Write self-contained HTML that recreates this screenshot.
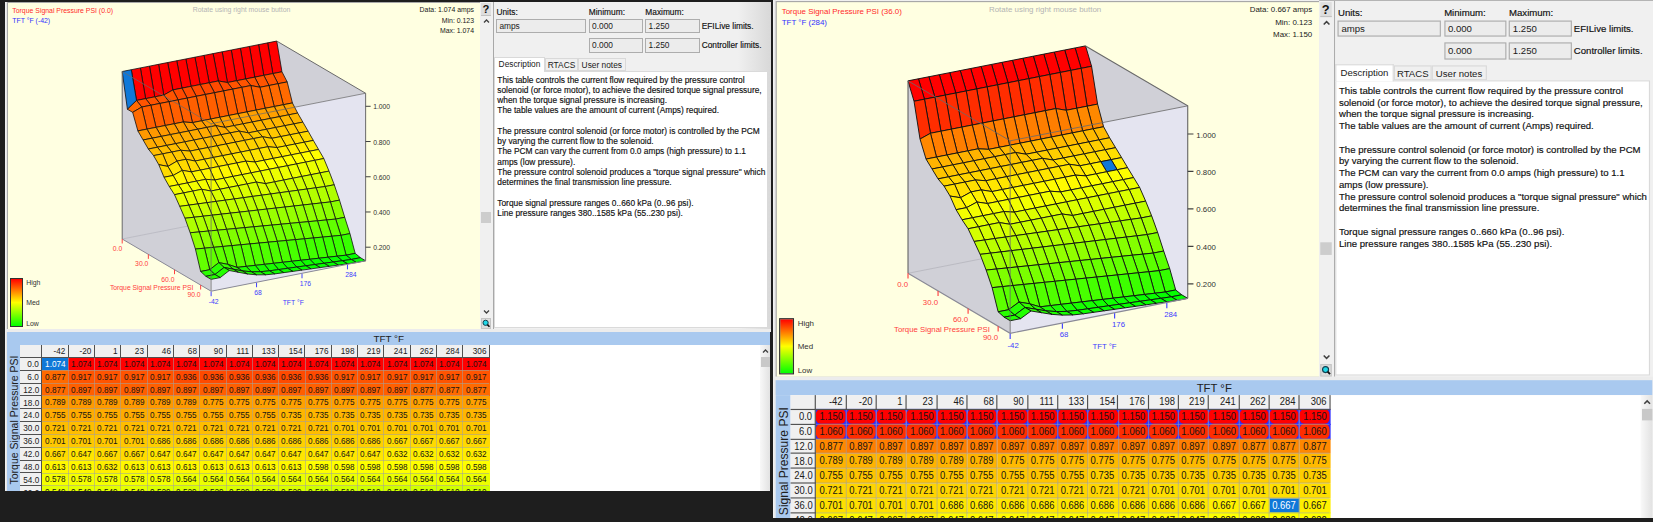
<!DOCTYPE html>
<html><head><meta charset="utf-8"><style>
*{margin:0;padding:0}
html,body{width:1653px;height:522px;overflow:hidden;background:#1e1e1e;position:relative}
.panel{position:absolute;left:0;top:0;width:771px;overflow:hidden;font-family:"Liberation Sans",sans-serif}
.panel div{position:absolute}
.ct{font-size:6.9px;line-height:8px;white-space:nowrap}
.ui{font-size:8.35px;line-height:10px;white-space:nowrap;color:#101010;-webkit-text-stroke:0.15px #101010}
.big{font-size:9.9px;line-height:12px;white-space:nowrap;color:#202020}
.box{background:#ececec;border:1px solid #adadad;box-sizing:border-box;font-size:8.35px;line-height:12.5px;color:#1a1a1a;padding-left:2.3px;white-space:nowrap}
.tab{background:#f0f0f0;border:1px solid #d9d9d9;box-sizing:border-box;font-size:8.35px;line-height:13.6px;text-align:center;color:#1a1a1a;white-space:nowrap}
.tx{height:11px;line-height:11px;white-space:nowrap}
.hd{text-align:right;color:#202020}
.dt{text-align:center}
.num{display:inline-block;font-size:9.9px;transform:scaleX(0.83);transform-origin:50% 50%;white-space:nowrap}
.hd .num{transform-origin:100% 50%}
</style></head>
<body>
<div style="position:absolute;left:773px;top:0;width:880px;height:518px;background:#f0f0f0"></div>
<div class="panel" style="height:491px">
<div style="position:absolute;left:5px;top:0px;width:2.2px;height:491px;background:linear-gradient(90deg,#f4f4f4,#e2e2e2)"></div>
<div style="position:absolute;left:7px;top:2px;width:473px;height:327px;background:#a8a8a8"></div>
<div style="position:absolute;left:7.7px;top:2.7px;width:472.3px;height:326.3px;background:#ffffe1;overflow:hidden">
<div style="position:absolute;left:-7.7px;top:-2.7px;width:771px;height:335px">
<svg width="771" height="335" viewBox="0 0 771 335" style="position:absolute;left:0;top:0" shape-rendering="geometricPrecision">
<polygon points="122.20,71.50 276.73,41.07 276.73,208.57 122.20,239.00" fill="#d0d0d7"/>
<polygon points="276.73,41.07 365.64,93.26 365.64,260.76 276.73,208.57" fill="#d0d0d7"/>
<polygon points="122.20,239.00 276.73,208.57 365.64,260.76 211.11,291.19" fill="#d0d0d7"/>
<polygon points="122.20,71.50 211.11,123.69 211.11,291.19 122.20,239.00" fill="#d0d0d7"/>
<polygon points="211.11,123.69 365.64,93.26 365.64,260.76 211.11,291.19" fill="#e4e4f0"/>
<line x1="122.2" y1="239.0" x2="276.73" y2="208.57" stroke="#b8b8c0" stroke-width="0.8"/>
<polygon points="267.64,42.86 276.73,41.07 281.96,71.79 272.87,73.58" fill="#ff0000" stroke="#101010" stroke-width="0.8" stroke-linejoin="round"/>
<polygon points="258.55,44.65 267.64,42.86 272.87,73.58 263.78,75.37" fill="#ff0000" stroke="#101010" stroke-width="0.8" stroke-linejoin="round"/>
<polygon points="272.87,73.58 281.96,71.79 287.19,81.91 278.10,83.70" fill="#ff5400" stroke="#101010" stroke-width="0.8" stroke-linejoin="round"/>
<polygon points="249.46,46.44 258.55,44.65 263.78,75.37 254.69,77.16" fill="#ff0000" stroke="#101010" stroke-width="0.8" stroke-linejoin="round"/>
<polygon points="263.78,75.37 272.87,73.58 278.10,83.70 269.01,85.49" fill="#ff5400" stroke="#101010" stroke-width="0.8" stroke-linejoin="round"/>
<polygon points="240.37,48.23 249.46,46.44 254.69,77.16 245.60,78.95" fill="#ff0000" stroke="#101010" stroke-width="0.8" stroke-linejoin="round"/>
<polygon points="278.10,83.70 287.19,81.91 292.42,102.94 283.33,104.73" fill="#ff6a00" stroke="#101010" stroke-width="0.8" stroke-linejoin="round"/>
<polygon points="254.69,77.16 263.78,75.37 269.01,85.49 259.92,87.28" fill="#ff5400" stroke="#101010" stroke-width="0.8" stroke-linejoin="round"/>
<polygon points="231.28,50.02 240.37,48.23 245.60,78.95 236.51,80.74" fill="#ff0000" stroke="#101010" stroke-width="0.8" stroke-linejoin="round"/>
<polygon points="269.01,85.49 278.10,83.70 283.33,104.73 274.24,106.52" fill="#ff6a00" stroke="#101010" stroke-width="0.8" stroke-linejoin="round"/>
<polygon points="245.60,78.95 254.69,77.16 259.92,87.28 250.83,85.55" fill="#ff5400" stroke="#101010" stroke-width="0.8" stroke-linejoin="round"/>
<polygon points="222.19,51.81 231.28,50.02 236.51,80.74 227.42,82.53" fill="#ff0000" stroke="#101010" stroke-width="0.8" stroke-linejoin="round"/>
<polygon points="283.33,104.73 292.42,102.94 297.65,113.06 288.56,114.85" fill="#ffa000" stroke="#101010" stroke-width="0.8" stroke-linejoin="round"/>
<polygon points="259.92,87.28 269.01,85.49 274.24,106.52 265.15,108.31" fill="#ff6a00" stroke="#101010" stroke-width="0.8" stroke-linejoin="round"/>
<polygon points="236.51,80.74 245.60,78.95 250.83,85.55 241.74,87.34" fill="#ff5400" stroke="#101010" stroke-width="0.8" stroke-linejoin="round"/>
<polygon points="213.10,53.60 222.19,51.81 227.42,82.53 218.33,80.98" fill="#ff0000" stroke="#101010" stroke-width="0.8" stroke-linejoin="round"/>
<polygon points="274.24,106.52 283.33,104.73 288.56,114.85 279.47,116.64" fill="#ffa000" stroke="#101010" stroke-width="0.8" stroke-linejoin="round"/>
<polygon points="250.83,85.55 259.92,87.28 265.15,108.31 256.06,110.10" fill="#ff5f00" stroke="#101010" stroke-width="0.8" stroke-linejoin="round"/>
<polygon points="227.42,82.53 236.51,80.74 241.74,87.34 232.65,89.13" fill="#ff5400" stroke="#101010" stroke-width="0.8" stroke-linejoin="round"/>
<polygon points="288.56,114.85 297.65,113.06 302.88,122.12 293.79,123.91" fill="#ffb600" stroke="#101010" stroke-width="0.8" stroke-linejoin="round"/>
<polygon points="204.01,55.39 213.10,53.60 218.33,80.98 209.24,82.77" fill="#ff0000" stroke="#101010" stroke-width="0.8" stroke-linejoin="round"/>
<polygon points="265.15,108.31 274.24,106.52 279.47,116.64 270.38,118.43" fill="#ffa000" stroke="#101010" stroke-width="0.8" stroke-linejoin="round"/>
<polygon points="241.74,87.34 250.83,85.55 256.06,110.10 246.97,111.89" fill="#ff5f00" stroke="#101010" stroke-width="0.8" stroke-linejoin="round"/>
<polygon points="218.33,80.98 227.42,82.53 232.65,89.13 223.56,90.92" fill="#ff4a00" stroke="#101010" stroke-width="0.8" stroke-linejoin="round"/>
<polygon points="279.47,116.64 288.56,114.85 293.79,123.91 284.70,125.70" fill="#ffb600" stroke="#101010" stroke-width="0.8" stroke-linejoin="round"/>
<polygon points="194.92,57.18 204.01,55.39 209.24,82.77 200.15,84.56" fill="#ff0000" stroke="#101010" stroke-width="0.8" stroke-linejoin="round"/>
<polygon points="256.06,110.10 265.15,108.31 270.38,118.43 261.29,120.22" fill="#ffa000" stroke="#101010" stroke-width="0.8" stroke-linejoin="round"/>
<polygon points="232.65,89.13 241.74,87.34 246.97,111.89 237.88,113.68" fill="#ff5f00" stroke="#101010" stroke-width="0.8" stroke-linejoin="round"/>
<polygon points="293.79,123.91 302.88,122.12 308.11,131.18 299.02,132.97" fill="#ffc800" stroke="#101010" stroke-width="0.8" stroke-linejoin="round"/>
<polygon points="209.24,82.77 218.33,80.98 223.56,90.92 214.47,92.71" fill="#ff4a00" stroke="#101010" stroke-width="0.8" stroke-linejoin="round"/>
<polygon points="270.38,118.43 279.47,116.64 284.70,125.70 275.61,127.49" fill="#ffb600" stroke="#101010" stroke-width="0.8" stroke-linejoin="round"/>
<polygon points="185.83,58.97 194.92,57.18 200.15,84.56 191.06,86.35" fill="#ff0000" stroke="#101010" stroke-width="0.8" stroke-linejoin="round"/>
<polygon points="246.97,111.89 256.06,110.10 261.29,120.22 252.20,122.01" fill="#ffa000" stroke="#101010" stroke-width="0.8" stroke-linejoin="round"/>
<polygon points="223.56,90.92 232.65,89.13 237.88,113.68 228.79,115.47" fill="#ff5f00" stroke="#101010" stroke-width="0.8" stroke-linejoin="round"/>
<polygon points="284.70,125.70 293.79,123.91 299.02,132.97 289.93,134.76" fill="#ffc800" stroke="#101010" stroke-width="0.8" stroke-linejoin="round"/>
<polygon points="200.15,84.56 209.24,82.77 214.47,92.71 205.38,94.50" fill="#ff4a00" stroke="#101010" stroke-width="0.8" stroke-linejoin="round"/>
<polygon points="261.29,120.22 270.38,118.43 275.61,127.49 266.52,129.28" fill="#ffb600" stroke="#101010" stroke-width="0.8" stroke-linejoin="round"/>
<polygon points="176.74,60.76 185.83,58.97 191.06,86.35 181.97,88.14" fill="#ff0000" stroke="#101010" stroke-width="0.8" stroke-linejoin="round"/>
<polygon points="237.88,113.68 246.97,111.89 252.20,122.01 243.11,123.80" fill="#ffa000" stroke="#101010" stroke-width="0.8" stroke-linejoin="round"/>
<polygon points="299.02,132.97 308.11,131.18 313.34,140.41 304.25,142.20" fill="#ffda00" stroke="#101010" stroke-width="0.8" stroke-linejoin="round"/>
<polygon points="214.47,92.71 223.56,90.92 228.79,115.47 219.70,117.26" fill="#ff5f00" stroke="#101010" stroke-width="0.8" stroke-linejoin="round"/>
<polygon points="275.61,127.49 284.70,125.70 289.93,134.76 280.84,136.55" fill="#ffc800" stroke="#101010" stroke-width="0.8" stroke-linejoin="round"/>
<polygon points="191.06,86.35 200.15,84.56 205.38,94.50 196.29,96.29" fill="#ff4a00" stroke="#101010" stroke-width="0.8" stroke-linejoin="round"/>
<polygon points="252.20,122.01 261.29,120.22 266.52,129.28 257.43,131.07" fill="#ffb600" stroke="#101010" stroke-width="0.8" stroke-linejoin="round"/>
<polygon points="167.65,62.55 176.74,60.76 181.97,88.14 172.88,89.93" fill="#ff0000" stroke="#101010" stroke-width="0.8" stroke-linejoin="round"/>
<polygon points="228.79,115.47 237.88,113.68 243.11,123.80 234.02,125.59" fill="#ffa000" stroke="#101010" stroke-width="0.8" stroke-linejoin="round"/>
<polygon points="289.93,134.76 299.02,132.97 304.25,142.20 295.16,143.99" fill="#ffda00" stroke="#101010" stroke-width="0.8" stroke-linejoin="round"/>
<polygon points="205.38,94.50 214.47,92.71 219.70,117.26 210.61,119.05" fill="#ff5f00" stroke="#101010" stroke-width="0.8" stroke-linejoin="round"/>
<polygon points="266.52,129.28 275.61,127.49 280.84,136.55 271.75,138.34" fill="#ffc800" stroke="#101010" stroke-width="0.8" stroke-linejoin="round"/>
<polygon points="181.97,88.14 191.06,86.35 196.29,96.29 187.20,98.08" fill="#ff4a00" stroke="#101010" stroke-width="0.8" stroke-linejoin="round"/>
<polygon points="243.11,123.80 252.20,122.01 257.43,131.07 248.34,132.86" fill="#ffb600" stroke="#101010" stroke-width="0.8" stroke-linejoin="round"/>
<polygon points="158.56,64.34 167.65,62.55 172.88,89.93 163.79,95.06" fill="#ff0000" stroke="#101010" stroke-width="0.8" stroke-linejoin="round"/>
<polygon points="304.25,142.20 313.34,140.41 318.57,149.47 309.48,151.26" fill="#ffed00" stroke="#101010" stroke-width="0.8" stroke-linejoin="round"/>
<polygon points="219.70,117.26 228.79,115.47 234.02,125.59 224.93,127.38" fill="#ffa000" stroke="#101010" stroke-width="0.8" stroke-linejoin="round"/>
<polygon points="280.84,136.55 289.93,134.76 295.16,143.99 286.07,145.78" fill="#ffda00" stroke="#101010" stroke-width="0.8" stroke-linejoin="round"/>
<polygon points="196.29,96.29 205.38,94.50 210.61,119.05 201.52,120.84" fill="#ff5f00" stroke="#101010" stroke-width="0.8" stroke-linejoin="round"/>
<polygon points="257.43,131.07 266.52,129.28 271.75,138.34 262.66,136.78" fill="#ffc800" stroke="#101010" stroke-width="0.8" stroke-linejoin="round"/>
<polygon points="172.88,89.93 181.97,88.14 187.20,98.08 178.11,99.87" fill="#ff4a00" stroke="#101010" stroke-width="0.8" stroke-linejoin="round"/>
<polygon points="234.02,125.59 243.11,123.80 248.34,132.86 239.25,131.12" fill="#ffb600" stroke="#101010" stroke-width="0.8" stroke-linejoin="round"/>
<polygon points="149.47,66.13 158.56,64.34 163.79,95.06 154.70,96.85" fill="#ff0000" stroke="#101010" stroke-width="0.8" stroke-linejoin="round"/>
<polygon points="295.16,143.99 304.25,142.20 309.48,151.26 300.39,153.05" fill="#ffed00" stroke="#101010" stroke-width="0.8" stroke-linejoin="round"/>
<polygon points="210.61,119.05 219.70,117.26 224.93,127.38 215.84,125.65" fill="#ffa000" stroke="#101010" stroke-width="0.8" stroke-linejoin="round"/>
<polygon points="271.75,138.34 280.84,136.55 286.07,145.78 276.98,147.57" fill="#ffda00" stroke="#101010" stroke-width="0.8" stroke-linejoin="round"/>
<polygon points="187.20,98.08 196.29,96.29 201.52,120.84 192.43,122.63" fill="#ff5f00" stroke="#101010" stroke-width="0.8" stroke-linejoin="round"/>
<polygon points="248.34,132.86 257.43,131.07 262.66,136.78 253.57,138.57" fill="#ffc800" stroke="#101010" stroke-width="0.8" stroke-linejoin="round"/>
<polygon points="163.79,95.06 172.88,89.93 178.11,99.87 169.02,101.66" fill="#ff5400" stroke="#101010" stroke-width="0.8" stroke-linejoin="round"/>
<polygon points="309.48,151.26 318.57,149.47 323.80,158.53 314.71,160.32" fill="#ffff00" stroke="#101010" stroke-width="0.8" stroke-linejoin="round"/>
<polygon points="224.93,127.38 234.02,125.59 239.25,131.12 230.16,132.91" fill="#ffb600" stroke="#101010" stroke-width="0.8" stroke-linejoin="round"/>
<polygon points="140.38,67.92 149.47,66.13 154.70,96.85 145.61,98.64" fill="#ff0000" stroke="#101010" stroke-width="0.8" stroke-linejoin="round"/>
<polygon points="286.07,145.78 295.16,143.99 300.39,153.05 291.30,154.84" fill="#ffed00" stroke="#101010" stroke-width="0.8" stroke-linejoin="round"/>
<polygon points="201.52,120.84 210.61,119.05 215.84,125.65 206.75,127.44" fill="#ffa000" stroke="#101010" stroke-width="0.8" stroke-linejoin="round"/>
<polygon points="262.66,136.78 271.75,138.34 276.98,147.57 267.89,146.72" fill="#ffd000" stroke="#101010" stroke-width="0.8" stroke-linejoin="round"/>
<polygon points="178.11,99.87 187.20,98.08 192.43,122.63 183.34,121.96" fill="#ff5f00" stroke="#101010" stroke-width="0.8" stroke-linejoin="round"/>
<polygon points="239.25,131.12 248.34,132.86 253.57,138.57 244.48,140.36" fill="#ffbd00" stroke="#101010" stroke-width="0.8" stroke-linejoin="round"/>
<polygon points="154.70,96.85 163.79,95.06 169.02,101.66 159.93,103.45" fill="#ff5400" stroke="#101010" stroke-width="0.8" stroke-linejoin="round"/>
<polygon points="300.39,153.05 309.48,151.26 314.71,160.32 305.62,162.11" fill="#ffff00" stroke="#101010" stroke-width="0.8" stroke-linejoin="round"/>
<polygon points="215.84,125.65 224.93,127.38 230.16,132.91 221.07,134.70" fill="#ffab00" stroke="#101010" stroke-width="0.8" stroke-linejoin="round"/>
<polygon points="131.29,69.71 140.38,67.92 145.61,98.64 136.52,100.43" fill="#ff0000" stroke="#101010" stroke-width="0.8" stroke-linejoin="round"/>
<polygon points="276.98,147.57 286.07,145.78 291.30,154.84 282.21,156.63" fill="#ffed00" stroke="#101010" stroke-width="0.8" stroke-linejoin="round"/>
<polygon points="192.43,122.63 201.52,120.84 206.75,127.44 197.66,129.23" fill="#ffa000" stroke="#101010" stroke-width="0.8" stroke-linejoin="round"/>
<polygon points="253.57,138.57 262.66,136.78 267.89,146.72 258.80,148.51" fill="#ffd000" stroke="#101010" stroke-width="0.8" stroke-linejoin="round"/>
<polygon points="169.02,101.66 178.11,99.87 183.34,121.96 174.25,123.75" fill="#ff5f00" stroke="#101010" stroke-width="0.8" stroke-linejoin="round"/>
<polygon points="314.71,160.32 323.80,158.53 329.03,171.11 319.94,172.90" fill="#ecff00" stroke="#101010" stroke-width="0.8" stroke-linejoin="round"/>
<polygon points="230.16,132.91 239.25,131.12 244.48,140.36 235.39,142.15" fill="#ffbd00" stroke="#101010" stroke-width="0.8" stroke-linejoin="round"/>
<polygon points="145.61,98.64 154.70,96.85 159.93,103.45 150.84,105.24" fill="#ff5400" stroke="#101010" stroke-width="0.8" stroke-linejoin="round"/>
<polygon points="291.30,154.84 300.39,153.05 305.62,162.11 296.53,163.90" fill="#ffff00" stroke="#101010" stroke-width="0.8" stroke-linejoin="round"/>
<polygon points="206.75,127.44 215.84,125.65 221.07,134.70 211.98,136.49" fill="#ffab00" stroke="#101010" stroke-width="0.8" stroke-linejoin="round"/>
<polygon points="122.20,71.50 131.29,69.71 136.52,100.43 127.43,109.27" fill="#0f78d8" stroke="#101010" stroke-width="0.8" stroke-linejoin="round"/>
<polygon points="267.89,146.72 276.98,147.57 282.21,156.63 273.12,158.42" fill="#ffe500" stroke="#101010" stroke-width="0.8" stroke-linejoin="round"/>
<polygon points="183.34,121.96 192.43,122.63 197.66,129.23 188.57,131.02" fill="#ff9900" stroke="#101010" stroke-width="0.8" stroke-linejoin="round"/>
<polygon points="244.48,140.36 253.57,138.57 258.80,148.51 249.71,150.30" fill="#ffd000" stroke="#101010" stroke-width="0.8" stroke-linejoin="round"/>
<polygon points="159.93,103.45 169.02,101.66 174.25,123.75 165.16,125.54" fill="#ff5f00" stroke="#101010" stroke-width="0.8" stroke-linejoin="round"/>
<polygon points="305.62,162.11 314.71,160.32 319.94,172.90 310.85,174.69" fill="#ecff00" stroke="#101010" stroke-width="0.8" stroke-linejoin="round"/>
<polygon points="221.07,134.70 230.16,132.91 235.39,142.15 226.30,143.94" fill="#ffbd00" stroke="#101010" stroke-width="0.8" stroke-linejoin="round"/>
<polygon points="136.52,100.43 145.61,98.64 150.84,105.24 141.75,107.03" fill="#ff5400" stroke="#101010" stroke-width="0.8" stroke-linejoin="round"/>
<polygon points="282.21,156.63 291.30,154.84 296.53,163.90 287.44,165.69" fill="#ffff00" stroke="#101010" stroke-width="0.8" stroke-linejoin="round"/>
<polygon points="197.66,129.23 206.75,127.44 211.98,136.49 202.89,138.28" fill="#ffab00" stroke="#101010" stroke-width="0.8" stroke-linejoin="round"/>
<polygon points="258.80,148.51 267.89,146.72 273.12,158.42 264.03,160.21" fill="#ffe500" stroke="#101010" stroke-width="0.8" stroke-linejoin="round"/>
<polygon points="174.25,123.75 183.34,121.96 188.57,131.02 179.48,132.81" fill="#ff9900" stroke="#101010" stroke-width="0.8" stroke-linejoin="round"/>
<polygon points="319.94,172.90 329.03,171.11 334.26,184.75 325.17,186.54" fill="#d0ff00" stroke="#101010" stroke-width="0.8" stroke-linejoin="round"/>
<polygon points="235.39,142.15 244.48,140.36 249.71,150.30 240.62,152.09" fill="#ffd000" stroke="#101010" stroke-width="0.8" stroke-linejoin="round"/>
<polygon points="150.84,105.24 159.93,103.45 165.16,125.54 156.07,127.33" fill="#ff5f00" stroke="#101010" stroke-width="0.8" stroke-linejoin="round"/>
<polygon points="296.53,163.90 305.62,162.11 310.85,174.69 301.76,176.48" fill="#ecff00" stroke="#101010" stroke-width="0.8" stroke-linejoin="round"/>
<polygon points="211.98,136.49 221.07,134.70 226.30,143.94 217.21,145.73" fill="#ffbd00" stroke="#101010" stroke-width="0.8" stroke-linejoin="round"/>
<polygon points="127.43,109.27 136.52,100.43 141.75,107.03 132.66,112.34" fill="#ff6a00" stroke="#101010" stroke-width="0.8" stroke-linejoin="round"/>
<polygon points="273.12,158.42 282.21,156.63 287.44,165.69 278.35,167.48" fill="#ffff00" stroke="#101010" stroke-width="0.8" stroke-linejoin="round"/>
<polygon points="188.57,131.02 197.66,129.23 202.89,138.28 193.80,140.07" fill="#ffab00" stroke="#101010" stroke-width="0.8" stroke-linejoin="round"/>
<polygon points="249.71,150.30 258.80,148.51 264.03,160.21 254.94,162.00" fill="#ffe500" stroke="#101010" stroke-width="0.8" stroke-linejoin="round"/>
<polygon points="165.16,125.54 174.25,123.75 179.48,132.81 170.39,134.60" fill="#ff9900" stroke="#101010" stroke-width="0.8" stroke-linejoin="round"/>
<polygon points="310.85,174.69 319.94,172.90 325.17,186.54 316.08,187.77" fill="#d0ff00" stroke="#101010" stroke-width="0.8" stroke-linejoin="round"/>
<polygon points="226.30,143.94 235.39,142.15 240.62,152.09 231.53,153.88" fill="#ffd000" stroke="#101010" stroke-width="0.8" stroke-linejoin="round"/>
<polygon points="141.75,107.03 150.84,105.24 156.07,127.33 146.98,129.12" fill="#ff5f00" stroke="#101010" stroke-width="0.8" stroke-linejoin="round"/>
<polygon points="287.44,165.69 296.53,163.90 301.76,176.48 292.67,178.27" fill="#ecff00" stroke="#101010" stroke-width="0.8" stroke-linejoin="round"/>
<polygon points="202.89,138.28 211.98,136.49 217.21,145.73 208.12,147.52" fill="#ffbd00" stroke="#101010" stroke-width="0.8" stroke-linejoin="round"/>
<polygon points="264.03,160.21 273.12,158.42 278.35,167.48 269.26,169.27" fill="#ffff00" stroke="#101010" stroke-width="0.8" stroke-linejoin="round"/>
<polygon points="179.48,132.81 188.57,131.02 193.80,140.07 184.71,141.86" fill="#ffab00" stroke="#101010" stroke-width="0.8" stroke-linejoin="round"/>
<polygon points="325.17,186.54 334.26,184.75 339.49,200.14 330.40,201.93" fill="#afff00" stroke="#101010" stroke-width="0.8" stroke-linejoin="round"/>
<polygon points="240.62,152.09 249.71,150.30 254.94,162.00 245.85,161.15" fill="#ffe500" stroke="#101010" stroke-width="0.8" stroke-linejoin="round"/>
<polygon points="156.07,127.33 165.16,125.54 170.39,134.60 161.30,136.39" fill="#ff9900" stroke="#101010" stroke-width="0.8" stroke-linejoin="round"/>
<polygon points="301.76,176.48 310.85,174.69 316.08,187.77 306.99,189.01" fill="#d0ff00" stroke="#101010" stroke-width="0.8" stroke-linejoin="round"/>
<polygon points="217.21,145.73 226.30,143.94 231.53,153.88 222.44,155.67" fill="#ffd000" stroke="#101010" stroke-width="0.8" stroke-linejoin="round"/>
<polygon points="132.66,112.34 141.75,107.03 146.98,129.12 137.89,130.91" fill="#ff6a00" stroke="#101010" stroke-width="0.8" stroke-linejoin="round"/>
<polygon points="278.35,167.48 287.44,165.69 292.67,178.27 283.58,180.06" fill="#ecff00" stroke="#101010" stroke-width="0.8" stroke-linejoin="round"/>
<polygon points="193.80,140.07 202.89,138.28 208.12,147.52 199.03,149.31" fill="#ffbd00" stroke="#101010" stroke-width="0.8" stroke-linejoin="round"/>
<polygon points="254.94,162.00 264.03,160.21 269.26,169.27 260.17,171.06" fill="#ffff00" stroke="#101010" stroke-width="0.8" stroke-linejoin="round"/>
<polygon points="170.39,134.60 179.48,132.81 184.71,141.86 175.62,143.65" fill="#ffab00" stroke="#101010" stroke-width="0.8" stroke-linejoin="round"/>
<polygon points="316.08,187.77 325.17,186.54 330.40,201.93 321.31,202.95" fill="#b1ff00" stroke="#101010" stroke-width="0.8" stroke-linejoin="round"/>
<polygon points="231.53,153.88 240.62,152.09 245.85,161.15 236.76,162.94" fill="#ffe500" stroke="#101010" stroke-width="0.8" stroke-linejoin="round"/>
<polygon points="146.98,129.12 156.07,127.33 161.30,136.39 152.21,138.18" fill="#ff9900" stroke="#101010" stroke-width="0.8" stroke-linejoin="round"/>
<polygon points="292.67,178.27 301.76,176.48 306.99,189.01 297.90,190.25" fill="#d0ff00" stroke="#101010" stroke-width="0.8" stroke-linejoin="round"/>
<polygon points="208.12,147.52 217.21,145.73 222.44,155.67 213.35,157.46" fill="#ffd000" stroke="#101010" stroke-width="0.8" stroke-linejoin="round"/>
<polygon points="269.26,169.27 278.35,167.48 283.58,180.06 274.49,181.85" fill="#ecff00" stroke="#101010" stroke-width="0.8" stroke-linejoin="round"/>
<polygon points="184.71,141.86 193.80,140.07 199.03,149.31 189.94,151.10" fill="#ffbd00" stroke="#101010" stroke-width="0.8" stroke-linejoin="round"/>
<polygon points="330.40,201.93 339.49,200.14 344.72,217.30 335.63,219.09" fill="#8aff00" stroke="#101010" stroke-width="0.8" stroke-linejoin="round"/>
<polygon points="245.85,161.15 254.94,162.00 260.17,171.06 251.08,172.85" fill="#fff700" stroke="#101010" stroke-width="0.8" stroke-linejoin="round"/>
<polygon points="161.30,136.39 170.39,134.60 175.62,143.65 166.53,145.44" fill="#ffab00" stroke="#101010" stroke-width="0.8" stroke-linejoin="round"/>
<polygon points="306.99,189.01 316.08,187.77 321.31,202.95 312.22,203.97" fill="#b3ff00" stroke="#101010" stroke-width="0.8" stroke-linejoin="round"/>
<polygon points="222.44,155.67 231.53,153.88 236.76,162.94 227.67,164.73" fill="#ffe500" stroke="#101010" stroke-width="0.8" stroke-linejoin="round"/>
<polygon points="137.89,130.91 146.98,129.12 152.21,138.18 143.12,139.97" fill="#ff9900" stroke="#101010" stroke-width="0.8" stroke-linejoin="round"/>
<polygon points="283.58,180.06 292.67,178.27 297.90,190.25 288.81,191.49" fill="#d0ff00" stroke="#101010" stroke-width="0.8" stroke-linejoin="round"/>
<polygon points="199.03,149.31 208.12,147.52 213.35,157.46 204.26,159.25" fill="#ffd000" stroke="#101010" stroke-width="0.8" stroke-linejoin="round"/>
<polygon points="260.17,171.06 269.26,169.27 274.49,181.85 265.40,183.64" fill="#ecff00" stroke="#101010" stroke-width="0.8" stroke-linejoin="round"/>
<polygon points="175.62,143.65 184.71,141.86 189.94,151.10 180.85,150.25" fill="#ffbd00" stroke="#101010" stroke-width="0.8" stroke-linejoin="round"/>
<polygon points="321.31,202.95 330.40,201.93 335.63,219.09 326.54,219.95" fill="#8cff00" stroke="#101010" stroke-width="0.8" stroke-linejoin="round"/>
<polygon points="236.76,162.94 245.85,161.15 251.08,172.85 241.99,174.64" fill="#fff700" stroke="#101010" stroke-width="0.8" stroke-linejoin="round"/>
<polygon points="152.21,138.18 161.30,136.39 166.53,145.44 157.44,147.23" fill="#ffab00" stroke="#101010" stroke-width="0.8" stroke-linejoin="round"/>
<polygon points="297.90,190.25 306.99,189.01 312.22,203.97 303.13,204.99" fill="#b4ff00" stroke="#101010" stroke-width="0.8" stroke-linejoin="round"/>
<polygon points="213.35,157.46 222.44,155.67 227.67,164.73 218.58,166.52" fill="#ffe500" stroke="#101010" stroke-width="0.8" stroke-linejoin="round"/>
<polygon points="274.49,181.85 283.58,180.06 288.81,191.49 279.72,192.73" fill="#d0ff00" stroke="#101010" stroke-width="0.8" stroke-linejoin="round"/>
<polygon points="189.94,151.10 199.03,149.31 204.26,159.25 195.17,161.04" fill="#ffd000" stroke="#101010" stroke-width="0.8" stroke-linejoin="round"/>
<polygon points="335.63,219.09 344.72,217.30 349.95,233.58 340.86,235.37" fill="#5fff00" stroke="#101010" stroke-width="0.8" stroke-linejoin="round"/>
<polygon points="251.08,172.85 260.17,171.06 265.40,183.64 256.31,182.08" fill="#ecff00" stroke="#101010" stroke-width="0.8" stroke-linejoin="round"/>
<polygon points="166.53,145.44 175.62,143.65 180.85,150.25 171.76,152.04" fill="#ffbd00" stroke="#101010" stroke-width="0.8" stroke-linejoin="round"/>
<polygon points="312.22,203.97 321.31,202.95 326.54,219.95 317.45,220.80" fill="#8fff00" stroke="#101010" stroke-width="0.8" stroke-linejoin="round"/>
<polygon points="227.67,164.73 236.76,162.94 241.99,174.64 232.90,176.43" fill="#fff700" stroke="#101010" stroke-width="0.8" stroke-linejoin="round"/>
<polygon points="143.12,139.97 152.21,138.18 157.44,147.23 148.35,149.02" fill="#ffab00" stroke="#101010" stroke-width="0.8" stroke-linejoin="round"/>
<polygon points="288.81,191.49 297.90,190.25 303.13,204.99 294.04,206.01" fill="#b6ff00" stroke="#101010" stroke-width="0.8" stroke-linejoin="round"/>
<polygon points="204.26,159.25 213.35,157.46 218.58,166.52 209.49,168.31" fill="#ffe500" stroke="#101010" stroke-width="0.8" stroke-linejoin="round"/>
<polygon points="265.40,183.64 274.49,181.85 279.72,192.73 270.63,193.97" fill="#d0ff00" stroke="#101010" stroke-width="0.8" stroke-linejoin="round"/>
<polygon points="180.85,150.25 189.94,151.10 195.17,161.04 186.08,159.31" fill="#ffc800" stroke="#101010" stroke-width="0.8" stroke-linejoin="round"/>
<polygon points="326.54,219.95 335.63,219.09 340.86,235.37 331.77,236.23" fill="#62ff00" stroke="#101010" stroke-width="0.8" stroke-linejoin="round"/>
<polygon points="241.99,174.64 251.08,172.85 256.31,182.08 247.22,183.87" fill="#ecff00" stroke="#101010" stroke-width="0.8" stroke-linejoin="round"/>
<polygon points="157.44,147.23 166.53,145.44 171.76,152.04 162.67,153.83" fill="#ffbd00" stroke="#101010" stroke-width="0.8" stroke-linejoin="round"/>
<polygon points="303.13,204.99 312.22,203.97 317.45,220.80 308.36,221.66" fill="#91ff00" stroke="#101010" stroke-width="0.8" stroke-linejoin="round"/>
<polygon points="218.58,166.52 227.67,164.73 232.90,176.43 223.81,178.22" fill="#fff700" stroke="#101010" stroke-width="0.8" stroke-linejoin="round"/>
<polygon points="279.72,192.73 288.81,191.49 294.04,206.01 284.95,207.03" fill="#b8ff00" stroke="#101010" stroke-width="0.8" stroke-linejoin="round"/>
<polygon points="195.17,161.04 204.26,159.25 209.49,168.31 200.40,170.10" fill="#ffe500" stroke="#101010" stroke-width="0.8" stroke-linejoin="round"/>
<polygon points="340.86,235.37 349.95,233.58 355.18,253.39 346.09,255.18" fill="#37ff00" stroke="#101010" stroke-width="0.8" stroke-linejoin="round"/>
<polygon points="256.31,182.08 265.40,183.64 270.63,193.97 261.54,195.21" fill="#daff00" stroke="#101010" stroke-width="0.8" stroke-linejoin="round"/>
<polygon points="171.76,152.04 180.85,150.25 186.08,159.31 176.99,161.10" fill="#ffc800" stroke="#101010" stroke-width="0.8" stroke-linejoin="round"/>
<polygon points="317.45,220.80 326.54,219.95 331.77,236.23 322.68,237.08" fill="#65ff00" stroke="#101010" stroke-width="0.8" stroke-linejoin="round"/>
<polygon points="232.90,176.43 241.99,174.64 247.22,183.87 238.13,185.66" fill="#ecff00" stroke="#101010" stroke-width="0.8" stroke-linejoin="round"/>
<polygon points="148.35,149.02 157.44,147.23 162.67,153.83 153.58,155.62" fill="#ffbd00" stroke="#101010" stroke-width="0.8" stroke-linejoin="round"/>
<polygon points="294.04,206.01 303.13,204.99 308.36,221.66 299.27,222.51" fill="#93ff00" stroke="#101010" stroke-width="0.8" stroke-linejoin="round"/>
<polygon points="209.49,168.31 218.58,166.52 223.81,178.22 214.72,180.01" fill="#fff700" stroke="#101010" stroke-width="0.8" stroke-linejoin="round"/>
<polygon points="270.63,193.97 279.72,192.73 284.95,207.03 275.86,208.05" fill="#b9ff00" stroke="#101010" stroke-width="0.8" stroke-linejoin="round"/>
<polygon points="186.08,159.31 195.17,161.04 200.40,170.10 191.31,171.89" fill="#ffda00" stroke="#101010" stroke-width="0.8" stroke-linejoin="round"/>
<polygon points="331.77,236.23 340.86,235.37 346.09,255.18 337.00,256.20" fill="#3aff00" stroke="#101010" stroke-width="0.8" stroke-linejoin="round"/>
<polygon points="247.22,183.87 256.31,182.08 261.54,195.21 252.45,196.45" fill="#daff00" stroke="#101010" stroke-width="0.8" stroke-linejoin="round"/>
<polygon points="162.67,153.83 171.76,152.04 176.99,161.10 167.90,166.41" fill="#ffc800" stroke="#101010" stroke-width="0.8" stroke-linejoin="round"/>
<polygon points="308.36,221.66 317.45,220.80 322.68,237.08 313.59,237.94" fill="#67ff00" stroke="#101010" stroke-width="0.8" stroke-linejoin="round"/>
<polygon points="223.81,178.22 232.90,176.43 238.13,185.66 229.04,187.45" fill="#ecff00" stroke="#101010" stroke-width="0.8" stroke-linejoin="round"/>
<polygon points="284.95,207.03 294.04,206.01 299.27,222.51 290.18,223.37" fill="#96ff00" stroke="#101010" stroke-width="0.8" stroke-linejoin="round"/>
<polygon points="200.40,170.10 209.49,168.31 214.72,180.01 205.63,179.33" fill="#fff700" stroke="#101010" stroke-width="0.8" stroke-linejoin="round"/>
<polygon points="346.09,255.18 355.18,253.39 360.41,257.69 351.32,259.48" fill="#04ff00" stroke="#101010" stroke-width="0.8" stroke-linejoin="round"/>
<polygon points="261.54,195.21 270.63,193.97 275.86,208.05 266.77,209.07" fill="#bbff00" stroke="#101010" stroke-width="0.8" stroke-linejoin="round"/>
<polygon points="176.99,161.10 186.08,159.31 191.31,171.89 182.22,170.33" fill="#ffda00" stroke="#101010" stroke-width="0.8" stroke-linejoin="round"/>
<polygon points="322.68,237.08 331.77,236.23 337.00,256.20 327.91,257.22" fill="#3cff00" stroke="#101010" stroke-width="0.8" stroke-linejoin="round"/>
<polygon points="238.13,185.66 247.22,183.87 252.45,196.45 243.36,197.69" fill="#daff00" stroke="#101010" stroke-width="0.8" stroke-linejoin="round"/>
<polygon points="153.58,155.62 162.67,153.83 167.90,166.41 158.81,164.68" fill="#ffc800" stroke="#101010" stroke-width="0.8" stroke-linejoin="round"/>
<polygon points="299.27,222.51 308.36,221.66 313.59,237.94 304.50,238.79" fill="#6aff00" stroke="#101010" stroke-width="0.8" stroke-linejoin="round"/>
<polygon points="214.72,180.01 223.81,178.22 229.04,187.45 219.95,189.24" fill="#ecff00" stroke="#101010" stroke-width="0.8" stroke-linejoin="round"/>
<polygon points="275.86,208.05 284.95,207.03 290.18,223.37 281.09,224.22" fill="#98ff00" stroke="#101010" stroke-width="0.8" stroke-linejoin="round"/>
<polygon points="191.31,171.89 200.40,170.10 205.63,179.33 196.54,181.12" fill="#fff700" stroke="#101010" stroke-width="0.8" stroke-linejoin="round"/>
<polygon points="337.00,256.20 346.09,255.18 351.32,259.48 342.23,260.74" fill="#06ff00" stroke="#101010" stroke-width="0.8" stroke-linejoin="round"/>
<polygon points="252.45,196.45 261.54,195.21 266.77,209.07 257.68,210.09" fill="#bdff00" stroke="#101010" stroke-width="0.8" stroke-linejoin="round"/>
<polygon points="167.90,166.41 176.99,161.10 182.22,170.33 173.13,175.47" fill="#ffe500" stroke="#101010" stroke-width="0.8" stroke-linejoin="round"/>
<polygon points="313.59,237.94 322.68,237.08 327.91,257.22 318.82,258.24" fill="#3fff00" stroke="#101010" stroke-width="0.8" stroke-linejoin="round"/>
<polygon points="229.04,187.45 238.13,185.66 243.36,197.69 234.27,198.93" fill="#daff00" stroke="#101010" stroke-width="0.8" stroke-linejoin="round"/>
<polygon points="290.18,223.37 299.27,222.51 304.50,238.79 295.41,239.65" fill="#6dff00" stroke="#101010" stroke-width="0.8" stroke-linejoin="round"/>
<polygon points="205.63,179.33 214.72,180.01 219.95,189.24 210.86,191.03" fill="#f4ff00" stroke="#101010" stroke-width="0.8" stroke-linejoin="round"/>
<polygon points="351.32,259.48 360.41,257.69 365.64,260.76 356.55,262.55" fill="#00ff00" stroke="#101010" stroke-width="0.8" stroke-linejoin="round"/>
<polygon points="266.77,209.07 275.86,208.05 281.09,224.22 272.00,225.08" fill="#9aff00" stroke="#101010" stroke-width="0.8" stroke-linejoin="round"/>
<polygon points="182.22,170.33 191.31,171.89 196.54,181.12 187.45,182.91" fill="#ffed00" stroke="#101010" stroke-width="0.8" stroke-linejoin="round"/>
<polygon points="327.91,257.22 337.00,256.20 342.23,260.74 333.14,262.00" fill="#08ff00" stroke="#101010" stroke-width="0.8" stroke-linejoin="round"/>
<polygon points="243.36,197.69 252.45,196.45 257.68,210.09 248.59,211.11" fill="#beff00" stroke="#101010" stroke-width="0.8" stroke-linejoin="round"/>
<polygon points="158.81,164.68 167.90,166.41 173.13,175.47 164.04,177.26" fill="#ffda00" stroke="#101010" stroke-width="0.8" stroke-linejoin="round"/>
<polygon points="304.50,238.79 313.59,237.94 318.82,258.24 309.73,259.25" fill="#42ff00" stroke="#101010" stroke-width="0.8" stroke-linejoin="round"/>
<polygon points="219.95,189.24 229.04,187.45 234.27,198.93 225.18,200.17" fill="#daff00" stroke="#101010" stroke-width="0.8" stroke-linejoin="round"/>
<polygon points="281.09,224.22 290.18,223.37 295.41,239.65 286.32,240.50" fill="#70ff00" stroke="#101010" stroke-width="0.8" stroke-linejoin="round"/>
<polygon points="196.54,181.12 205.63,179.33 210.86,191.03 201.77,189.30" fill="#f4ff00" stroke="#101010" stroke-width="0.8" stroke-linejoin="round"/>
<polygon points="342.23,260.74 351.32,259.48 356.55,262.55 347.46,263.81" fill="#02ff00" stroke="#101010" stroke-width="0.8" stroke-linejoin="round"/>
<polygon points="257.68,210.09 266.77,209.07 272.00,225.08 262.91,225.93" fill="#9dff00" stroke="#101010" stroke-width="0.8" stroke-linejoin="round"/>
<polygon points="173.13,175.47 182.22,170.33 187.45,182.91 178.36,184.70" fill="#fff700" stroke="#101010" stroke-width="0.8" stroke-linejoin="round"/>
<polygon points="318.82,258.24 327.91,257.22 333.14,262.00 324.05,263.26" fill="#0bff00" stroke="#101010" stroke-width="0.8" stroke-linejoin="round"/>
<polygon points="234.27,198.93 243.36,197.69 248.59,211.11 239.50,212.13" fill="#c0ff00" stroke="#101010" stroke-width="0.8" stroke-linejoin="round"/>
<polygon points="295.41,239.65 304.50,238.79 309.73,259.25 300.64,260.27" fill="#45ff00" stroke="#101010" stroke-width="0.8" stroke-linejoin="round"/>
<polygon points="210.86,191.03 219.95,189.24 225.18,200.17 216.09,201.41" fill="#daff00" stroke="#101010" stroke-width="0.8" stroke-linejoin="round"/>
<polygon points="272.00,225.08 281.09,224.22 286.32,240.50 277.23,241.35" fill="#73ff00" stroke="#101010" stroke-width="0.8" stroke-linejoin="round"/>
<polygon points="187.45,182.91 196.54,181.12 201.77,189.30 192.68,191.09" fill="#f4ff00" stroke="#101010" stroke-width="0.8" stroke-linejoin="round"/>
<polygon points="333.14,262.00 342.23,260.74 347.46,263.81 338.37,265.07" fill="#03ff00" stroke="#101010" stroke-width="0.8" stroke-linejoin="round"/>
<polygon points="248.59,211.11 257.68,210.09 262.91,225.93 253.82,226.78" fill="#9fff00" stroke="#101010" stroke-width="0.8" stroke-linejoin="round"/>
<polygon points="164.04,177.26 173.13,175.47 178.36,184.70 169.27,186.49" fill="#fff700" stroke="#101010" stroke-width="0.8" stroke-linejoin="round"/>
<polygon points="309.73,259.25 318.82,258.24 324.05,263.26 314.96,264.53" fill="#0dff00" stroke="#101010" stroke-width="0.8" stroke-linejoin="round"/>
<polygon points="225.18,200.17 234.27,198.93 239.50,212.13 230.41,213.15" fill="#c2ff00" stroke="#101010" stroke-width="0.8" stroke-linejoin="round"/>
<polygon points="286.32,240.50 295.41,239.65 300.64,260.27 291.55,261.29" fill="#48ff00" stroke="#101010" stroke-width="0.8" stroke-linejoin="round"/>
<polygon points="201.77,189.30 210.86,191.03 216.09,201.41 207.00,202.65" fill="#e4ff00" stroke="#101010" stroke-width="0.8" stroke-linejoin="round"/>
<polygon points="262.91,225.93 272.00,225.08 277.23,241.35 268.14,242.21" fill="#76ff00" stroke="#101010" stroke-width="0.8" stroke-linejoin="round"/>
<polygon points="178.36,184.70 187.45,182.91 192.68,191.09 183.59,192.88" fill="#f4ff00" stroke="#101010" stroke-width="0.8" stroke-linejoin="round"/>
<polygon points="324.05,263.26 333.14,262.00 338.37,265.07 329.28,266.33" fill="#05ff00" stroke="#101010" stroke-width="0.8" stroke-linejoin="round"/>
<polygon points="239.50,212.13 248.59,211.11 253.82,226.78 244.73,227.64" fill="#a1ff00" stroke="#101010" stroke-width="0.8" stroke-linejoin="round"/>
<polygon points="300.64,260.27 309.73,259.25 314.96,264.53 305.87,265.79" fill="#0fff00" stroke="#101010" stroke-width="0.8" stroke-linejoin="round"/>
<polygon points="216.09,201.41 225.18,200.17 230.41,213.15 221.32,214.17" fill="#c3ff00" stroke="#101010" stroke-width="0.8" stroke-linejoin="round"/>
<polygon points="277.23,241.35 286.32,240.50 291.55,261.29 282.46,262.31" fill="#4bff00" stroke="#101010" stroke-width="0.8" stroke-linejoin="round"/>
<polygon points="192.68,191.09 201.77,189.30 207.00,202.65 197.91,203.89" fill="#e4ff00" stroke="#101010" stroke-width="0.8" stroke-linejoin="round"/>
<polygon points="253.82,226.78 262.91,225.93 268.14,242.21 259.05,243.06" fill="#79ff00" stroke="#101010" stroke-width="0.8" stroke-linejoin="round"/>
<polygon points="169.27,186.49 178.36,184.70 183.59,192.88 174.50,194.67" fill="#f4ff00" stroke="#101010" stroke-width="0.8" stroke-linejoin="round"/>
<polygon points="314.96,264.53 324.05,263.26 329.28,266.33 320.19,267.60" fill="#06ff00" stroke="#101010" stroke-width="0.8" stroke-linejoin="round"/>
<polygon points="230.41,213.15 239.50,212.13 244.73,227.64 235.64,228.49" fill="#a4ff00" stroke="#101010" stroke-width="0.8" stroke-linejoin="round"/>
<polygon points="291.55,261.29 300.64,260.27 305.87,265.79 296.78,267.05" fill="#12ff00" stroke="#101010" stroke-width="0.8" stroke-linejoin="round"/>
<polygon points="207.00,202.65 216.09,201.41 221.32,214.17 212.23,215.19" fill="#c5ff00" stroke="#101010" stroke-width="0.8" stroke-linejoin="round"/>
<polygon points="268.14,242.21 277.23,241.35 282.46,262.31 273.37,263.33" fill="#4dff00" stroke="#101010" stroke-width="0.8" stroke-linejoin="round"/>
<polygon points="183.59,192.88 192.68,191.09 197.91,203.89 188.82,205.13" fill="#e4ff00" stroke="#101010" stroke-width="0.8" stroke-linejoin="round"/>
<polygon points="244.73,227.64 253.82,226.78 259.05,243.06 249.96,243.92" fill="#7bff00" stroke="#101010" stroke-width="0.8" stroke-linejoin="round"/>
<polygon points="305.87,265.79 314.96,264.53 320.19,267.60 311.10,268.86" fill="#08ff00" stroke="#101010" stroke-width="0.8" stroke-linejoin="round"/>
<polygon points="221.32,214.17 230.41,213.15 235.64,228.49 226.55,229.35" fill="#a6ff00" stroke="#101010" stroke-width="0.8" stroke-linejoin="round"/>
<polygon points="282.46,262.31 291.55,261.29 296.78,267.05 287.69,268.31" fill="#14ff00" stroke="#101010" stroke-width="0.8" stroke-linejoin="round"/>
<polygon points="197.91,203.89 207.00,202.65 212.23,215.19 203.14,216.21" fill="#c7ff00" stroke="#101010" stroke-width="0.8" stroke-linejoin="round"/>
<polygon points="259.05,243.06 268.14,242.21 273.37,263.33 264.28,264.35" fill="#50ff00" stroke="#101010" stroke-width="0.8" stroke-linejoin="round"/>
<polygon points="174.50,194.67 183.59,192.88 188.82,205.13 179.73,206.37" fill="#e4ff00" stroke="#101010" stroke-width="0.8" stroke-linejoin="round"/>
<polygon points="235.64,228.49 244.73,227.64 249.96,243.92 240.87,244.77" fill="#7eff00" stroke="#101010" stroke-width="0.8" stroke-linejoin="round"/>
<polygon points="296.78,267.05 305.87,265.79 311.10,268.86 302.01,270.12" fill="#0aff00" stroke="#101010" stroke-width="0.8" stroke-linejoin="round"/>
<polygon points="212.23,215.19 221.32,214.17 226.55,229.35 217.46,230.20" fill="#a8ff00" stroke="#101010" stroke-width="0.8" stroke-linejoin="round"/>
<polygon points="273.37,263.33 282.46,262.31 287.69,268.31 278.60,269.57" fill="#17ff00" stroke="#101010" stroke-width="0.8" stroke-linejoin="round"/>
<polygon points="188.82,205.13 197.91,203.89 203.14,216.21 194.05,217.23" fill="#c9ff00" stroke="#101010" stroke-width="0.8" stroke-linejoin="round"/>
<polygon points="249.96,243.92 259.05,243.06 264.28,264.35 255.19,265.37" fill="#53ff00" stroke="#101010" stroke-width="0.8" stroke-linejoin="round"/>
<polygon points="226.55,229.35 235.64,228.49 240.87,244.77 231.78,245.63" fill="#81ff00" stroke="#101010" stroke-width="0.8" stroke-linejoin="round"/>
<polygon points="287.69,268.31 296.78,267.05 302.01,270.12 292.92,271.38" fill="#0bff00" stroke="#101010" stroke-width="0.8" stroke-linejoin="round"/>
<polygon points="203.14,216.21 212.23,215.19 217.46,230.20 208.37,231.06" fill="#abff00" stroke="#101010" stroke-width="0.8" stroke-linejoin="round"/>
<polygon points="264.28,264.35 273.37,263.33 278.60,269.57 269.51,270.83" fill="#19ff00" stroke="#101010" stroke-width="0.8" stroke-linejoin="round"/>
<polygon points="179.73,206.37 188.82,205.13 194.05,217.23 184.96,218.25" fill="#caff00" stroke="#101010" stroke-width="0.8" stroke-linejoin="round"/>
<polygon points="240.87,244.77 249.96,243.92 255.19,265.37 246.10,266.39" fill="#56ff00" stroke="#101010" stroke-width="0.8" stroke-linejoin="round"/>
<polygon points="217.46,230.20 226.55,229.35 231.78,245.63 222.69,246.48" fill="#84ff00" stroke="#101010" stroke-width="0.8" stroke-linejoin="round"/>
<polygon points="278.60,269.57 287.69,268.31 292.92,271.38 283.83,272.64" fill="#0dff00" stroke="#101010" stroke-width="0.8" stroke-linejoin="round"/>
<polygon points="194.05,217.23 203.14,216.21 208.37,231.06 199.28,231.91" fill="#adff00" stroke="#101010" stroke-width="0.8" stroke-linejoin="round"/>
<polygon points="255.19,265.37 264.28,264.35 269.51,270.83 260.42,271.74" fill="#1bff00" stroke="#101010" stroke-width="0.8" stroke-linejoin="round"/>
<polygon points="231.78,245.63 240.87,244.77 246.10,266.39 237.01,267.41" fill="#59ff00" stroke="#101010" stroke-width="0.8" stroke-linejoin="round"/>
<polygon points="208.37,231.06 217.46,230.20 222.69,246.48 213.60,247.34" fill="#87ff00" stroke="#101010" stroke-width="0.8" stroke-linejoin="round"/>
<polygon points="269.51,270.83 278.60,269.57 283.83,272.64 274.74,273.90" fill="#0eff00" stroke="#101010" stroke-width="0.8" stroke-linejoin="round"/>
<polygon points="184.96,218.25 194.05,217.23 199.28,231.91 190.19,232.76" fill="#afff00" stroke="#101010" stroke-width="0.8" stroke-linejoin="round"/>
<polygon points="246.10,266.39 255.19,265.37 260.42,271.74 251.33,271.77" fill="#1eff00" stroke="#101010" stroke-width="0.8" stroke-linejoin="round"/>
<polygon points="222.69,246.48 231.78,245.63 237.01,267.41 227.92,264.36" fill="#5cff00" stroke="#101010" stroke-width="0.8" stroke-linejoin="round"/>
<polygon points="199.28,231.91 208.37,231.06 213.60,247.34 204.51,248.19" fill="#8aff00" stroke="#101010" stroke-width="0.8" stroke-linejoin="round"/>
<polygon points="260.42,271.74 269.51,270.83 274.74,273.90 265.65,274.81" fill="#11ff00" stroke="#101010" stroke-width="0.8" stroke-linejoin="round"/>
<polygon points="237.01,267.41 246.10,266.39 251.33,271.77 242.24,270.92" fill="#20ff00" stroke="#101010" stroke-width="0.8" stroke-linejoin="round"/>
<polygon points="213.60,247.34 222.69,246.48 227.92,264.36 218.83,262.62" fill="#5fff00" stroke="#101010" stroke-width="0.8" stroke-linejoin="round"/>
<polygon points="190.19,232.76 199.28,231.91 204.51,248.19 195.42,249.04" fill="#8dff00" stroke="#101010" stroke-width="0.8" stroke-linejoin="round"/>
<polygon points="251.33,271.77 260.42,271.74 265.65,274.81 256.56,274.84" fill="#17ff00" stroke="#101010" stroke-width="0.8" stroke-linejoin="round"/>
<polygon points="227.92,264.36 237.01,267.41 242.24,270.92 233.15,269.19" fill="#2fff00" stroke="#101010" stroke-width="0.8" stroke-linejoin="round"/>
<polygon points="204.51,248.19 213.60,247.34 218.83,262.62 209.74,269.70" fill="#61ff00" stroke="#101010" stroke-width="0.8" stroke-linejoin="round"/>
<polygon points="242.24,270.92 251.33,271.77 256.56,274.84 247.47,273.99" fill="#1fff00" stroke="#101010" stroke-width="0.8" stroke-linejoin="round"/>
<polygon points="218.83,262.62 227.92,264.36 233.15,269.19 224.06,267.46" fill="#39ff00" stroke="#101010" stroke-width="0.8" stroke-linejoin="round"/>
<polygon points="195.42,249.04 204.51,248.19 209.74,269.70 200.65,271.49" fill="#64ff00" stroke="#101010" stroke-width="0.8" stroke-linejoin="round"/>
<polygon points="233.15,269.19 242.24,270.92 247.47,273.99 238.38,272.26" fill="#29ff00" stroke="#101010" stroke-width="0.8" stroke-linejoin="round"/>
<polygon points="209.74,269.70 218.83,262.62 224.06,267.46 214.97,274.53" fill="#29ff00" stroke="#101010" stroke-width="0.8" stroke-linejoin="round"/>
<polygon points="224.06,267.46 233.15,269.19 238.38,272.26 229.29,270.53" fill="#34ff00" stroke="#101010" stroke-width="0.8" stroke-linejoin="round"/>
<polygon points="200.65,271.49 209.74,269.70 214.97,274.53 205.88,276.32" fill="#29ff00" stroke="#101010" stroke-width="0.8" stroke-linejoin="round"/>
<polygon points="214.97,274.53 224.06,267.46 229.29,270.53 220.20,277.60" fill="#24ff00" stroke="#101010" stroke-width="0.8" stroke-linejoin="round"/>
<polygon points="205.88,276.32 214.97,274.53 220.20,277.60 211.11,279.39" fill="#24ff00" stroke="#101010" stroke-width="0.8" stroke-linejoin="round"/>
<polyline points="122.20,239.00 122.20,71.50" stroke="#6a6a6a" stroke-width="1" fill="none"/>
<polyline points="276.73,41.07 365.64,93.26 365.64,260.76" stroke="#6a6a6a" stroke-width="1" fill="none"/>
<polyline points="122.20,71.50 211.11,123.69 365.64,93.26" stroke="#6a6a6a" stroke-width="0.8" fill="none" opacity="0.9"/>
<polyline points="211.11,123.69 211.11,291.19" stroke="#6a6a6a" stroke-width="0.8" fill="none" opacity="0.9"/>
<polyline points="122.20,239.00 211.11,291.19 365.64,260.76" stroke="#8a8a96" stroke-width="1" fill="none"/>
<line x1="365.64" y1="106.29" x2="370.64" y2="106.29" stroke="#404040" stroke-width="1"/>
<text x="373.14" y="109.39" font-family='"Liberation Sans", sans-serif' font-size="6.8" fill="#303030">1.000</text>
<line x1="365.64" y1="141.52" x2="370.64" y2="141.52" stroke="#404040" stroke-width="1"/>
<text x="373.14" y="144.62" font-family='"Liberation Sans", sans-serif' font-size="6.8" fill="#303030">0.800</text>
<line x1="365.64" y1="176.75" x2="370.64" y2="176.75" stroke="#404040" stroke-width="1"/>
<text x="373.14" y="179.85" font-family='"Liberation Sans", sans-serif' font-size="6.8" fill="#303030">0.600</text>
<line x1="365.64" y1="211.97" x2="370.64" y2="211.97" stroke="#404040" stroke-width="1"/>
<text x="373.14" y="215.07" font-family='"Liberation Sans", sans-serif' font-size="6.8" fill="#303030">0.400</text>
<line x1="365.64" y1="247.20" x2="370.64" y2="247.20" stroke="#404040" stroke-width="1"/>
<text x="373.14" y="250.30" font-family='"Liberation Sans", sans-serif' font-size="6.8" fill="#303030">0.200</text>
<line x1="122.20" y1="239.00" x2="122.20" y2="243.50" stroke="#ff4040" stroke-width="1"/>
<text x="122.20" y="251.10" text-anchor="end" font-family='"Liberation Sans", sans-serif' font-size="6.8" fill="#ff3c3c">0.0</text>
<line x1="148.35" y1="254.35" x2="148.35" y2="258.85" stroke="#ff4040" stroke-width="1"/>
<text x="148.35" y="266.45" text-anchor="end" font-family='"Liberation Sans", sans-serif' font-size="6.8" fill="#ff3c3c">30.0</text>
<line x1="174.50" y1="269.70" x2="174.50" y2="274.20" stroke="#ff4040" stroke-width="1"/>
<text x="174.50" y="281.80" text-anchor="end" font-family='"Liberation Sans", sans-serif' font-size="6.8" fill="#ff3c3c">60.0</text>
<line x1="200.65" y1="285.05" x2="200.65" y2="289.55" stroke="#ff4040" stroke-width="1"/>
<text x="200.65" y="297.15" text-anchor="end" font-family='"Liberation Sans", sans-serif' font-size="6.8" fill="#ff3c3c">90.0</text>
<text x="193.4" y="289.8" text-anchor="end" font-family='"Liberation Sans", sans-serif' font-size="6.8" fill="#ff3c3c">Torque Signal Pressure PSI</text>
<line x1="211.11" y1="291.69" x2="211.11" y2="296.19" stroke="#4040ff" stroke-width="1"/>
<text x="208.81" y="303.69" font-family='"Liberation Sans", sans-serif' font-size="6.8" fill="#3c3cff">-42</text>
<line x1="256.56" y1="282.74" x2="256.56" y2="287.24" stroke="#4040ff" stroke-width="1"/>
<text x="254.26" y="294.74" font-family='"Liberation Sans", sans-serif' font-size="6.8" fill="#3c3cff">68</text>
<line x1="302.01" y1="273.79" x2="302.01" y2="278.29" stroke="#4040ff" stroke-width="1"/>
<text x="299.71" y="285.79" font-family='"Liberation Sans", sans-serif' font-size="6.8" fill="#3c3cff">176</text>
<line x1="347.46" y1="264.84" x2="347.46" y2="269.34" stroke="#4040ff" stroke-width="1"/>
<text x="345.16" y="276.84" font-family='"Liberation Sans", sans-serif' font-size="6.8" fill="#3c3cff">284</text>
<text x="282.7" y="304.6" font-family='"Liberation Sans", sans-serif' font-size="6.8" fill="#3c3cff">TFT °F</text>
</svg>
<div class="ct" style="left:12.3px;top:6.5px;color:#ff2a2a">Torque Signal Pressure PSI (0.0)</div>
<div class="ct" style="left:12.3px;top:16.7px;color:#3030ff">TFT °F (-42)</div>
<div class="ct" style="left:192.7px;top:6.3px;color:#b4b4b4">Rotate using right mouse button</div>
<div class="ct" style="right:297px;top:6.3px;color:#202020;text-align:right">Data: 1.074 amps</div>
<div class="ct" style="right:297px;top:16.5px;color:#202020;text-align:right">Min: 0.123</div>
<div class="ct" style="right:297px;top:26.9px;color:#202020;text-align:right">Max: 1.074</div>
<div style="position:absolute;left:10px;top:278.1px;width:11px;height:47px;border:1px solid #303030;background:linear-gradient(#ff0000,#ffff00 50%,#00ff00)"></div>
<div class="ct" style="left:26.2px;top:278.5px;color:#303030">High</div>
<div class="ct" style="left:26.2px;top:299px;color:#303030">Med</div>
<div class="ct" style="left:26.2px;top:319.6px;color:#303030">Low</div>
</div></div>
<div style="position:absolute;left:480px;top:2px;width:13px;height:327px;background:#f0f0f0"></div>
<div style="position:absolute;left:480.8px;top:3.2px;width:10px;height:12.4px;background:#dedede;border-bottom:1px solid #c2c2c2;box-sizing:border-box"></div>
<div style="position:absolute;left:480.8px;top:2.9px;width:10px;height:12px;font-weight:bold;font-size:11.2px;line-height:12px;color:#101010;text-align:center">?</div>
<svg style="position:absolute;left:482px;top:18px" width="9" height="6"><polyline points="2,4.5 4.5,2 7,4.5" stroke="#404040" stroke-width="1.3" fill="none"/></svg>
<div style="position:absolute;left:481.3px;top:212px;width:9.5px;height:10.7px;background:#cdcdcd"></div>
<svg style="position:absolute;left:481.5px;top:309px" width="9" height="6"><polyline points="2,1.5 4.5,4 7,1.5" stroke="#404040" stroke-width="1.3" fill="none"/></svg>
<div style="position:absolute;left:481px;top:318px;width:9.7px;height:11px;background:#dcdcdc;border:1px solid #c4c4c4;box-sizing:border-box"></div>
<svg style="position:absolute;left:481px;top:318px" width="10" height="11"><circle cx="4.6" cy="4.8" r="2.6" fill="#20d8e8" stroke="#104050" stroke-width="1"/><line x1="6.4" y1="6.6" x2="8.5" y2="8.8" stroke="#101010" stroke-width="1.6"/></svg>
<div style="position:absolute;left:493px;top:2px;width:1px;height:327px;background:#a8a8a8"></div>
<div style="position:absolute;left:494px;top:2px;width:277px;height:327px;background:linear-gradient(90deg,#f0f0f0 0%,#f0f0f0 88%,#d8d8d8 100%)"></div>
<div style="position:absolute;left:480px;top:1.2px;width:291px;height:0.9px;background:#b4b4b4"></div>
<div class="ui" style="left:496.4px;top:7.0px">Units:</div>
<div class="ui" style="left:588.8px;top:7.0px">Minimum:</div>
<div class="ui" style="left:645.3px;top:7.0px">Maximum:</div>
<div class="box" style="left:496.1px;top:18.7px;width:90.4px;height:14.7px"><span>amps</span></div>
<div class="box" style="left:588.8px;top:18.7px;width:54.2px;height:14.7px"><span>0.000</span></div>
<div class="box" style="left:645.3px;top:18.7px;width:54.4px;height:14.7px"><span>1.250</span></div>
<div class="box" style="left:588.8px;top:38px;width:54.2px;height:15.3px"><span>0.000</span></div>
<div class="box" style="left:645.3px;top:38px;width:54.4px;height:15.3px"><span>1.250</span></div>
<div class="ui" style="left:701.7px;top:20.8px">EFILive limits.</div>
<div class="ui" style="left:701.7px;top:40.3px">Controller limits.</div>
<div style="position:absolute;left:494px;top:71px;width:274px;height:257px;background:#ffffff;border:1px solid #dadada;box-sizing:border-box"></div>
<div class="tab" style="left:545px;top:58.2px;width:33px;height:12.8px">RTACS</div>
<div class="tab" style="left:578px;top:58.2px;width:47.6px;height:12.8px">User notes</div>
<div class="tab" style="left:493.8px;top:57.2px;width:51.4px;height:14.8px;background:#fff;border-bottom:none;line-height:12.4px">Description</div>
<div class="ui" style="left:497.3px;top:74.50px">This table controls the current flow required by the pressure control</div>
<div class="ui" style="left:497.3px;top:84.76px">solenoid (or force motor), to achieve the desired torque signal pressure,</div>
<div class="ui" style="left:497.3px;top:95.02px">when the torque signal pressure is increasing.</div>
<div class="ui" style="left:497.3px;top:105.28px">The table values are the amount of current (Amps) required.</div>
<div class="ui" style="left:497.3px;top:125.80px">The pressure control solenoid (or force motor) is controlled by the PCM</div>
<div class="ui" style="left:497.3px;top:136.06px">by varying the current flow to the solenoid.</div>
<div class="ui" style="left:497.3px;top:146.32px">The PCM can vary the current from 0.0 amps (high pressure) to 1.1</div>
<div class="ui" style="left:497.3px;top:156.58px">amps (low pressure).</div>
<div class="ui" style="left:497.3px;top:166.84px">The pressure control solenoid produces a &quot;torque signal pressure&quot; which</div>
<div class="ui" style="left:497.3px;top:177.10px">determines the final transmission line pressure.</div>
<div class="ui" style="left:497.3px;top:197.62px">Torque signal pressure ranges 0..660 kPa (0..96 psi).</div>
<div class="ui" style="left:497.3px;top:207.88px">Line pressure ranges 380..1585 kPa (55..230 psi).</div>
<div style="position:absolute;left:5px;top:329px;width:766px;height:3.3px;background:#ececec"></div>
<div style="position:absolute;left:7px;top:332.3px;width:763.4px;height:12.7px;background:#a9c9ef"></div>
<div class="big" style="left:373.4px;top:333.2px">TFT °F</div>
<div style="position:absolute;left:7px;top:345px;width:753px;height:146px;background:#fff"></div>
<div style="position:absolute;left:7px;top:345px;width:13.1px;height:146px;background:#a9c9ef"></div>
<div class="big" style="left:13.6px;top:420px;transform:translate(-50%,-50%) rotate(-90deg);font-size:10.5px">Torque Signal Pressure PSI</div>
<div style="position:absolute;left:760px;top:345px;width:10.4px;height:146px;background:linear-gradient(90deg,#f8f8f8,#e2e2e2)"></div>
<svg style="position:absolute;left:760.5px;top:348px" width="9" height="6"><polyline points="2,4.5 4.5,2 7,4.5" stroke="#404040" stroke-width="1.3" fill="none"/></svg>
<div style="position:absolute;left:760.5px;top:356.6px;width:9px;height:10.1px;background:#c8c8c8"></div>
<div style="left:20.1px;top:345.0px;width:469.00px;height:12.6px;background:#f0f0f0"></div>
<div class="tx hd" style="left:42.00px;top:342.50px;width:23.30px"><span class="num">-42</span></div>
<div class="tx hd" style="left:68.30px;top:342.50px;width:23.30px"><span class="num">-20</span></div>
<div class="tx hd" style="left:94.60px;top:342.50px;width:23.30px"><span class="num">1</span></div>
<div class="tx hd" style="left:120.90px;top:342.50px;width:23.30px"><span class="num">23</span></div>
<div class="tx hd" style="left:147.20px;top:342.50px;width:23.30px"><span class="num">46</span></div>
<div class="tx hd" style="left:173.50px;top:342.50px;width:23.30px"><span class="num">68</span></div>
<div class="tx hd" style="left:199.80px;top:342.50px;width:23.30px"><span class="num">90</span></div>
<div class="tx hd" style="left:226.10px;top:342.50px;width:23.30px"><span class="num">111</span></div>
<div class="tx hd" style="left:252.40px;top:342.50px;width:23.30px"><span class="num">133</span></div>
<div class="tx hd" style="left:278.70px;top:342.50px;width:23.30px"><span class="num">154</span></div>
<div class="tx hd" style="left:305.00px;top:342.50px;width:23.30px"><span class="num">176</span></div>
<div class="tx hd" style="left:331.30px;top:342.50px;width:23.30px"><span class="num">198</span></div>
<div class="tx hd" style="left:357.60px;top:342.50px;width:23.30px"><span class="num">219</span></div>
<div class="tx hd" style="left:383.90px;top:342.50px;width:23.30px"><span class="num">241</span></div>
<div class="tx hd" style="left:410.20px;top:342.50px;width:23.30px"><span class="num">262</span></div>
<div class="tx hd" style="left:436.50px;top:342.50px;width:23.30px"><span class="num">284</span></div>
<div class="tx hd" style="left:462.80px;top:342.50px;width:23.30px"><span class="num">306</span></div>
<div style="left:20.1px;top:357.40px;width:21.9px;height:12.85px;background:#f0f0f0"></div>
<div class="tx hd" style="left:20.1px;top:356.00px;width:19.0px"><span class="num">0.0</span></div>
<div style="left:42.00px;top:357.40px;width:26.80px;height:13.35px;background:#0f78d8"></div>
<div style="left:68.30px;top:357.40px;width:26.80px;height:13.35px;background:#ff0000"></div>
<div style="left:94.60px;top:357.40px;width:26.80px;height:13.35px;background:#ff0000"></div>
<div style="left:120.90px;top:357.40px;width:26.80px;height:13.35px;background:#ff0000"></div>
<div style="left:147.20px;top:357.40px;width:26.80px;height:13.35px;background:#ff0000"></div>
<div style="left:173.50px;top:357.40px;width:26.80px;height:13.35px;background:#ff0000"></div>
<div style="left:199.80px;top:357.40px;width:26.80px;height:13.35px;background:#ff0000"></div>
<div style="left:226.10px;top:357.40px;width:26.80px;height:13.35px;background:#ff0000"></div>
<div style="left:252.40px;top:357.40px;width:26.80px;height:13.35px;background:#ff0000"></div>
<div style="left:278.70px;top:357.40px;width:26.80px;height:13.35px;background:#ff0000"></div>
<div style="left:305.00px;top:357.40px;width:26.80px;height:13.35px;background:#ff0000"></div>
<div style="left:331.30px;top:357.40px;width:26.80px;height:13.35px;background:#ff0000"></div>
<div style="left:357.60px;top:357.40px;width:26.80px;height:13.35px;background:#ff0000"></div>
<div style="left:383.90px;top:357.40px;width:26.80px;height:13.35px;background:#ff0000"></div>
<div style="left:410.20px;top:357.40px;width:26.80px;height:13.35px;background:#ff0000"></div>
<div style="left:436.50px;top:357.40px;width:26.80px;height:13.35px;background:#ff0000"></div>
<div style="left:462.80px;top:357.40px;width:26.80px;height:13.35px;background:#ff0000"></div>
<div style="left:20.1px;top:370.25px;width:21.9px;height:12.85px;background:#f0f0f0"></div>
<div class="tx hd" style="left:20.1px;top:368.85px;width:19.0px"><span class="num">6.0</span></div>
<div style="left:42.00px;top:370.25px;width:26.80px;height:13.35px;background:#ff6a00"></div>
<div style="left:68.30px;top:370.25px;width:26.80px;height:13.35px;background:#ff5400"></div>
<div style="left:94.60px;top:370.25px;width:26.80px;height:13.35px;background:#ff5400"></div>
<div style="left:120.90px;top:370.25px;width:26.80px;height:13.35px;background:#ff5400"></div>
<div style="left:147.20px;top:370.25px;width:26.80px;height:13.35px;background:#ff5400"></div>
<div style="left:173.50px;top:370.25px;width:26.80px;height:13.35px;background:#ff4a00"></div>
<div style="left:199.80px;top:370.25px;width:26.80px;height:13.35px;background:#ff4a00"></div>
<div style="left:226.10px;top:370.25px;width:26.80px;height:13.35px;background:#ff4a00"></div>
<div style="left:252.40px;top:370.25px;width:26.80px;height:13.35px;background:#ff4a00"></div>
<div style="left:278.70px;top:370.25px;width:26.80px;height:13.35px;background:#ff4a00"></div>
<div style="left:305.00px;top:370.25px;width:26.80px;height:13.35px;background:#ff4a00"></div>
<div style="left:331.30px;top:370.25px;width:26.80px;height:13.35px;background:#ff5400"></div>
<div style="left:357.60px;top:370.25px;width:26.80px;height:13.35px;background:#ff5400"></div>
<div style="left:383.90px;top:370.25px;width:26.80px;height:13.35px;background:#ff5400"></div>
<div style="left:410.20px;top:370.25px;width:26.80px;height:13.35px;background:#ff5400"></div>
<div style="left:436.50px;top:370.25px;width:26.80px;height:13.35px;background:#ff5400"></div>
<div style="left:462.80px;top:370.25px;width:26.80px;height:13.35px;background:#ff5400"></div>
<div style="left:20.1px;top:383.10px;width:21.9px;height:12.85px;background:#f0f0f0"></div>
<div class="tx hd" style="left:20.1px;top:381.70px;width:19.0px"><span class="num">12.0</span></div>
<div style="left:42.00px;top:383.10px;width:26.80px;height:13.35px;background:#ff6a00"></div>
<div style="left:68.30px;top:383.10px;width:26.80px;height:13.35px;background:#ff5f00"></div>
<div style="left:94.60px;top:383.10px;width:26.80px;height:13.35px;background:#ff5f00"></div>
<div style="left:120.90px;top:383.10px;width:26.80px;height:13.35px;background:#ff5f00"></div>
<div style="left:147.20px;top:383.10px;width:26.80px;height:13.35px;background:#ff5f00"></div>
<div style="left:173.50px;top:383.10px;width:26.80px;height:13.35px;background:#ff5f00"></div>
<div style="left:199.80px;top:383.10px;width:26.80px;height:13.35px;background:#ff5f00"></div>
<div style="left:226.10px;top:383.10px;width:26.80px;height:13.35px;background:#ff5f00"></div>
<div style="left:252.40px;top:383.10px;width:26.80px;height:13.35px;background:#ff5f00"></div>
<div style="left:278.70px;top:383.10px;width:26.80px;height:13.35px;background:#ff5f00"></div>
<div style="left:305.00px;top:383.10px;width:26.80px;height:13.35px;background:#ff5f00"></div>
<div style="left:331.30px;top:383.10px;width:26.80px;height:13.35px;background:#ff5f00"></div>
<div style="left:357.60px;top:383.10px;width:26.80px;height:13.35px;background:#ff5f00"></div>
<div style="left:383.90px;top:383.10px;width:26.80px;height:13.35px;background:#ff5f00"></div>
<div style="left:410.20px;top:383.10px;width:26.80px;height:13.35px;background:#ff6a00"></div>
<div style="left:436.50px;top:383.10px;width:26.80px;height:13.35px;background:#ff6a00"></div>
<div style="left:462.80px;top:383.10px;width:26.80px;height:13.35px;background:#ff6a00"></div>
<div style="left:20.1px;top:395.95px;width:21.9px;height:12.85px;background:#f0f0f0"></div>
<div class="tx hd" style="left:20.1px;top:394.55px;width:19.0px"><span class="num">18.0</span></div>
<div style="left:42.00px;top:395.95px;width:26.80px;height:13.35px;background:#ff9900"></div>
<div style="left:68.30px;top:395.95px;width:26.80px;height:13.35px;background:#ff9900"></div>
<div style="left:94.60px;top:395.95px;width:26.80px;height:13.35px;background:#ff9900"></div>
<div style="left:120.90px;top:395.95px;width:26.80px;height:13.35px;background:#ff9900"></div>
<div style="left:147.20px;top:395.95px;width:26.80px;height:13.35px;background:#ff9900"></div>
<div style="left:173.50px;top:395.95px;width:26.80px;height:13.35px;background:#ff9900"></div>
<div style="left:199.80px;top:395.95px;width:26.80px;height:13.35px;background:#ffa000"></div>
<div style="left:226.10px;top:395.95px;width:26.80px;height:13.35px;background:#ffa000"></div>
<div style="left:252.40px;top:395.95px;width:26.80px;height:13.35px;background:#ffa000"></div>
<div style="left:278.70px;top:395.95px;width:26.80px;height:13.35px;background:#ffa000"></div>
<div style="left:305.00px;top:395.95px;width:26.80px;height:13.35px;background:#ffa000"></div>
<div style="left:331.30px;top:395.95px;width:26.80px;height:13.35px;background:#ffa000"></div>
<div style="left:357.60px;top:395.95px;width:26.80px;height:13.35px;background:#ffa000"></div>
<div style="left:383.90px;top:395.95px;width:26.80px;height:13.35px;background:#ffa000"></div>
<div style="left:410.20px;top:395.95px;width:26.80px;height:13.35px;background:#ffa000"></div>
<div style="left:436.50px;top:395.95px;width:26.80px;height:13.35px;background:#ffa000"></div>
<div style="left:462.80px;top:395.95px;width:26.80px;height:13.35px;background:#ffa000"></div>
<div style="left:20.1px;top:408.80px;width:21.9px;height:12.85px;background:#f0f0f0"></div>
<div class="tx hd" style="left:20.1px;top:407.40px;width:19.0px"><span class="num">24.0</span></div>
<div style="left:42.00px;top:408.80px;width:26.80px;height:13.35px;background:#ffab00"></div>
<div style="left:68.30px;top:408.80px;width:26.80px;height:13.35px;background:#ffab00"></div>
<div style="left:94.60px;top:408.80px;width:26.80px;height:13.35px;background:#ffab00"></div>
<div style="left:120.90px;top:408.80px;width:26.80px;height:13.35px;background:#ffab00"></div>
<div style="left:147.20px;top:408.80px;width:26.80px;height:13.35px;background:#ffab00"></div>
<div style="left:173.50px;top:408.80px;width:26.80px;height:13.35px;background:#ffab00"></div>
<div style="left:199.80px;top:408.80px;width:26.80px;height:13.35px;background:#ffab00"></div>
<div style="left:226.10px;top:408.80px;width:26.80px;height:13.35px;background:#ffab00"></div>
<div style="left:252.40px;top:408.80px;width:26.80px;height:13.35px;background:#ffab00"></div>
<div style="left:278.70px;top:408.80px;width:26.80px;height:13.35px;background:#ffb600"></div>
<div style="left:305.00px;top:408.80px;width:26.80px;height:13.35px;background:#ffb600"></div>
<div style="left:331.30px;top:408.80px;width:26.80px;height:13.35px;background:#ffb600"></div>
<div style="left:357.60px;top:408.80px;width:26.80px;height:13.35px;background:#ffb600"></div>
<div style="left:383.90px;top:408.80px;width:26.80px;height:13.35px;background:#ffb600"></div>
<div style="left:410.20px;top:408.80px;width:26.80px;height:13.35px;background:#ffb600"></div>
<div style="left:436.50px;top:408.80px;width:26.80px;height:13.35px;background:#ffb600"></div>
<div style="left:462.80px;top:408.80px;width:26.80px;height:13.35px;background:#ffb600"></div>
<div style="left:20.1px;top:421.65px;width:21.9px;height:12.85px;background:#f0f0f0"></div>
<div class="tx hd" style="left:20.1px;top:420.25px;width:19.0px"><span class="num">30.0</span></div>
<div style="left:42.00px;top:421.65px;width:26.80px;height:13.35px;background:#ffbd00"></div>
<div style="left:68.30px;top:421.65px;width:26.80px;height:13.35px;background:#ffbd00"></div>
<div style="left:94.60px;top:421.65px;width:26.80px;height:13.35px;background:#ffbd00"></div>
<div style="left:120.90px;top:421.65px;width:26.80px;height:13.35px;background:#ffbd00"></div>
<div style="left:147.20px;top:421.65px;width:26.80px;height:13.35px;background:#ffbd00"></div>
<div style="left:173.50px;top:421.65px;width:26.80px;height:13.35px;background:#ffbd00"></div>
<div style="left:199.80px;top:421.65px;width:26.80px;height:13.35px;background:#ffbd00"></div>
<div style="left:226.10px;top:421.65px;width:26.80px;height:13.35px;background:#ffbd00"></div>
<div style="left:252.40px;top:421.65px;width:26.80px;height:13.35px;background:#ffbd00"></div>
<div style="left:278.70px;top:421.65px;width:26.80px;height:13.35px;background:#ffbd00"></div>
<div style="left:305.00px;top:421.65px;width:26.80px;height:13.35px;background:#ffbd00"></div>
<div style="left:331.30px;top:421.65px;width:26.80px;height:13.35px;background:#ffc800"></div>
<div style="left:357.60px;top:421.65px;width:26.80px;height:13.35px;background:#ffc800"></div>
<div style="left:383.90px;top:421.65px;width:26.80px;height:13.35px;background:#ffc800"></div>
<div style="left:410.20px;top:421.65px;width:26.80px;height:13.35px;background:#ffc800"></div>
<div style="left:436.50px;top:421.65px;width:26.80px;height:13.35px;background:#ffc800"></div>
<div style="left:462.80px;top:421.65px;width:26.80px;height:13.35px;background:#ffc800"></div>
<div style="left:20.1px;top:434.50px;width:21.9px;height:12.85px;background:#f0f0f0"></div>
<div class="tx hd" style="left:20.1px;top:433.10px;width:19.0px"><span class="num">36.0</span></div>
<div style="left:42.00px;top:434.50px;width:26.80px;height:13.35px;background:#ffc800"></div>
<div style="left:68.30px;top:434.50px;width:26.80px;height:13.35px;background:#ffc800"></div>
<div style="left:94.60px;top:434.50px;width:26.80px;height:13.35px;background:#ffc800"></div>
<div style="left:120.90px;top:434.50px;width:26.80px;height:13.35px;background:#ffc800"></div>
<div style="left:147.20px;top:434.50px;width:26.80px;height:13.35px;background:#ffd000"></div>
<div style="left:173.50px;top:434.50px;width:26.80px;height:13.35px;background:#ffd000"></div>
<div style="left:199.80px;top:434.50px;width:26.80px;height:13.35px;background:#ffd000"></div>
<div style="left:226.10px;top:434.50px;width:26.80px;height:13.35px;background:#ffd000"></div>
<div style="left:252.40px;top:434.50px;width:26.80px;height:13.35px;background:#ffd000"></div>
<div style="left:278.70px;top:434.50px;width:26.80px;height:13.35px;background:#ffd000"></div>
<div style="left:305.00px;top:434.50px;width:26.80px;height:13.35px;background:#ffd000"></div>
<div style="left:331.30px;top:434.50px;width:26.80px;height:13.35px;background:#ffd000"></div>
<div style="left:357.60px;top:434.50px;width:26.80px;height:13.35px;background:#ffd000"></div>
<div style="left:383.90px;top:434.50px;width:26.80px;height:13.35px;background:#ffda00"></div>
<div style="left:410.20px;top:434.50px;width:26.80px;height:13.35px;background:#ffda00"></div>
<div style="left:436.50px;top:434.50px;width:26.80px;height:13.35px;background:#ffda00"></div>
<div style="left:462.80px;top:434.50px;width:26.80px;height:13.35px;background:#ffda00"></div>
<div style="left:20.1px;top:447.35px;width:21.9px;height:12.85px;background:#f0f0f0"></div>
<div class="tx hd" style="left:20.1px;top:445.95px;width:19.0px"><span class="num">42.0</span></div>
<div style="left:42.00px;top:447.35px;width:26.80px;height:13.35px;background:#ffda00"></div>
<div style="left:68.30px;top:447.35px;width:26.80px;height:13.35px;background:#ffe500"></div>
<div style="left:94.60px;top:447.35px;width:26.80px;height:13.35px;background:#ffda00"></div>
<div style="left:120.90px;top:447.35px;width:26.80px;height:13.35px;background:#ffda00"></div>
<div style="left:147.20px;top:447.35px;width:26.80px;height:13.35px;background:#ffe500"></div>
<div style="left:173.50px;top:447.35px;width:26.80px;height:13.35px;background:#ffe500"></div>
<div style="left:199.80px;top:447.35px;width:26.80px;height:13.35px;background:#ffe500"></div>
<div style="left:226.10px;top:447.35px;width:26.80px;height:13.35px;background:#ffe500"></div>
<div style="left:252.40px;top:447.35px;width:26.80px;height:13.35px;background:#ffe500"></div>
<div style="left:278.70px;top:447.35px;width:26.80px;height:13.35px;background:#ffe500"></div>
<div style="left:305.00px;top:447.35px;width:26.80px;height:13.35px;background:#ffe500"></div>
<div style="left:331.30px;top:447.35px;width:26.80px;height:13.35px;background:#ffe500"></div>
<div style="left:357.60px;top:447.35px;width:26.80px;height:13.35px;background:#ffe500"></div>
<div style="left:383.90px;top:447.35px;width:26.80px;height:13.35px;background:#ffed00"></div>
<div style="left:410.20px;top:447.35px;width:26.80px;height:13.35px;background:#ffed00"></div>
<div style="left:436.50px;top:447.35px;width:26.80px;height:13.35px;background:#ffed00"></div>
<div style="left:462.80px;top:447.35px;width:26.80px;height:13.35px;background:#ffed00"></div>
<div style="left:20.1px;top:460.20px;width:21.9px;height:12.85px;background:#f0f0f0"></div>
<div class="tx hd" style="left:20.1px;top:458.80px;width:19.0px"><span class="num">48.0</span></div>
<div style="left:42.00px;top:460.20px;width:26.80px;height:13.35px;background:#fff700"></div>
<div style="left:68.30px;top:460.20px;width:26.80px;height:13.35px;background:#fff700"></div>
<div style="left:94.60px;top:460.20px;width:26.80px;height:13.35px;background:#ffed00"></div>
<div style="left:120.90px;top:460.20px;width:26.80px;height:13.35px;background:#fff700"></div>
<div style="left:147.20px;top:460.20px;width:26.80px;height:13.35px;background:#fff700"></div>
<div style="left:173.50px;top:460.20px;width:26.80px;height:13.35px;background:#fff700"></div>
<div style="left:199.80px;top:460.20px;width:26.80px;height:13.35px;background:#fff700"></div>
<div style="left:226.10px;top:460.20px;width:26.80px;height:13.35px;background:#fff700"></div>
<div style="left:252.40px;top:460.20px;width:26.80px;height:13.35px;background:#fff700"></div>
<div style="left:278.70px;top:460.20px;width:26.80px;height:13.35px;background:#fff700"></div>
<div style="left:305.00px;top:460.20px;width:26.80px;height:13.35px;background:#ffff00"></div>
<div style="left:331.30px;top:460.20px;width:26.80px;height:13.35px;background:#ffff00"></div>
<div style="left:357.60px;top:460.20px;width:26.80px;height:13.35px;background:#ffff00"></div>
<div style="left:383.90px;top:460.20px;width:26.80px;height:13.35px;background:#ffff00"></div>
<div style="left:410.20px;top:460.20px;width:26.80px;height:13.35px;background:#ffff00"></div>
<div style="left:436.50px;top:460.20px;width:26.80px;height:13.35px;background:#ffff00"></div>
<div style="left:462.80px;top:460.20px;width:26.80px;height:13.35px;background:#ffff00"></div>
<div style="left:20.1px;top:473.05px;width:21.9px;height:12.85px;background:#f0f0f0"></div>
<div class="tx hd" style="left:20.1px;top:471.65px;width:19.0px"><span class="num">54.0</span></div>
<div style="left:42.00px;top:473.05px;width:26.80px;height:13.35px;background:#f4ff00"></div>
<div style="left:68.30px;top:473.05px;width:26.80px;height:13.35px;background:#f4ff00"></div>
<div style="left:94.60px;top:473.05px;width:26.80px;height:13.35px;background:#f4ff00"></div>
<div style="left:120.90px;top:473.05px;width:26.80px;height:13.35px;background:#f4ff00"></div>
<div style="left:147.20px;top:473.05px;width:26.80px;height:13.35px;background:#f4ff00"></div>
<div style="left:173.50px;top:473.05px;width:26.80px;height:13.35px;background:#ecff00"></div>
<div style="left:199.80px;top:473.05px;width:26.80px;height:13.35px;background:#ecff00"></div>
<div style="left:226.10px;top:473.05px;width:26.80px;height:13.35px;background:#ecff00"></div>
<div style="left:252.40px;top:473.05px;width:26.80px;height:13.35px;background:#ecff00"></div>
<div style="left:278.70px;top:473.05px;width:26.80px;height:13.35px;background:#ecff00"></div>
<div style="left:305.00px;top:473.05px;width:26.80px;height:13.35px;background:#ecff00"></div>
<div style="left:331.30px;top:473.05px;width:26.80px;height:13.35px;background:#ecff00"></div>
<div style="left:357.60px;top:473.05px;width:26.80px;height:13.35px;background:#ecff00"></div>
<div style="left:383.90px;top:473.05px;width:26.80px;height:13.35px;background:#ecff00"></div>
<div style="left:410.20px;top:473.05px;width:26.80px;height:13.35px;background:#ecff00"></div>
<div style="left:436.50px;top:473.05px;width:26.80px;height:13.35px;background:#ecff00"></div>
<div style="left:462.80px;top:473.05px;width:26.80px;height:13.35px;background:#ecff00"></div>
<div style="left:20.1px;top:485.90px;width:21.9px;height:12.85px;background:#f0f0f0"></div>
<div class="tx hd" style="left:20.1px;top:484.50px;width:19.0px"><span class="num">60.0</span></div>
<div style="left:42.00px;top:485.90px;width:26.80px;height:13.35px;background:#e4ff00"></div>
<div style="left:68.30px;top:485.90px;width:26.80px;height:13.35px;background:#e4ff00"></div>
<div style="left:94.60px;top:485.90px;width:26.80px;height:13.35px;background:#e4ff00"></div>
<div style="left:120.90px;top:485.90px;width:26.80px;height:13.35px;background:#e4ff00"></div>
<div style="left:147.20px;top:485.90px;width:26.80px;height:13.35px;background:#daff00"></div>
<div style="left:173.50px;top:485.90px;width:26.80px;height:13.35px;background:#daff00"></div>
<div style="left:199.80px;top:485.90px;width:26.80px;height:13.35px;background:#daff00"></div>
<div style="left:226.10px;top:485.90px;width:26.80px;height:13.35px;background:#daff00"></div>
<div style="left:252.40px;top:485.90px;width:26.80px;height:13.35px;background:#daff00"></div>
<div style="left:278.70px;top:485.90px;width:26.80px;height:13.35px;background:#daff00"></div>
<div style="left:305.00px;top:485.90px;width:26.80px;height:13.35px;background:#d0ff00"></div>
<div style="left:331.30px;top:485.90px;width:26.80px;height:13.35px;background:#d0ff00"></div>
<div style="left:357.60px;top:485.90px;width:26.80px;height:13.35px;background:#d0ff00"></div>
<div style="left:383.90px;top:485.90px;width:26.80px;height:13.35px;background:#d0ff00"></div>
<div style="left:410.20px;top:485.90px;width:26.80px;height:13.35px;background:#d0ff00"></div>
<div style="left:436.50px;top:485.90px;width:26.80px;height:13.35px;background:#d0ff00"></div>
<div style="left:462.80px;top:485.90px;width:26.80px;height:13.35px;background:#d0ff00"></div>
<div style="left:67.80px;top:357.40px;width:1px;height:133.60px;background:rgba(160,160,160,0.55)"></div>
<div style="left:94.10px;top:357.40px;width:1px;height:133.60px;background:rgba(160,160,160,0.55)"></div>
<div style="left:120.40px;top:357.40px;width:1px;height:133.60px;background:rgba(160,160,160,0.55)"></div>
<div style="left:146.70px;top:357.40px;width:1px;height:133.60px;background:rgba(160,160,160,0.55)"></div>
<div style="left:173.00px;top:357.40px;width:1px;height:133.60px;background:rgba(160,160,160,0.55)"></div>
<div style="left:199.30px;top:357.40px;width:1px;height:133.60px;background:rgba(160,160,160,0.55)"></div>
<div style="left:225.60px;top:357.40px;width:1px;height:133.60px;background:rgba(160,160,160,0.55)"></div>
<div style="left:251.90px;top:357.40px;width:1px;height:133.60px;background:rgba(160,160,160,0.55)"></div>
<div style="left:278.20px;top:357.40px;width:1px;height:133.60px;background:rgba(160,160,160,0.55)"></div>
<div style="left:304.50px;top:357.40px;width:1px;height:133.60px;background:rgba(160,160,160,0.55)"></div>
<div style="left:330.80px;top:357.40px;width:1px;height:133.60px;background:rgba(160,160,160,0.55)"></div>
<div style="left:357.10px;top:357.40px;width:1px;height:133.60px;background:rgba(160,160,160,0.55)"></div>
<div style="left:383.40px;top:357.40px;width:1px;height:133.60px;background:rgba(160,160,160,0.55)"></div>
<div style="left:409.70px;top:357.40px;width:1px;height:133.60px;background:rgba(160,160,160,0.55)"></div>
<div style="left:436.00px;top:357.40px;width:1px;height:133.60px;background:rgba(160,160,160,0.55)"></div>
<div style="left:462.30px;top:357.40px;width:1px;height:133.60px;background:rgba(160,160,160,0.55)"></div>
<div style="left:42.00px;top:369.75px;width:447.10px;height:1px;background:rgba(160,160,160,0.55)"></div>
<div style="left:42.00px;top:382.60px;width:447.10px;height:1px;background:rgba(160,160,160,0.55)"></div>
<div style="left:42.00px;top:395.45px;width:447.10px;height:1px;background:rgba(160,160,160,0.55)"></div>
<div style="left:42.00px;top:408.30px;width:447.10px;height:1px;background:rgba(160,160,160,0.55)"></div>
<div style="left:42.00px;top:421.15px;width:447.10px;height:1px;background:rgba(160,160,160,0.55)"></div>
<div style="left:42.00px;top:434.00px;width:447.10px;height:1px;background:rgba(160,160,160,0.55)"></div>
<div style="left:42.00px;top:446.85px;width:447.10px;height:1px;background:rgba(160,160,160,0.55)"></div>
<div style="left:42.00px;top:459.70px;width:447.10px;height:1px;background:rgba(160,160,160,0.55)"></div>
<div style="left:42.00px;top:472.55px;width:447.10px;height:1px;background:rgba(160,160,160,0.55)"></div>
<div style="left:42.00px;top:485.40px;width:447.10px;height:1px;background:rgba(160,160,160,0.55)"></div>
<div style="left:20.1px;top:356.60px;width:469.00px;height:1px;background:#505050"></div>
<div style="left:41.40px;top:345.00px;width:1px;height:12.6px;background:#505050"></div>
<div style="left:67.70px;top:345.00px;width:1px;height:12.6px;background:#505050"></div>
<div style="left:94.00px;top:345.00px;width:1px;height:12.6px;background:#505050"></div>
<div style="left:120.30px;top:345.00px;width:1px;height:12.6px;background:#505050"></div>
<div style="left:146.60px;top:345.00px;width:1px;height:12.6px;background:#505050"></div>
<div style="left:172.90px;top:345.00px;width:1px;height:12.6px;background:#505050"></div>
<div style="left:199.20px;top:345.00px;width:1px;height:12.6px;background:#505050"></div>
<div style="left:225.50px;top:345.00px;width:1px;height:12.6px;background:#505050"></div>
<div style="left:251.80px;top:345.00px;width:1px;height:12.6px;background:#505050"></div>
<div style="left:278.10px;top:345.00px;width:1px;height:12.6px;background:#505050"></div>
<div style="left:304.40px;top:345.00px;width:1px;height:12.6px;background:#505050"></div>
<div style="left:330.70px;top:345.00px;width:1px;height:12.6px;background:#505050"></div>
<div style="left:357.00px;top:345.00px;width:1px;height:12.6px;background:#505050"></div>
<div style="left:383.30px;top:345.00px;width:1px;height:12.6px;background:#505050"></div>
<div style="left:409.60px;top:345.00px;width:1px;height:12.6px;background:#505050"></div>
<div style="left:435.90px;top:345.00px;width:1px;height:12.6px;background:#505050"></div>
<div style="left:462.20px;top:345.00px;width:1px;height:12.6px;background:#505050"></div>
<div style="left:488.50px;top:345.00px;width:1px;height:12.6px;background:#505050"></div>
<div style="left:41.40px;top:357.40px;width:1px;height:133.60px;background:#505050"></div>
<div style="left:20.1px;top:369.65px;width:21.9px;height:1px;background:#505050"></div>
<div style="left:20.1px;top:382.50px;width:21.9px;height:1px;background:#505050"></div>
<div style="left:20.1px;top:395.35px;width:21.9px;height:1px;background:#505050"></div>
<div style="left:20.1px;top:408.20px;width:21.9px;height:1px;background:#505050"></div>
<div style="left:20.1px;top:421.05px;width:21.9px;height:1px;background:#505050"></div>
<div style="left:20.1px;top:433.90px;width:21.9px;height:1px;background:#505050"></div>
<div style="left:20.1px;top:446.75px;width:21.9px;height:1px;background:#505050"></div>
<div style="left:20.1px;top:459.60px;width:21.9px;height:1px;background:#505050"></div>
<div style="left:20.1px;top:472.45px;width:21.9px;height:1px;background:#505050"></div>
<div style="left:20.1px;top:485.30px;width:21.9px;height:1px;background:#505050"></div>
<div style="left:20.1px;top:498.15px;width:21.9px;height:1px;background:#505050"></div>
<div class="tx dt" style="left:42.00px;top:355.80px;width:26.30px;color:#ffffff"><span class="num">1.074</span></div>
<div class="tx dt" style="left:68.30px;top:355.80px;width:26.30px;color:#141414"><span class="num">1.074</span></div>
<div class="tx dt" style="left:94.60px;top:355.80px;width:26.30px;color:#141414"><span class="num">1.074</span></div>
<div class="tx dt" style="left:120.90px;top:355.80px;width:26.30px;color:#141414"><span class="num">1.074</span></div>
<div class="tx dt" style="left:147.20px;top:355.80px;width:26.30px;color:#141414"><span class="num">1.074</span></div>
<div class="tx dt" style="left:173.50px;top:355.80px;width:26.30px;color:#141414"><span class="num">1.074</span></div>
<div class="tx dt" style="left:199.80px;top:355.80px;width:26.30px;color:#141414"><span class="num">1.074</span></div>
<div class="tx dt" style="left:226.10px;top:355.80px;width:26.30px;color:#141414"><span class="num">1.074</span></div>
<div class="tx dt" style="left:252.40px;top:355.80px;width:26.30px;color:#141414"><span class="num">1.074</span></div>
<div class="tx dt" style="left:278.70px;top:355.80px;width:26.30px;color:#141414"><span class="num">1.074</span></div>
<div class="tx dt" style="left:305.00px;top:355.80px;width:26.30px;color:#141414"><span class="num">1.074</span></div>
<div class="tx dt" style="left:331.30px;top:355.80px;width:26.30px;color:#141414"><span class="num">1.074</span></div>
<div class="tx dt" style="left:357.60px;top:355.80px;width:26.30px;color:#141414"><span class="num">1.074</span></div>
<div class="tx dt" style="left:383.90px;top:355.80px;width:26.30px;color:#141414"><span class="num">1.074</span></div>
<div class="tx dt" style="left:410.20px;top:355.80px;width:26.30px;color:#141414"><span class="num">1.074</span></div>
<div class="tx dt" style="left:436.50px;top:355.80px;width:26.30px;color:#141414"><span class="num">1.074</span></div>
<div class="tx dt" style="left:462.80px;top:355.80px;width:26.30px;color:#141414"><span class="num">1.074</span></div>
<div class="tx dt" style="left:42.00px;top:368.65px;width:26.30px;color:#141414"><span class="num">0.877</span></div>
<div class="tx dt" style="left:68.30px;top:368.65px;width:26.30px;color:#141414"><span class="num">0.917</span></div>
<div class="tx dt" style="left:94.60px;top:368.65px;width:26.30px;color:#141414"><span class="num">0.917</span></div>
<div class="tx dt" style="left:120.90px;top:368.65px;width:26.30px;color:#141414"><span class="num">0.917</span></div>
<div class="tx dt" style="left:147.20px;top:368.65px;width:26.30px;color:#141414"><span class="num">0.917</span></div>
<div class="tx dt" style="left:173.50px;top:368.65px;width:26.30px;color:#141414"><span class="num">0.936</span></div>
<div class="tx dt" style="left:199.80px;top:368.65px;width:26.30px;color:#141414"><span class="num">0.936</span></div>
<div class="tx dt" style="left:226.10px;top:368.65px;width:26.30px;color:#141414"><span class="num">0.936</span></div>
<div class="tx dt" style="left:252.40px;top:368.65px;width:26.30px;color:#141414"><span class="num">0.936</span></div>
<div class="tx dt" style="left:278.70px;top:368.65px;width:26.30px;color:#141414"><span class="num">0.936</span></div>
<div class="tx dt" style="left:305.00px;top:368.65px;width:26.30px;color:#141414"><span class="num">0.936</span></div>
<div class="tx dt" style="left:331.30px;top:368.65px;width:26.30px;color:#141414"><span class="num">0.917</span></div>
<div class="tx dt" style="left:357.60px;top:368.65px;width:26.30px;color:#141414"><span class="num">0.917</span></div>
<div class="tx dt" style="left:383.90px;top:368.65px;width:26.30px;color:#141414"><span class="num">0.917</span></div>
<div class="tx dt" style="left:410.20px;top:368.65px;width:26.30px;color:#141414"><span class="num">0.917</span></div>
<div class="tx dt" style="left:436.50px;top:368.65px;width:26.30px;color:#141414"><span class="num">0.917</span></div>
<div class="tx dt" style="left:462.80px;top:368.65px;width:26.30px;color:#141414"><span class="num">0.917</span></div>
<div class="tx dt" style="left:42.00px;top:381.50px;width:26.30px;color:#141414"><span class="num">0.877</span></div>
<div class="tx dt" style="left:68.30px;top:381.50px;width:26.30px;color:#141414"><span class="num">0.897</span></div>
<div class="tx dt" style="left:94.60px;top:381.50px;width:26.30px;color:#141414"><span class="num">0.897</span></div>
<div class="tx dt" style="left:120.90px;top:381.50px;width:26.30px;color:#141414"><span class="num">0.897</span></div>
<div class="tx dt" style="left:147.20px;top:381.50px;width:26.30px;color:#141414"><span class="num">0.897</span></div>
<div class="tx dt" style="left:173.50px;top:381.50px;width:26.30px;color:#141414"><span class="num">0.897</span></div>
<div class="tx dt" style="left:199.80px;top:381.50px;width:26.30px;color:#141414"><span class="num">0.897</span></div>
<div class="tx dt" style="left:226.10px;top:381.50px;width:26.30px;color:#141414"><span class="num">0.897</span></div>
<div class="tx dt" style="left:252.40px;top:381.50px;width:26.30px;color:#141414"><span class="num">0.897</span></div>
<div class="tx dt" style="left:278.70px;top:381.50px;width:26.30px;color:#141414"><span class="num">0.897</span></div>
<div class="tx dt" style="left:305.00px;top:381.50px;width:26.30px;color:#141414"><span class="num">0.897</span></div>
<div class="tx dt" style="left:331.30px;top:381.50px;width:26.30px;color:#141414"><span class="num">0.897</span></div>
<div class="tx dt" style="left:357.60px;top:381.50px;width:26.30px;color:#141414"><span class="num">0.897</span></div>
<div class="tx dt" style="left:383.90px;top:381.50px;width:26.30px;color:#141414"><span class="num">0.897</span></div>
<div class="tx dt" style="left:410.20px;top:381.50px;width:26.30px;color:#141414"><span class="num">0.877</span></div>
<div class="tx dt" style="left:436.50px;top:381.50px;width:26.30px;color:#141414"><span class="num">0.877</span></div>
<div class="tx dt" style="left:462.80px;top:381.50px;width:26.30px;color:#141414"><span class="num">0.877</span></div>
<div class="tx dt" style="left:42.00px;top:394.35px;width:26.30px;color:#141414"><span class="num">0.789</span></div>
<div class="tx dt" style="left:68.30px;top:394.35px;width:26.30px;color:#141414"><span class="num">0.789</span></div>
<div class="tx dt" style="left:94.60px;top:394.35px;width:26.30px;color:#141414"><span class="num">0.789</span></div>
<div class="tx dt" style="left:120.90px;top:394.35px;width:26.30px;color:#141414"><span class="num">0.789</span></div>
<div class="tx dt" style="left:147.20px;top:394.35px;width:26.30px;color:#141414"><span class="num">0.789</span></div>
<div class="tx dt" style="left:173.50px;top:394.35px;width:26.30px;color:#141414"><span class="num">0.789</span></div>
<div class="tx dt" style="left:199.80px;top:394.35px;width:26.30px;color:#141414"><span class="num">0.775</span></div>
<div class="tx dt" style="left:226.10px;top:394.35px;width:26.30px;color:#141414"><span class="num">0.775</span></div>
<div class="tx dt" style="left:252.40px;top:394.35px;width:26.30px;color:#141414"><span class="num">0.775</span></div>
<div class="tx dt" style="left:278.70px;top:394.35px;width:26.30px;color:#141414"><span class="num">0.775</span></div>
<div class="tx dt" style="left:305.00px;top:394.35px;width:26.30px;color:#141414"><span class="num">0.775</span></div>
<div class="tx dt" style="left:331.30px;top:394.35px;width:26.30px;color:#141414"><span class="num">0.775</span></div>
<div class="tx dt" style="left:357.60px;top:394.35px;width:26.30px;color:#141414"><span class="num">0.775</span></div>
<div class="tx dt" style="left:383.90px;top:394.35px;width:26.30px;color:#141414"><span class="num">0.775</span></div>
<div class="tx dt" style="left:410.20px;top:394.35px;width:26.30px;color:#141414"><span class="num">0.775</span></div>
<div class="tx dt" style="left:436.50px;top:394.35px;width:26.30px;color:#141414"><span class="num">0.775</span></div>
<div class="tx dt" style="left:462.80px;top:394.35px;width:26.30px;color:#141414"><span class="num">0.775</span></div>
<div class="tx dt" style="left:42.00px;top:407.20px;width:26.30px;color:#141414"><span class="num">0.755</span></div>
<div class="tx dt" style="left:68.30px;top:407.20px;width:26.30px;color:#141414"><span class="num">0.755</span></div>
<div class="tx dt" style="left:94.60px;top:407.20px;width:26.30px;color:#141414"><span class="num">0.755</span></div>
<div class="tx dt" style="left:120.90px;top:407.20px;width:26.30px;color:#141414"><span class="num">0.755</span></div>
<div class="tx dt" style="left:147.20px;top:407.20px;width:26.30px;color:#141414"><span class="num">0.755</span></div>
<div class="tx dt" style="left:173.50px;top:407.20px;width:26.30px;color:#141414"><span class="num">0.755</span></div>
<div class="tx dt" style="left:199.80px;top:407.20px;width:26.30px;color:#141414"><span class="num">0.755</span></div>
<div class="tx dt" style="left:226.10px;top:407.20px;width:26.30px;color:#141414"><span class="num">0.755</span></div>
<div class="tx dt" style="left:252.40px;top:407.20px;width:26.30px;color:#141414"><span class="num">0.755</span></div>
<div class="tx dt" style="left:278.70px;top:407.20px;width:26.30px;color:#141414"><span class="num">0.735</span></div>
<div class="tx dt" style="left:305.00px;top:407.20px;width:26.30px;color:#141414"><span class="num">0.735</span></div>
<div class="tx dt" style="left:331.30px;top:407.20px;width:26.30px;color:#141414"><span class="num">0.735</span></div>
<div class="tx dt" style="left:357.60px;top:407.20px;width:26.30px;color:#141414"><span class="num">0.735</span></div>
<div class="tx dt" style="left:383.90px;top:407.20px;width:26.30px;color:#141414"><span class="num">0.735</span></div>
<div class="tx dt" style="left:410.20px;top:407.20px;width:26.30px;color:#141414"><span class="num">0.735</span></div>
<div class="tx dt" style="left:436.50px;top:407.20px;width:26.30px;color:#141414"><span class="num">0.735</span></div>
<div class="tx dt" style="left:462.80px;top:407.20px;width:26.30px;color:#141414"><span class="num">0.735</span></div>
<div class="tx dt" style="left:42.00px;top:420.05px;width:26.30px;color:#141414"><span class="num">0.721</span></div>
<div class="tx dt" style="left:68.30px;top:420.05px;width:26.30px;color:#141414"><span class="num">0.721</span></div>
<div class="tx dt" style="left:94.60px;top:420.05px;width:26.30px;color:#141414"><span class="num">0.721</span></div>
<div class="tx dt" style="left:120.90px;top:420.05px;width:26.30px;color:#141414"><span class="num">0.721</span></div>
<div class="tx dt" style="left:147.20px;top:420.05px;width:26.30px;color:#141414"><span class="num">0.721</span></div>
<div class="tx dt" style="left:173.50px;top:420.05px;width:26.30px;color:#141414"><span class="num">0.721</span></div>
<div class="tx dt" style="left:199.80px;top:420.05px;width:26.30px;color:#141414"><span class="num">0.721</span></div>
<div class="tx dt" style="left:226.10px;top:420.05px;width:26.30px;color:#141414"><span class="num">0.721</span></div>
<div class="tx dt" style="left:252.40px;top:420.05px;width:26.30px;color:#141414"><span class="num">0.721</span></div>
<div class="tx dt" style="left:278.70px;top:420.05px;width:26.30px;color:#141414"><span class="num">0.721</span></div>
<div class="tx dt" style="left:305.00px;top:420.05px;width:26.30px;color:#141414"><span class="num">0.721</span></div>
<div class="tx dt" style="left:331.30px;top:420.05px;width:26.30px;color:#141414"><span class="num">0.701</span></div>
<div class="tx dt" style="left:357.60px;top:420.05px;width:26.30px;color:#141414"><span class="num">0.701</span></div>
<div class="tx dt" style="left:383.90px;top:420.05px;width:26.30px;color:#141414"><span class="num">0.701</span></div>
<div class="tx dt" style="left:410.20px;top:420.05px;width:26.30px;color:#141414"><span class="num">0.701</span></div>
<div class="tx dt" style="left:436.50px;top:420.05px;width:26.30px;color:#141414"><span class="num">0.701</span></div>
<div class="tx dt" style="left:462.80px;top:420.05px;width:26.30px;color:#141414"><span class="num">0.701</span></div>
<div class="tx dt" style="left:42.00px;top:432.90px;width:26.30px;color:#141414"><span class="num">0.701</span></div>
<div class="tx dt" style="left:68.30px;top:432.90px;width:26.30px;color:#141414"><span class="num">0.701</span></div>
<div class="tx dt" style="left:94.60px;top:432.90px;width:26.30px;color:#141414"><span class="num">0.701</span></div>
<div class="tx dt" style="left:120.90px;top:432.90px;width:26.30px;color:#141414"><span class="num">0.701</span></div>
<div class="tx dt" style="left:147.20px;top:432.90px;width:26.30px;color:#141414"><span class="num">0.686</span></div>
<div class="tx dt" style="left:173.50px;top:432.90px;width:26.30px;color:#141414"><span class="num">0.686</span></div>
<div class="tx dt" style="left:199.80px;top:432.90px;width:26.30px;color:#141414"><span class="num">0.686</span></div>
<div class="tx dt" style="left:226.10px;top:432.90px;width:26.30px;color:#141414"><span class="num">0.686</span></div>
<div class="tx dt" style="left:252.40px;top:432.90px;width:26.30px;color:#141414"><span class="num">0.686</span></div>
<div class="tx dt" style="left:278.70px;top:432.90px;width:26.30px;color:#141414"><span class="num">0.686</span></div>
<div class="tx dt" style="left:305.00px;top:432.90px;width:26.30px;color:#141414"><span class="num">0.686</span></div>
<div class="tx dt" style="left:331.30px;top:432.90px;width:26.30px;color:#141414"><span class="num">0.686</span></div>
<div class="tx dt" style="left:357.60px;top:432.90px;width:26.30px;color:#141414"><span class="num">0.686</span></div>
<div class="tx dt" style="left:383.90px;top:432.90px;width:26.30px;color:#141414"><span class="num">0.667</span></div>
<div class="tx dt" style="left:410.20px;top:432.90px;width:26.30px;color:#141414"><span class="num">0.667</span></div>
<div class="tx dt" style="left:436.50px;top:432.90px;width:26.30px;color:#141414"><span class="num">0.667</span></div>
<div class="tx dt" style="left:462.80px;top:432.90px;width:26.30px;color:#141414"><span class="num">0.667</span></div>
<div class="tx dt" style="left:42.00px;top:445.75px;width:26.30px;color:#141414"><span class="num">0.667</span></div>
<div class="tx dt" style="left:68.30px;top:445.75px;width:26.30px;color:#141414"><span class="num">0.647</span></div>
<div class="tx dt" style="left:94.60px;top:445.75px;width:26.30px;color:#141414"><span class="num">0.667</span></div>
<div class="tx dt" style="left:120.90px;top:445.75px;width:26.30px;color:#141414"><span class="num">0.667</span></div>
<div class="tx dt" style="left:147.20px;top:445.75px;width:26.30px;color:#141414"><span class="num">0.647</span></div>
<div class="tx dt" style="left:173.50px;top:445.75px;width:26.30px;color:#141414"><span class="num">0.647</span></div>
<div class="tx dt" style="left:199.80px;top:445.75px;width:26.30px;color:#141414"><span class="num">0.647</span></div>
<div class="tx dt" style="left:226.10px;top:445.75px;width:26.30px;color:#141414"><span class="num">0.647</span></div>
<div class="tx dt" style="left:252.40px;top:445.75px;width:26.30px;color:#141414"><span class="num">0.647</span></div>
<div class="tx dt" style="left:278.70px;top:445.75px;width:26.30px;color:#141414"><span class="num">0.647</span></div>
<div class="tx dt" style="left:305.00px;top:445.75px;width:26.30px;color:#141414"><span class="num">0.647</span></div>
<div class="tx dt" style="left:331.30px;top:445.75px;width:26.30px;color:#141414"><span class="num">0.647</span></div>
<div class="tx dt" style="left:357.60px;top:445.75px;width:26.30px;color:#141414"><span class="num">0.647</span></div>
<div class="tx dt" style="left:383.90px;top:445.75px;width:26.30px;color:#141414"><span class="num">0.632</span></div>
<div class="tx dt" style="left:410.20px;top:445.75px;width:26.30px;color:#141414"><span class="num">0.632</span></div>
<div class="tx dt" style="left:436.50px;top:445.75px;width:26.30px;color:#141414"><span class="num">0.632</span></div>
<div class="tx dt" style="left:462.80px;top:445.75px;width:26.30px;color:#141414"><span class="num">0.632</span></div>
<div class="tx dt" style="left:42.00px;top:458.60px;width:26.30px;color:#141414"><span class="num">0.613</span></div>
<div class="tx dt" style="left:68.30px;top:458.60px;width:26.30px;color:#141414"><span class="num">0.613</span></div>
<div class="tx dt" style="left:94.60px;top:458.60px;width:26.30px;color:#141414"><span class="num">0.632</span></div>
<div class="tx dt" style="left:120.90px;top:458.60px;width:26.30px;color:#141414"><span class="num">0.613</span></div>
<div class="tx dt" style="left:147.20px;top:458.60px;width:26.30px;color:#141414"><span class="num">0.613</span></div>
<div class="tx dt" style="left:173.50px;top:458.60px;width:26.30px;color:#141414"><span class="num">0.613</span></div>
<div class="tx dt" style="left:199.80px;top:458.60px;width:26.30px;color:#141414"><span class="num">0.613</span></div>
<div class="tx dt" style="left:226.10px;top:458.60px;width:26.30px;color:#141414"><span class="num">0.613</span></div>
<div class="tx dt" style="left:252.40px;top:458.60px;width:26.30px;color:#141414"><span class="num">0.613</span></div>
<div class="tx dt" style="left:278.70px;top:458.60px;width:26.30px;color:#141414"><span class="num">0.613</span></div>
<div class="tx dt" style="left:305.00px;top:458.60px;width:26.30px;color:#141414"><span class="num">0.598</span></div>
<div class="tx dt" style="left:331.30px;top:458.60px;width:26.30px;color:#141414"><span class="num">0.598</span></div>
<div class="tx dt" style="left:357.60px;top:458.60px;width:26.30px;color:#141414"><span class="num">0.598</span></div>
<div class="tx dt" style="left:383.90px;top:458.60px;width:26.30px;color:#141414"><span class="num">0.598</span></div>
<div class="tx dt" style="left:410.20px;top:458.60px;width:26.30px;color:#141414"><span class="num">0.598</span></div>
<div class="tx dt" style="left:436.50px;top:458.60px;width:26.30px;color:#141414"><span class="num">0.598</span></div>
<div class="tx dt" style="left:462.80px;top:458.60px;width:26.30px;color:#141414"><span class="num">0.598</span></div>
<div class="tx dt" style="left:42.00px;top:471.45px;width:26.30px;color:#141414"><span class="num">0.578</span></div>
<div class="tx dt" style="left:68.30px;top:471.45px;width:26.30px;color:#141414"><span class="num">0.578</span></div>
<div class="tx dt" style="left:94.60px;top:471.45px;width:26.30px;color:#141414"><span class="num">0.578</span></div>
<div class="tx dt" style="left:120.90px;top:471.45px;width:26.30px;color:#141414"><span class="num">0.578</span></div>
<div class="tx dt" style="left:147.20px;top:471.45px;width:26.30px;color:#141414"><span class="num">0.578</span></div>
<div class="tx dt" style="left:173.50px;top:471.45px;width:26.30px;color:#141414"><span class="num">0.564</span></div>
<div class="tx dt" style="left:199.80px;top:471.45px;width:26.30px;color:#141414"><span class="num">0.564</span></div>
<div class="tx dt" style="left:226.10px;top:471.45px;width:26.30px;color:#141414"><span class="num">0.564</span></div>
<div class="tx dt" style="left:252.40px;top:471.45px;width:26.30px;color:#141414"><span class="num">0.564</span></div>
<div class="tx dt" style="left:278.70px;top:471.45px;width:26.30px;color:#141414"><span class="num">0.564</span></div>
<div class="tx dt" style="left:305.00px;top:471.45px;width:26.30px;color:#141414"><span class="num">0.564</span></div>
<div class="tx dt" style="left:331.30px;top:471.45px;width:26.30px;color:#141414"><span class="num">0.564</span></div>
<div class="tx dt" style="left:357.60px;top:471.45px;width:26.30px;color:#141414"><span class="num">0.564</span></div>
<div class="tx dt" style="left:383.90px;top:471.45px;width:26.30px;color:#141414"><span class="num">0.564</span></div>
<div class="tx dt" style="left:410.20px;top:471.45px;width:26.30px;color:#141414"><span class="num">0.564</span></div>
<div class="tx dt" style="left:436.50px;top:471.45px;width:26.30px;color:#141414"><span class="num">0.564</span></div>
<div class="tx dt" style="left:462.80px;top:471.45px;width:26.30px;color:#141414"><span class="num">0.564</span></div>
<div class="tx dt" style="left:42.00px;top:484.30px;width:26.30px;color:#141414"><span class="num">0.549</span></div>
<div class="tx dt" style="left:68.30px;top:484.30px;width:26.30px;color:#141414"><span class="num">0.549</span></div>
<div class="tx dt" style="left:94.60px;top:484.30px;width:26.30px;color:#141414"><span class="num">0.549</span></div>
<div class="tx dt" style="left:120.90px;top:484.30px;width:26.30px;color:#141414"><span class="num">0.549</span></div>
<div class="tx dt" style="left:147.20px;top:484.30px;width:26.30px;color:#141414"><span class="num">0.529</span></div>
<div class="tx dt" style="left:173.50px;top:484.30px;width:26.30px;color:#141414"><span class="num">0.529</span></div>
<div class="tx dt" style="left:199.80px;top:484.30px;width:26.30px;color:#141414"><span class="num">0.529</span></div>
<div class="tx dt" style="left:226.10px;top:484.30px;width:26.30px;color:#141414"><span class="num">0.529</span></div>
<div class="tx dt" style="left:252.40px;top:484.30px;width:26.30px;color:#141414"><span class="num">0.529</span></div>
<div class="tx dt" style="left:278.70px;top:484.30px;width:26.30px;color:#141414"><span class="num">0.529</span></div>
<div class="tx dt" style="left:305.00px;top:484.30px;width:26.30px;color:#141414"><span class="num">0.510</span></div>
<div class="tx dt" style="left:331.30px;top:484.30px;width:26.30px;color:#141414"><span class="num">0.510</span></div>
<div class="tx dt" style="left:357.60px;top:484.30px;width:26.30px;color:#141414"><span class="num">0.510</span></div>
<div class="tx dt" style="left:383.90px;top:484.30px;width:26.30px;color:#141414"><span class="num">0.510</span></div>
<div class="tx dt" style="left:410.20px;top:484.30px;width:26.30px;color:#141414"><span class="num">0.510</span></div>
<div class="tx dt" style="left:436.50px;top:484.30px;width:26.30px;color:#141414"><span class="num">0.510</span></div>
<div class="tx dt" style="left:462.80px;top:484.30px;width:26.30px;color:#141414"><span class="num">0.510</span></div>
</div>
<div style="position:absolute;left:0;top:0;width:771px;height:1.9px;background:#1e1e1e"></div>
<div style="position:absolute;left:0;top:0;transform-origin:0 0;transform:translate(767.6px,-1.3px) scale(1.149)">
<div class="panel" style="height:451.6px">
<div style="position:absolute;left:5px;top:0px;width:2.2px;height:451.6px;background:linear-gradient(90deg,#f4f4f4,#e2e2e2)"></div>
<div style="position:absolute;left:7px;top:2px;width:473px;height:327px;background:#a8a8a8"></div>
<div style="position:absolute;left:7.7px;top:2.7px;width:472.3px;height:326.3px;background:#ffffe1;overflow:hidden">
<div style="position:absolute;left:-7.7px;top:-2.7px;width:771px;height:335px">
<svg width="771" height="335" viewBox="0 0 771 335" style="position:absolute;left:0;top:0" shape-rendering="geometricPrecision">
<polygon points="122.20,71.50 276.73,41.07 276.73,208.57 122.20,239.00" fill="#d0d0d7"/>
<polygon points="276.73,41.07 365.64,93.26 365.64,260.76 276.73,208.57" fill="#d0d0d7"/>
<polygon points="122.20,239.00 276.73,208.57 365.64,260.76 211.11,291.19" fill="#d0d0d7"/>
<polygon points="122.20,71.50 211.11,123.69 211.11,291.19 122.20,239.00" fill="#d0d0d7"/>
<polygon points="211.11,123.69 365.64,93.26 365.64,260.76 211.11,291.19" fill="#e4e4f0"/>
<line x1="122.2" y1="239.0" x2="276.73" y2="208.57" stroke="#b8b8c0" stroke-width="0.8"/>
<polygon points="267.64,42.86 276.73,41.07 281.96,58.82 272.87,60.61" fill="#ff0000" stroke="#101010" stroke-width="0.8" stroke-linejoin="round"/>
<polygon points="258.55,44.65 267.64,42.86 272.87,60.61 263.78,62.40" fill="#ff0000" stroke="#101010" stroke-width="0.8" stroke-linejoin="round"/>
<polygon points="272.87,60.61 281.96,58.82 287.19,91.74 278.10,93.53" fill="#ff2d00" stroke="#101010" stroke-width="0.8" stroke-linejoin="round"/>
<polygon points="249.46,46.44 258.55,44.65 263.78,62.40 254.69,64.19" fill="#ff0000" stroke="#101010" stroke-width="0.8" stroke-linejoin="round"/>
<polygon points="263.78,62.40 272.87,60.61 278.10,93.53 269.01,95.32" fill="#ff2d00" stroke="#101010" stroke-width="0.8" stroke-linejoin="round"/>
<polygon points="240.37,48.23 249.46,46.44 254.69,64.19 245.60,65.98" fill="#ff0000" stroke="#101010" stroke-width="0.8" stroke-linejoin="round"/>
<polygon points="278.10,93.53 287.19,91.74 292.42,111.44 283.33,113.23" fill="#ff8800" stroke="#101010" stroke-width="0.8" stroke-linejoin="round"/>
<polygon points="254.69,64.19 263.78,62.40 269.01,95.32 259.92,97.11" fill="#ff2d00" stroke="#101010" stroke-width="0.8" stroke-linejoin="round"/>
<polygon points="231.28,50.02 240.37,48.23 245.60,65.98 236.51,67.77" fill="#ff0000" stroke="#101010" stroke-width="0.8" stroke-linejoin="round"/>
<polygon points="269.01,95.32 278.10,93.53 283.33,113.23 274.24,115.02" fill="#ff8800" stroke="#101010" stroke-width="0.8" stroke-linejoin="round"/>
<polygon points="245.60,65.98 254.69,64.19 259.92,97.11 250.83,95.63" fill="#ff2d00" stroke="#101010" stroke-width="0.8" stroke-linejoin="round"/>
<polygon points="222.19,51.81 231.28,50.02 236.51,67.77 227.42,69.56" fill="#ff0000" stroke="#101010" stroke-width="0.8" stroke-linejoin="round"/>
<polygon points="283.33,113.23 292.42,111.44 297.65,121.04 288.56,122.83" fill="#ffba00" stroke="#101010" stroke-width="0.8" stroke-linejoin="round"/>
<polygon points="259.92,97.11 269.01,95.32 274.24,115.02 265.15,116.81" fill="#ff8800" stroke="#101010" stroke-width="0.8" stroke-linejoin="round"/>
<polygon points="236.51,67.77 245.60,65.98 250.83,95.63 241.74,97.42" fill="#ff2d00" stroke="#101010" stroke-width="0.8" stroke-linejoin="round"/>
<polygon points="213.10,53.60 222.19,51.81 227.42,69.56 218.33,71.35" fill="#ff0000" stroke="#101010" stroke-width="0.8" stroke-linejoin="round"/>
<polygon points="274.24,115.02 283.33,113.23 288.56,122.83 279.47,124.62" fill="#ffba00" stroke="#101010" stroke-width="0.8" stroke-linejoin="round"/>
<polygon points="250.83,95.63 259.92,97.11 265.15,116.81 256.06,118.60" fill="#ff7e00" stroke="#101010" stroke-width="0.8" stroke-linejoin="round"/>
<polygon points="227.42,69.56 236.51,67.77 241.74,97.42 232.65,99.21" fill="#ff2d00" stroke="#101010" stroke-width="0.8" stroke-linejoin="round"/>
<polygon points="288.56,122.83 297.65,121.04 302.88,129.65 293.79,131.44" fill="#ffce00" stroke="#101010" stroke-width="0.8" stroke-linejoin="round"/>
<polygon points="204.01,55.39 213.10,53.60 218.33,71.35 209.24,73.14" fill="#ff0000" stroke="#101010" stroke-width="0.8" stroke-linejoin="round"/>
<polygon points="265.15,116.81 274.24,115.02 279.47,124.62 270.38,126.41" fill="#ffba00" stroke="#101010" stroke-width="0.8" stroke-linejoin="round"/>
<polygon points="241.74,97.42 250.83,95.63 256.06,118.60 246.97,120.39" fill="#ff7e00" stroke="#101010" stroke-width="0.8" stroke-linejoin="round"/>
<polygon points="218.33,71.35 227.42,69.56 232.65,99.21 223.56,101.00" fill="#ff2d00" stroke="#101010" stroke-width="0.8" stroke-linejoin="round"/>
<polygon points="279.47,124.62 288.56,122.83 293.79,131.44 284.70,133.23" fill="#ffce00" stroke="#101010" stroke-width="0.8" stroke-linejoin="round"/>
<polygon points="194.92,57.18 204.01,55.39 209.24,73.14 200.15,74.93" fill="#ff0000" stroke="#101010" stroke-width="0.8" stroke-linejoin="round"/>
<polygon points="256.06,118.60 265.15,116.81 270.38,126.41 261.29,128.20" fill="#ffba00" stroke="#101010" stroke-width="0.8" stroke-linejoin="round"/>
<polygon points="232.65,99.21 241.74,97.42 246.97,120.39 237.88,122.18" fill="#ff7e00" stroke="#101010" stroke-width="0.8" stroke-linejoin="round"/>
<polygon points="293.79,131.44 302.88,129.65 308.11,138.27 299.02,140.06" fill="#ffdf00" stroke="#101010" stroke-width="0.8" stroke-linejoin="round"/>
<polygon points="209.24,73.14 218.33,71.35 223.56,101.00 214.47,102.79" fill="#ff2d00" stroke="#101010" stroke-width="0.8" stroke-linejoin="round"/>
<polygon points="270.38,126.41 279.47,124.62 284.70,133.23 275.61,135.02" fill="#ffce00" stroke="#101010" stroke-width="0.8" stroke-linejoin="round"/>
<polygon points="185.83,58.97 194.92,57.18 200.15,74.93 191.06,76.72" fill="#ff0000" stroke="#101010" stroke-width="0.8" stroke-linejoin="round"/>
<polygon points="246.97,120.39 256.06,118.60 261.29,128.20 252.20,129.99" fill="#ffba00" stroke="#101010" stroke-width="0.8" stroke-linejoin="round"/>
<polygon points="223.56,101.00 232.65,99.21 237.88,122.18 228.79,123.97" fill="#ff7e00" stroke="#101010" stroke-width="0.8" stroke-linejoin="round"/>
<polygon points="284.70,133.23 293.79,131.44 299.02,140.06 289.93,141.85" fill="#ffdf00" stroke="#101010" stroke-width="0.8" stroke-linejoin="round"/>
<polygon points="200.15,74.93 209.24,73.14 214.47,102.79 205.38,104.58" fill="#ff2d00" stroke="#101010" stroke-width="0.8" stroke-linejoin="round"/>
<polygon points="261.29,128.20 270.38,126.41 275.61,135.02 266.52,136.81" fill="#ffce00" stroke="#101010" stroke-width="0.8" stroke-linejoin="round"/>
<polygon points="176.74,60.76 185.83,58.97 191.06,76.72 181.97,78.51" fill="#ff0000" stroke="#101010" stroke-width="0.8" stroke-linejoin="round"/>
<polygon points="237.88,122.18 246.97,120.39 252.20,129.99 243.11,131.78" fill="#ffba00" stroke="#101010" stroke-width="0.8" stroke-linejoin="round"/>
<polygon points="299.02,140.06 308.11,138.27 313.34,147.04 304.25,148.83" fill="#fff000" stroke="#101010" stroke-width="0.8" stroke-linejoin="round"/>
<polygon points="214.47,102.79 223.56,101.00 228.79,123.97 219.70,125.76" fill="#ff7e00" stroke="#101010" stroke-width="0.8" stroke-linejoin="round"/>
<polygon points="275.61,135.02 284.70,133.23 289.93,141.85 280.84,143.64" fill="#ffdf00" stroke="#101010" stroke-width="0.8" stroke-linejoin="round"/>
<polygon points="191.06,76.72 200.15,74.93 205.38,104.58 196.29,106.37" fill="#ff2d00" stroke="#101010" stroke-width="0.8" stroke-linejoin="round"/>
<polygon points="252.20,129.99 261.29,128.20 266.52,136.81 257.43,138.60" fill="#ffce00" stroke="#101010" stroke-width="0.8" stroke-linejoin="round"/>
<polygon points="167.65,62.55 176.74,60.76 181.97,78.51 172.88,80.30" fill="#ff0000" stroke="#101010" stroke-width="0.8" stroke-linejoin="round"/>
<polygon points="228.79,123.97 237.88,122.18 243.11,131.78 234.02,133.57" fill="#ffba00" stroke="#101010" stroke-width="0.8" stroke-linejoin="round"/>
<polygon points="289.93,141.85 299.02,140.06 304.25,148.83 295.16,150.62" fill="#0f78d8" stroke="#101010" stroke-width="0.8" stroke-linejoin="round"/>
<polygon points="205.38,104.58 214.47,102.79 219.70,125.76 210.61,127.55" fill="#ff7e00" stroke="#101010" stroke-width="0.8" stroke-linejoin="round"/>
<polygon points="266.52,136.81 275.61,135.02 280.84,143.64 271.75,145.43" fill="#ffdf00" stroke="#101010" stroke-width="0.8" stroke-linejoin="round"/>
<polygon points="181.97,78.51 191.06,76.72 196.29,106.37 187.20,108.16" fill="#ff2d00" stroke="#101010" stroke-width="0.8" stroke-linejoin="round"/>
<polygon points="243.11,131.78 252.20,129.99 257.43,138.60 248.34,140.39" fill="#ffce00" stroke="#101010" stroke-width="0.8" stroke-linejoin="round"/>
<polygon points="158.56,64.34 167.65,62.55 172.88,80.30 163.79,82.09" fill="#ff0000" stroke="#101010" stroke-width="0.8" stroke-linejoin="round"/>
<polygon points="304.25,148.83 313.34,147.04 318.57,155.66 309.48,157.45" fill="#fdff00" stroke="#101010" stroke-width="0.8" stroke-linejoin="round"/>
<polygon points="219.70,125.76 228.79,123.97 234.02,133.57 224.93,135.36" fill="#ffba00" stroke="#101010" stroke-width="0.8" stroke-linejoin="round"/>
<polygon points="280.84,143.64 289.93,141.85 295.16,150.62 286.07,152.41" fill="#fff000" stroke="#101010" stroke-width="0.8" stroke-linejoin="round"/>
<polygon points="196.29,106.37 205.38,104.58 210.61,127.55 201.52,129.34" fill="#ff7e00" stroke="#101010" stroke-width="0.8" stroke-linejoin="round"/>
<polygon points="257.43,138.60 266.52,136.81 271.75,145.43 262.66,144.12" fill="#ffdf00" stroke="#101010" stroke-width="0.8" stroke-linejoin="round"/>
<polygon points="172.88,80.30 181.97,78.51 187.20,108.16 178.11,109.95" fill="#ff2d00" stroke="#101010" stroke-width="0.8" stroke-linejoin="round"/>
<polygon points="234.02,133.57 243.11,131.78 248.34,140.39 239.25,138.92" fill="#ffce00" stroke="#101010" stroke-width="0.8" stroke-linejoin="round"/>
<polygon points="149.47,66.13 158.56,64.34 163.79,82.09 154.70,83.88" fill="#ff0000" stroke="#101010" stroke-width="0.8" stroke-linejoin="round"/>
<polygon points="295.16,150.62 304.25,148.83 309.48,157.45 300.39,159.24" fill="#fdff00" stroke="#101010" stroke-width="0.8" stroke-linejoin="round"/>
<polygon points="210.61,127.55 219.70,125.76 224.93,135.36 215.84,133.88" fill="#ffba00" stroke="#101010" stroke-width="0.8" stroke-linejoin="round"/>
<polygon points="271.75,145.43 280.84,143.64 286.07,152.41 276.98,154.20" fill="#fff000" stroke="#101010" stroke-width="0.8" stroke-linejoin="round"/>
<polygon points="187.20,108.16 196.29,106.37 201.52,129.34 192.43,131.13" fill="#ff7e00" stroke="#101010" stroke-width="0.8" stroke-linejoin="round"/>
<polygon points="248.34,140.39 257.43,138.60 262.66,144.12 253.57,145.91" fill="#ffdf00" stroke="#101010" stroke-width="0.8" stroke-linejoin="round"/>
<polygon points="163.79,82.09 172.88,80.30 178.11,109.95 169.02,111.74" fill="#ff2d00" stroke="#101010" stroke-width="0.8" stroke-linejoin="round"/>
<polygon points="309.48,157.45 318.57,155.66 323.80,164.27 314.71,166.06" fill="#ecff00" stroke="#101010" stroke-width="0.8" stroke-linejoin="round"/>
<polygon points="224.93,135.36 234.02,133.57 239.25,138.92 230.16,140.71" fill="#ffce00" stroke="#101010" stroke-width="0.8" stroke-linejoin="round"/>
<polygon points="140.38,67.92 149.47,66.13 154.70,83.88 145.61,85.67" fill="#ff0000" stroke="#101010" stroke-width="0.8" stroke-linejoin="round"/>
<polygon points="286.07,152.41 295.16,150.62 300.39,159.24 291.30,161.03" fill="#fdff00" stroke="#101010" stroke-width="0.8" stroke-linejoin="round"/>
<polygon points="201.52,129.34 210.61,127.55 215.84,133.88 206.75,135.67" fill="#ffba00" stroke="#101010" stroke-width="0.8" stroke-linejoin="round"/>
<polygon points="262.66,144.12 271.75,145.43 276.98,154.20 267.89,153.55" fill="#ffe600" stroke="#101010" stroke-width="0.8" stroke-linejoin="round"/>
<polygon points="178.11,109.95 187.20,108.16 192.43,131.13 183.34,130.64" fill="#ff7e00" stroke="#101010" stroke-width="0.8" stroke-linejoin="round"/>
<polygon points="239.25,138.92 248.34,140.39 253.57,145.91 244.48,147.70" fill="#ffd500" stroke="#101010" stroke-width="0.8" stroke-linejoin="round"/>
<polygon points="154.70,83.88 163.79,82.09 169.02,111.74 159.93,113.53" fill="#ff2d00" stroke="#101010" stroke-width="0.8" stroke-linejoin="round"/>
<polygon points="300.39,159.24 309.48,157.45 314.71,166.06 305.62,167.85" fill="#ecff00" stroke="#101010" stroke-width="0.8" stroke-linejoin="round"/>
<polygon points="215.84,133.88 224.93,135.36 230.16,140.71 221.07,142.50" fill="#ffc400" stroke="#101010" stroke-width="0.8" stroke-linejoin="round"/>
<polygon points="131.29,69.71 140.38,67.92 145.61,85.67 136.52,87.46" fill="#ff0000" stroke="#101010" stroke-width="0.8" stroke-linejoin="round"/>
<polygon points="276.98,154.20 286.07,152.41 291.30,161.03 282.21,162.82" fill="#fdff00" stroke="#101010" stroke-width="0.8" stroke-linejoin="round"/>
<polygon points="192.43,131.13 201.52,129.34 206.75,135.67 197.66,137.46" fill="#ffba00" stroke="#101010" stroke-width="0.8" stroke-linejoin="round"/>
<polygon points="253.57,145.91 262.66,144.12 267.89,153.55 258.80,155.34" fill="#ffe600" stroke="#101010" stroke-width="0.8" stroke-linejoin="round"/>
<polygon points="169.02,111.74 178.11,109.95 183.34,130.64 174.25,132.43" fill="#ff7e00" stroke="#101010" stroke-width="0.8" stroke-linejoin="round"/>
<polygon points="314.71,166.06 323.80,164.27 329.03,176.15 319.94,177.94" fill="#dbff00" stroke="#101010" stroke-width="0.8" stroke-linejoin="round"/>
<polygon points="230.16,140.71 239.25,138.92 244.48,147.70 235.39,149.49" fill="#ffd500" stroke="#101010" stroke-width="0.8" stroke-linejoin="round"/>
<polygon points="145.61,85.67 154.70,83.88 159.93,113.53 150.84,115.32" fill="#ff2d00" stroke="#101010" stroke-width="0.8" stroke-linejoin="round"/>
<polygon points="291.30,161.03 300.39,159.24 305.62,167.85 296.53,169.64" fill="#ecff00" stroke="#101010" stroke-width="0.8" stroke-linejoin="round"/>
<polygon points="206.75,135.67 215.84,133.88 221.07,142.50 211.98,144.29" fill="#ffc400" stroke="#101010" stroke-width="0.8" stroke-linejoin="round"/>
<polygon points="122.20,71.50 131.29,69.71 136.52,87.46 127.43,89.25" fill="#ff0000" stroke="#101010" stroke-width="0.8" stroke-linejoin="round"/>
<polygon points="267.89,153.55 276.98,154.20 282.21,162.82 273.12,164.61" fill="#fffa00" stroke="#101010" stroke-width="0.8" stroke-linejoin="round"/>
<polygon points="183.34,130.64 192.43,131.13 197.66,137.46 188.57,139.25" fill="#ffb300" stroke="#101010" stroke-width="0.8" stroke-linejoin="round"/>
<polygon points="244.48,147.70 253.57,145.91 258.80,155.34 249.71,157.13" fill="#ffe600" stroke="#101010" stroke-width="0.8" stroke-linejoin="round"/>
<polygon points="159.93,113.53 169.02,111.74 174.25,132.43 165.16,134.22" fill="#ff7e00" stroke="#101010" stroke-width="0.8" stroke-linejoin="round"/>
<polygon points="305.62,167.85 314.71,166.06 319.94,177.94 310.85,179.73" fill="#dbff00" stroke="#101010" stroke-width="0.8" stroke-linejoin="round"/>
<polygon points="221.07,142.50 230.16,140.71 235.39,149.49 226.30,151.28" fill="#ffd500" stroke="#101010" stroke-width="0.8" stroke-linejoin="round"/>
<polygon points="136.52,87.46 145.61,85.67 150.84,115.32 141.75,117.11" fill="#ff2d00" stroke="#101010" stroke-width="0.8" stroke-linejoin="round"/>
<polygon points="282.21,162.82 291.30,161.03 296.53,169.64 287.44,171.43" fill="#ecff00" stroke="#101010" stroke-width="0.8" stroke-linejoin="round"/>
<polygon points="197.66,137.46 206.75,135.67 211.98,144.29 202.89,146.08" fill="#ffc400" stroke="#101010" stroke-width="0.8" stroke-linejoin="round"/>
<polygon points="258.80,155.34 267.89,153.55 273.12,164.61 264.03,166.40" fill="#fffa00" stroke="#101010" stroke-width="0.8" stroke-linejoin="round"/>
<polygon points="174.25,132.43 183.34,130.64 188.57,139.25 179.48,141.04" fill="#ffb300" stroke="#101010" stroke-width="0.8" stroke-linejoin="round"/>
<polygon points="319.94,177.94 329.03,176.15 334.26,189.01 325.17,190.80" fill="#c0ff00" stroke="#101010" stroke-width="0.8" stroke-linejoin="round"/>
<polygon points="235.39,149.49 244.48,147.70 249.71,157.13 240.62,158.92" fill="#ffe600" stroke="#101010" stroke-width="0.8" stroke-linejoin="round"/>
<polygon points="150.84,115.32 159.93,113.53 165.16,134.22 156.07,136.01" fill="#ff7e00" stroke="#101010" stroke-width="0.8" stroke-linejoin="round"/>
<polygon points="296.53,169.64 305.62,167.85 310.85,179.73 301.76,181.52" fill="#dbff00" stroke="#101010" stroke-width="0.8" stroke-linejoin="round"/>
<polygon points="211.98,144.29 221.07,142.50 226.30,151.28 217.21,153.07" fill="#ffd500" stroke="#101010" stroke-width="0.8" stroke-linejoin="round"/>
<polygon points="127.43,89.25 136.52,87.46 141.75,117.11 132.66,122.17" fill="#ff2d00" stroke="#101010" stroke-width="0.8" stroke-linejoin="round"/>
<polygon points="273.12,164.61 282.21,162.82 287.44,171.43 278.35,173.22" fill="#ecff00" stroke="#101010" stroke-width="0.8" stroke-linejoin="round"/>
<polygon points="188.57,139.25 197.66,137.46 202.89,146.08 193.80,147.87" fill="#ffc400" stroke="#101010" stroke-width="0.8" stroke-linejoin="round"/>
<polygon points="249.71,157.13 258.80,155.34 264.03,166.40 254.94,168.19" fill="#fffa00" stroke="#101010" stroke-width="0.8" stroke-linejoin="round"/>
<polygon points="165.16,134.22 174.25,132.43 179.48,141.04 170.39,142.83" fill="#ffb300" stroke="#101010" stroke-width="0.8" stroke-linejoin="round"/>
<polygon points="310.85,179.73 319.94,177.94 325.17,190.80 316.08,192.08" fill="#c0ff00" stroke="#101010" stroke-width="0.8" stroke-linejoin="round"/>
<polygon points="226.30,151.28 235.39,149.49 240.62,158.92 231.53,160.71" fill="#ffe600" stroke="#101010" stroke-width="0.8" stroke-linejoin="round"/>
<polygon points="141.75,117.11 150.84,115.32 156.07,136.01 146.98,137.80" fill="#ff7e00" stroke="#101010" stroke-width="0.8" stroke-linejoin="round"/>
<polygon points="287.44,171.43 296.53,169.64 301.76,181.52 292.67,183.31" fill="#dbff00" stroke="#101010" stroke-width="0.8" stroke-linejoin="round"/>
<polygon points="202.89,146.08 211.98,144.29 217.21,153.07 208.12,154.86" fill="#ffd500" stroke="#101010" stroke-width="0.8" stroke-linejoin="round"/>
<polygon points="264.03,166.40 273.12,164.61 278.35,173.22 269.26,175.01" fill="#ecff00" stroke="#101010" stroke-width="0.8" stroke-linejoin="round"/>
<polygon points="179.48,141.04 188.57,139.25 193.80,147.87 184.71,149.66" fill="#ffc400" stroke="#101010" stroke-width="0.8" stroke-linejoin="round"/>
<polygon points="325.17,190.80 334.26,189.01 339.49,203.49 330.40,205.28" fill="#a2ff00" stroke="#101010" stroke-width="0.8" stroke-linejoin="round"/>
<polygon points="240.62,158.92 249.71,157.13 254.94,168.19 245.85,167.53" fill="#fffa00" stroke="#101010" stroke-width="0.8" stroke-linejoin="round"/>
<polygon points="156.07,136.01 165.16,134.22 170.39,142.83 161.30,144.62" fill="#ffb300" stroke="#101010" stroke-width="0.8" stroke-linejoin="round"/>
<polygon points="301.76,181.52 310.85,179.73 316.08,192.08 306.99,193.36" fill="#c0ff00" stroke="#101010" stroke-width="0.8" stroke-linejoin="round"/>
<polygon points="217.21,153.07 226.30,151.28 231.53,160.71 222.44,162.50" fill="#ffe600" stroke="#101010" stroke-width="0.8" stroke-linejoin="round"/>
<polygon points="132.66,122.17 141.75,117.11 146.98,137.80 137.89,139.59" fill="#ff8800" stroke="#101010" stroke-width="0.8" stroke-linejoin="round"/>
<polygon points="278.35,173.22 287.44,171.43 292.67,183.31 283.58,185.10" fill="#dbff00" stroke="#101010" stroke-width="0.8" stroke-linejoin="round"/>
<polygon points="193.80,147.87 202.89,146.08 208.12,154.86 199.03,156.65" fill="#ffd500" stroke="#101010" stroke-width="0.8" stroke-linejoin="round"/>
<polygon points="254.94,168.19 264.03,166.40 269.26,175.01 260.17,176.80" fill="#ecff00" stroke="#101010" stroke-width="0.8" stroke-linejoin="round"/>
<polygon points="170.39,142.83 179.48,141.04 184.71,149.66 175.62,151.45" fill="#ffc400" stroke="#101010" stroke-width="0.8" stroke-linejoin="round"/>
<polygon points="316.08,192.08 325.17,190.80 330.40,205.28 321.31,206.36" fill="#a4ff00" stroke="#101010" stroke-width="0.8" stroke-linejoin="round"/>
<polygon points="231.53,160.71 240.62,158.92 245.85,167.53 236.76,169.32" fill="#fffa00" stroke="#101010" stroke-width="0.8" stroke-linejoin="round"/>
<polygon points="146.98,137.80 156.07,136.01 161.30,144.62 152.21,146.41" fill="#ffb300" stroke="#101010" stroke-width="0.8" stroke-linejoin="round"/>
<polygon points="292.67,183.31 301.76,181.52 306.99,193.36 297.90,194.64" fill="#c0ff00" stroke="#101010" stroke-width="0.8" stroke-linejoin="round"/>
<polygon points="208.12,154.86 217.21,153.07 222.44,162.50 213.35,164.29" fill="#ffe600" stroke="#101010" stroke-width="0.8" stroke-linejoin="round"/>
<polygon points="269.26,175.01 278.35,173.22 283.58,185.10 274.49,186.89" fill="#dbff00" stroke="#101010" stroke-width="0.8" stroke-linejoin="round"/>
<polygon points="184.71,149.66 193.80,147.87 199.03,156.65 189.94,158.44" fill="#ffd500" stroke="#101010" stroke-width="0.8" stroke-linejoin="round"/>
<polygon points="330.40,205.28 339.49,203.49 344.72,219.61 335.63,221.40" fill="#80ff00" stroke="#101010" stroke-width="0.8" stroke-linejoin="round"/>
<polygon points="245.85,167.53 254.94,168.19 260.17,176.80 251.08,178.59" fill="#f3ff00" stroke="#101010" stroke-width="0.8" stroke-linejoin="round"/>
<polygon points="161.30,144.62 170.39,142.83 175.62,151.45 166.53,153.24" fill="#ffc400" stroke="#101010" stroke-width="0.8" stroke-linejoin="round"/>
<polygon points="306.99,193.36 316.08,192.08 321.31,206.36 312.22,207.44" fill="#a5ff00" stroke="#101010" stroke-width="0.8" stroke-linejoin="round"/>
<polygon points="222.44,162.50 231.53,160.71 236.76,169.32 227.67,171.11" fill="#fffa00" stroke="#101010" stroke-width="0.8" stroke-linejoin="round"/>
<polygon points="137.89,139.59 146.98,137.80 152.21,146.41 143.12,148.20" fill="#ffb300" stroke="#101010" stroke-width="0.8" stroke-linejoin="round"/>
<polygon points="283.58,185.10 292.67,183.31 297.90,194.64 288.81,195.92" fill="#c0ff00" stroke="#101010" stroke-width="0.8" stroke-linejoin="round"/>
<polygon points="199.03,156.65 208.12,154.86 213.35,164.29 204.26,166.08" fill="#ffe600" stroke="#101010" stroke-width="0.8" stroke-linejoin="round"/>
<polygon points="260.17,176.80 269.26,175.01 274.49,186.89 265.40,188.68" fill="#dbff00" stroke="#101010" stroke-width="0.8" stroke-linejoin="round"/>
<polygon points="175.62,151.45 184.71,149.66 189.94,158.44 180.85,157.78" fill="#ffd500" stroke="#101010" stroke-width="0.8" stroke-linejoin="round"/>
<polygon points="321.31,206.36 330.40,205.28 335.63,221.40 326.54,222.33" fill="#82ff00" stroke="#101010" stroke-width="0.8" stroke-linejoin="round"/>
<polygon points="236.76,169.32 245.85,167.53 251.08,178.59 241.99,180.38" fill="#f3ff00" stroke="#101010" stroke-width="0.8" stroke-linejoin="round"/>
<polygon points="152.21,146.41 161.30,144.62 166.53,153.24 157.44,155.03" fill="#ffc400" stroke="#101010" stroke-width="0.8" stroke-linejoin="round"/>
<polygon points="297.90,194.64 306.99,193.36 312.22,207.44 303.13,208.51" fill="#a7ff00" stroke="#101010" stroke-width="0.8" stroke-linejoin="round"/>
<polygon points="213.35,164.29 222.44,162.50 227.67,171.11 218.58,172.90" fill="#fffa00" stroke="#101010" stroke-width="0.8" stroke-linejoin="round"/>
<polygon points="274.49,186.89 283.58,185.10 288.81,195.92 279.72,197.20" fill="#c0ff00" stroke="#101010" stroke-width="0.8" stroke-linejoin="round"/>
<polygon points="189.94,158.44 199.03,156.65 204.26,166.08 195.17,167.87" fill="#ffe600" stroke="#101010" stroke-width="0.8" stroke-linejoin="round"/>
<polygon points="335.63,221.40 344.72,219.61 349.95,234.91 340.86,236.70" fill="#58ff00" stroke="#101010" stroke-width="0.8" stroke-linejoin="round"/>
<polygon points="251.08,178.59 260.17,176.80 265.40,188.68 256.31,187.37" fill="#dbff00" stroke="#101010" stroke-width="0.8" stroke-linejoin="round"/>
<polygon points="166.53,153.24 175.62,151.45 180.85,157.78 171.76,159.57" fill="#ffd500" stroke="#101010" stroke-width="0.8" stroke-linejoin="round"/>
<polygon points="312.22,207.44 321.31,206.36 326.54,222.33 317.45,223.25" fill="#84ff00" stroke="#101010" stroke-width="0.8" stroke-linejoin="round"/>
<polygon points="227.67,171.11 236.76,169.32 241.99,180.38 232.90,182.17" fill="#f3ff00" stroke="#101010" stroke-width="0.8" stroke-linejoin="round"/>
<polygon points="143.12,148.20 152.21,146.41 157.44,155.03 148.35,156.82" fill="#ffc400" stroke="#101010" stroke-width="0.8" stroke-linejoin="round"/>
<polygon points="288.81,195.92 297.90,194.64 303.13,208.51 294.04,209.59" fill="#a9ff00" stroke="#101010" stroke-width="0.8" stroke-linejoin="round"/>
<polygon points="204.26,166.08 213.35,164.29 218.58,172.90 209.49,174.69" fill="#fffa00" stroke="#101010" stroke-width="0.8" stroke-linejoin="round"/>
<polygon points="265.40,188.68 274.49,186.89 279.72,197.20 270.63,198.48" fill="#c0ff00" stroke="#101010" stroke-width="0.8" stroke-linejoin="round"/>
<polygon points="180.85,157.78 189.94,158.44 195.17,167.87 186.08,166.40" fill="#ffdf00" stroke="#101010" stroke-width="0.8" stroke-linejoin="round"/>
<polygon points="326.54,222.33 335.63,221.40 340.86,236.70 331.77,237.63" fill="#5bff00" stroke="#101010" stroke-width="0.8" stroke-linejoin="round"/>
<polygon points="241.99,180.38 251.08,178.59 256.31,187.37 247.22,189.16" fill="#dbff00" stroke="#101010" stroke-width="0.8" stroke-linejoin="round"/>
<polygon points="157.44,155.03 166.53,153.24 171.76,159.57 162.67,161.36" fill="#ffd500" stroke="#101010" stroke-width="0.8" stroke-linejoin="round"/>
<polygon points="303.13,208.51 312.22,207.44 317.45,223.25 308.36,224.17" fill="#86ff00" stroke="#101010" stroke-width="0.8" stroke-linejoin="round"/>
<polygon points="218.58,172.90 227.67,171.11 232.90,182.17 223.81,183.96" fill="#f3ff00" stroke="#101010" stroke-width="0.8" stroke-linejoin="round"/>
<polygon points="279.72,197.20 288.81,195.92 294.04,209.59 284.95,210.67" fill="#aaff00" stroke="#101010" stroke-width="0.8" stroke-linejoin="round"/>
<polygon points="195.17,167.87 204.26,166.08 209.49,174.69 200.40,176.48" fill="#fffa00" stroke="#101010" stroke-width="0.8" stroke-linejoin="round"/>
<polygon points="340.86,236.70 349.95,234.91 355.18,253.48 346.09,255.27" fill="#33ff00" stroke="#101010" stroke-width="0.8" stroke-linejoin="round"/>
<polygon points="256.31,187.37 265.40,188.68 270.63,198.48 261.54,199.76" fill="#caff00" stroke="#101010" stroke-width="0.8" stroke-linejoin="round"/>
<polygon points="171.76,159.57 180.85,157.78 186.08,166.40 176.99,168.19" fill="#ffdf00" stroke="#101010" stroke-width="0.8" stroke-linejoin="round"/>
<polygon points="317.45,223.25 326.54,222.33 331.77,237.63 322.68,238.55" fill="#5dff00" stroke="#101010" stroke-width="0.8" stroke-linejoin="round"/>
<polygon points="232.90,182.17 241.99,180.38 247.22,189.16 238.13,190.95" fill="#dbff00" stroke="#101010" stroke-width="0.8" stroke-linejoin="round"/>
<polygon points="148.35,156.82 157.44,155.03 162.67,161.36 153.58,163.15" fill="#ffd500" stroke="#101010" stroke-width="0.8" stroke-linejoin="round"/>
<polygon points="294.04,209.59 303.13,208.51 308.36,224.17 299.27,225.10" fill="#88ff00" stroke="#101010" stroke-width="0.8" stroke-linejoin="round"/>
<polygon points="209.49,174.69 218.58,172.90 223.81,183.96 214.72,185.75" fill="#f3ff00" stroke="#101010" stroke-width="0.8" stroke-linejoin="round"/>
<polygon points="270.63,198.48 279.72,197.20 284.95,210.67 275.86,211.74" fill="#acff00" stroke="#101010" stroke-width="0.8" stroke-linejoin="round"/>
<polygon points="186.08,166.40 195.17,167.87 200.40,176.48 191.31,178.27" fill="#fff000" stroke="#101010" stroke-width="0.8" stroke-linejoin="round"/>
<polygon points="331.77,237.63 340.86,236.70 346.09,255.27 337.00,256.34" fill="#35ff00" stroke="#101010" stroke-width="0.8" stroke-linejoin="round"/>
<polygon points="247.22,189.16 256.31,187.37 261.54,199.76 252.45,201.04" fill="#caff00" stroke="#101010" stroke-width="0.8" stroke-linejoin="round"/>
<polygon points="162.67,161.36 171.76,159.57 176.99,168.19 167.90,173.24" fill="#ffdf00" stroke="#101010" stroke-width="0.8" stroke-linejoin="round"/>
<polygon points="308.36,224.17 317.45,223.25 322.68,238.55 313.59,239.47" fill="#60ff00" stroke="#101010" stroke-width="0.8" stroke-linejoin="round"/>
<polygon points="223.81,183.96 232.90,182.17 238.13,190.95 229.04,192.74" fill="#dbff00" stroke="#101010" stroke-width="0.8" stroke-linejoin="round"/>
<polygon points="284.95,210.67 294.04,209.59 299.27,225.10 290.18,226.02" fill="#8aff00" stroke="#101010" stroke-width="0.8" stroke-linejoin="round"/>
<polygon points="200.40,176.48 209.49,174.69 214.72,185.75 205.63,185.26" fill="#f3ff00" stroke="#101010" stroke-width="0.8" stroke-linejoin="round"/>
<polygon points="346.09,255.27 355.18,253.48 360.41,257.69 351.32,259.48" fill="#03ff00" stroke="#101010" stroke-width="0.8" stroke-linejoin="round"/>
<polygon points="261.54,199.76 270.63,198.48 275.86,211.74 266.77,212.82" fill="#adff00" stroke="#101010" stroke-width="0.8" stroke-linejoin="round"/>
<polygon points="176.99,168.19 186.08,166.40 191.31,178.27 182.22,176.96" fill="#fff000" stroke="#101010" stroke-width="0.8" stroke-linejoin="round"/>
<polygon points="322.68,238.55 331.77,237.63 337.00,256.34 327.91,257.42" fill="#38ff00" stroke="#101010" stroke-width="0.8" stroke-linejoin="round"/>
<polygon points="238.13,190.95 247.22,189.16 252.45,201.04 243.36,202.32" fill="#caff00" stroke="#101010" stroke-width="0.8" stroke-linejoin="round"/>
<polygon points="153.58,163.15 162.67,161.36 167.90,173.24 158.81,171.77" fill="#ffdf00" stroke="#101010" stroke-width="0.8" stroke-linejoin="round"/>
<polygon points="299.27,225.10 308.36,224.17 313.59,239.47 304.50,240.40" fill="#62ff00" stroke="#101010" stroke-width="0.8" stroke-linejoin="round"/>
<polygon points="214.72,185.75 223.81,183.96 229.04,192.74 219.95,194.53" fill="#dbff00" stroke="#101010" stroke-width="0.8" stroke-linejoin="round"/>
<polygon points="275.86,211.74 284.95,210.67 290.18,226.02 281.09,226.94" fill="#8dff00" stroke="#101010" stroke-width="0.8" stroke-linejoin="round"/>
<polygon points="191.31,178.27 200.40,176.48 205.63,185.26 196.54,187.05" fill="#f3ff00" stroke="#101010" stroke-width="0.8" stroke-linejoin="round"/>
<polygon points="337.00,256.34 346.09,255.27 351.32,259.48 342.23,260.78" fill="#06ff00" stroke="#101010" stroke-width="0.8" stroke-linejoin="round"/>
<polygon points="252.45,201.04 261.54,199.76 266.77,212.82 257.68,213.90" fill="#afff00" stroke="#101010" stroke-width="0.8" stroke-linejoin="round"/>
<polygon points="167.90,173.24 176.99,168.19 182.22,176.96 173.13,181.85" fill="#fffa00" stroke="#101010" stroke-width="0.8" stroke-linejoin="round"/>
<polygon points="313.59,239.47 322.68,238.55 327.91,257.42 318.82,258.50" fill="#3bff00" stroke="#101010" stroke-width="0.8" stroke-linejoin="round"/>
<polygon points="229.04,192.74 238.13,190.95 243.36,202.32 234.27,203.60" fill="#caff00" stroke="#101010" stroke-width="0.8" stroke-linejoin="round"/>
<polygon points="290.18,226.02 299.27,225.10 304.50,240.40 295.41,241.32" fill="#65ff00" stroke="#101010" stroke-width="0.8" stroke-linejoin="round"/>
<polygon points="205.63,185.26 214.72,185.75 219.95,194.53 210.86,196.32" fill="#e2ff00" stroke="#101010" stroke-width="0.8" stroke-linejoin="round"/>
<polygon points="351.32,259.48 360.41,257.69 365.64,260.76 356.55,262.55" fill="#00ff00" stroke="#101010" stroke-width="0.8" stroke-linejoin="round"/>
<polygon points="266.77,212.82 275.86,211.74 281.09,226.94 272.00,227.87" fill="#8fff00" stroke="#101010" stroke-width="0.8" stroke-linejoin="round"/>
<polygon points="182.22,176.96 191.31,178.27 196.54,187.05 187.45,188.84" fill="#fdff00" stroke="#101010" stroke-width="0.8" stroke-linejoin="round"/>
<polygon points="327.91,257.42 337.00,256.34 342.23,260.78 333.14,262.08" fill="#08ff00" stroke="#101010" stroke-width="0.8" stroke-linejoin="round"/>
<polygon points="243.36,202.32 252.45,201.04 257.68,213.90 248.59,214.97" fill="#b0ff00" stroke="#101010" stroke-width="0.8" stroke-linejoin="round"/>
<polygon points="158.81,171.77 167.90,173.24 173.13,181.85 164.04,183.64" fill="#fff000" stroke="#101010" stroke-width="0.8" stroke-linejoin="round"/>
<polygon points="304.50,240.40 313.59,239.47 318.82,258.50 309.73,259.57" fill="#3dff00" stroke="#101010" stroke-width="0.8" stroke-linejoin="round"/>
<polygon points="219.95,194.53 229.04,192.74 234.27,203.60 225.18,204.88" fill="#caff00" stroke="#101010" stroke-width="0.8" stroke-linejoin="round"/>
<polygon points="281.09,226.94 290.18,226.02 295.41,241.32 286.32,242.25" fill="#68ff00" stroke="#101010" stroke-width="0.8" stroke-linejoin="round"/>
<polygon points="196.54,187.05 205.63,185.26 210.86,196.32 201.77,194.85" fill="#e2ff00" stroke="#101010" stroke-width="0.8" stroke-linejoin="round"/>
<polygon points="342.23,260.78 351.32,259.48 356.55,262.55 347.46,263.85" fill="#01ff00" stroke="#101010" stroke-width="0.8" stroke-linejoin="round"/>
<polygon points="257.68,213.90 266.77,212.82 272.00,227.87 262.91,228.79" fill="#91ff00" stroke="#101010" stroke-width="0.8" stroke-linejoin="round"/>
<polygon points="173.13,181.85 182.22,176.96 187.45,188.84 178.36,190.63" fill="#f3ff00" stroke="#101010" stroke-width="0.8" stroke-linejoin="round"/>
<polygon points="318.82,258.50 327.91,257.42 333.14,262.08 324.05,263.38" fill="#0aff00" stroke="#101010" stroke-width="0.8" stroke-linejoin="round"/>
<polygon points="234.27,203.60 243.36,202.32 248.59,214.97 239.50,216.05" fill="#b2ff00" stroke="#101010" stroke-width="0.8" stroke-linejoin="round"/>
<polygon points="295.41,241.32 304.50,240.40 309.73,259.57 300.64,260.65" fill="#40ff00" stroke="#101010" stroke-width="0.8" stroke-linejoin="round"/>
<polygon points="210.86,196.32 219.95,194.53 225.18,204.88 216.09,206.16" fill="#caff00" stroke="#101010" stroke-width="0.8" stroke-linejoin="round"/>
<polygon points="272.00,227.87 281.09,226.94 286.32,242.25 277.23,243.17" fill="#6aff00" stroke="#101010" stroke-width="0.8" stroke-linejoin="round"/>
<polygon points="187.45,188.84 196.54,187.05 201.77,194.85 192.68,196.64" fill="#e2ff00" stroke="#101010" stroke-width="0.8" stroke-linejoin="round"/>
<polygon points="333.14,262.08 342.23,260.78 347.46,263.85 338.37,265.15" fill="#03ff00" stroke="#101010" stroke-width="0.8" stroke-linejoin="round"/>
<polygon points="248.59,214.97 257.68,213.90 262.91,228.79 253.82,229.71" fill="#93ff00" stroke="#101010" stroke-width="0.8" stroke-linejoin="round"/>
<polygon points="164.04,183.64 173.13,181.85 178.36,190.63 169.27,192.42" fill="#f3ff00" stroke="#101010" stroke-width="0.8" stroke-linejoin="round"/>
<polygon points="309.73,259.57 318.82,258.50 324.05,263.38 314.96,264.68" fill="#0cff00" stroke="#101010" stroke-width="0.8" stroke-linejoin="round"/>
<polygon points="225.18,204.88 234.27,203.60 239.50,216.05 230.41,217.13" fill="#b3ff00" stroke="#101010" stroke-width="0.8" stroke-linejoin="round"/>
<polygon points="286.32,242.25 295.41,241.32 300.64,260.65 291.55,261.73" fill="#42ff00" stroke="#101010" stroke-width="0.8" stroke-linejoin="round"/>
<polygon points="201.77,194.85 210.86,196.32 216.09,206.16 207.00,207.44" fill="#d4ff00" stroke="#101010" stroke-width="0.8" stroke-linejoin="round"/>
<polygon points="262.91,228.79 272.00,227.87 277.23,243.17 268.14,244.09" fill="#6dff00" stroke="#101010" stroke-width="0.8" stroke-linejoin="round"/>
<polygon points="178.36,190.63 187.45,188.84 192.68,196.64 183.59,198.43" fill="#e2ff00" stroke="#101010" stroke-width="0.8" stroke-linejoin="round"/>
<polygon points="324.05,263.38 333.14,262.08 338.37,265.15 329.28,266.45" fill="#04ff00" stroke="#101010" stroke-width="0.8" stroke-linejoin="round"/>
<polygon points="239.50,216.05 248.59,214.97 253.82,229.71 244.73,230.64" fill="#95ff00" stroke="#101010" stroke-width="0.8" stroke-linejoin="round"/>
<polygon points="300.64,260.65 309.73,259.57 314.96,264.68 305.87,265.98" fill="#0eff00" stroke="#101010" stroke-width="0.8" stroke-linejoin="round"/>
<polygon points="216.09,206.16 225.18,204.88 230.41,217.13 221.32,218.20" fill="#b5ff00" stroke="#101010" stroke-width="0.8" stroke-linejoin="round"/>
<polygon points="277.23,243.17 286.32,242.25 291.55,261.73 282.46,262.80" fill="#45ff00" stroke="#101010" stroke-width="0.8" stroke-linejoin="round"/>
<polygon points="192.68,196.64 201.77,194.85 207.00,207.44 197.91,208.72" fill="#d4ff00" stroke="#101010" stroke-width="0.8" stroke-linejoin="round"/>
<polygon points="253.82,229.71 262.91,228.79 268.14,244.09 259.05,245.02" fill="#70ff00" stroke="#101010" stroke-width="0.8" stroke-linejoin="round"/>
<polygon points="169.27,192.42 178.36,190.63 183.59,198.43 174.50,200.22" fill="#e2ff00" stroke="#101010" stroke-width="0.8" stroke-linejoin="round"/>
<polygon points="314.96,264.68 324.05,263.38 329.28,266.45 320.19,267.75" fill="#06ff00" stroke="#101010" stroke-width="0.8" stroke-linejoin="round"/>
<polygon points="230.41,217.13 239.50,216.05 244.73,230.64 235.64,231.56" fill="#98ff00" stroke="#101010" stroke-width="0.8" stroke-linejoin="round"/>
<polygon points="291.55,261.73 300.64,260.65 305.87,265.98 296.78,267.28" fill="#11ff00" stroke="#101010" stroke-width="0.8" stroke-linejoin="round"/>
<polygon points="207.00,207.44 216.09,206.16 221.32,218.20 212.23,219.28" fill="#b7ff00" stroke="#101010" stroke-width="0.8" stroke-linejoin="round"/>
<polygon points="268.14,244.09 277.23,243.17 282.46,262.80 273.37,263.88" fill="#48ff00" stroke="#101010" stroke-width="0.8" stroke-linejoin="round"/>
<polygon points="183.59,198.43 192.68,196.64 197.91,208.72 188.82,210.00" fill="#d4ff00" stroke="#101010" stroke-width="0.8" stroke-linejoin="round"/>
<polygon points="244.73,230.64 253.82,229.71 259.05,245.02 249.96,245.94" fill="#72ff00" stroke="#101010" stroke-width="0.8" stroke-linejoin="round"/>
<polygon points="305.87,265.98 314.96,264.68 320.19,267.75 311.10,269.05" fill="#07ff00" stroke="#101010" stroke-width="0.8" stroke-linejoin="round"/>
<polygon points="221.32,218.20 230.41,217.13 235.64,231.56 226.55,232.48" fill="#9aff00" stroke="#101010" stroke-width="0.8" stroke-linejoin="round"/>
<polygon points="282.46,262.80 291.55,261.73 296.78,267.28 287.69,268.58" fill="#13ff00" stroke="#101010" stroke-width="0.8" stroke-linejoin="round"/>
<polygon points="197.91,208.72 207.00,207.44 212.23,219.28 203.14,220.35" fill="#b8ff00" stroke="#101010" stroke-width="0.8" stroke-linejoin="round"/>
<polygon points="259.05,245.02 268.14,244.09 273.37,263.88 264.28,264.96" fill="#4aff00" stroke="#101010" stroke-width="0.8" stroke-linejoin="round"/>
<polygon points="174.50,200.22 183.59,198.43 188.82,210.00 179.73,211.28" fill="#d4ff00" stroke="#101010" stroke-width="0.8" stroke-linejoin="round"/>
<polygon points="235.64,231.56 244.73,230.64 249.96,245.94 240.87,246.86" fill="#75ff00" stroke="#101010" stroke-width="0.8" stroke-linejoin="round"/>
<polygon points="296.78,267.28 305.87,265.98 311.10,269.05 302.01,270.35" fill="#09ff00" stroke="#101010" stroke-width="0.8" stroke-linejoin="round"/>
<polygon points="212.23,219.28 221.32,218.20 226.55,232.48 217.46,233.41" fill="#9cff00" stroke="#101010" stroke-width="0.8" stroke-linejoin="round"/>
<polygon points="273.37,263.88 282.46,262.80 287.69,268.58 278.60,269.89" fill="#15ff00" stroke="#101010" stroke-width="0.8" stroke-linejoin="round"/>
<polygon points="188.82,210.00 197.91,208.72 203.14,220.35 194.05,221.43" fill="#baff00" stroke="#101010" stroke-width="0.8" stroke-linejoin="round"/>
<polygon points="249.96,245.94 259.05,245.02 264.28,264.96 255.19,266.03" fill="#4dff00" stroke="#101010" stroke-width="0.8" stroke-linejoin="round"/>
<polygon points="226.55,232.48 235.64,231.56 240.87,246.86 231.78,247.79" fill="#78ff00" stroke="#101010" stroke-width="0.8" stroke-linejoin="round"/>
<polygon points="287.69,268.58 296.78,267.28 302.01,270.35 292.92,271.65" fill="#0aff00" stroke="#101010" stroke-width="0.8" stroke-linejoin="round"/>
<polygon points="203.14,220.35 212.23,219.28 217.46,233.41 208.37,234.33" fill="#9eff00" stroke="#101010" stroke-width="0.8" stroke-linejoin="round"/>
<polygon points="264.28,264.96 273.37,263.88 278.60,269.89 269.51,271.19" fill="#17ff00" stroke="#101010" stroke-width="0.8" stroke-linejoin="round"/>
<polygon points="179.73,211.28 188.82,210.00 194.05,221.43 184.96,222.51" fill="#bbff00" stroke="#101010" stroke-width="0.8" stroke-linejoin="round"/>
<polygon points="240.87,246.86 249.96,245.94 255.19,266.03 246.10,267.11" fill="#50ff00" stroke="#101010" stroke-width="0.8" stroke-linejoin="round"/>
<polygon points="217.46,233.41 226.55,232.48 231.78,247.79 222.69,248.71" fill="#7aff00" stroke="#101010" stroke-width="0.8" stroke-linejoin="round"/>
<polygon points="278.60,269.89 287.69,268.58 292.92,271.65 283.83,272.96" fill="#0cff00" stroke="#101010" stroke-width="0.8" stroke-linejoin="round"/>
<polygon points="194.05,221.43 203.14,220.35 208.37,234.33 199.28,235.26" fill="#a0ff00" stroke="#101010" stroke-width="0.8" stroke-linejoin="round"/>
<polygon points="255.19,266.03 264.28,264.96 269.51,271.19 260.42,272.16" fill="#19ff00" stroke="#101010" stroke-width="0.8" stroke-linejoin="round"/>
<polygon points="231.78,247.79 240.87,246.86 246.10,267.11 237.01,268.19" fill="#52ff00" stroke="#101010" stroke-width="0.8" stroke-linejoin="round"/>
<polygon points="208.37,234.33 217.46,233.41 222.69,248.71 213.60,249.63" fill="#7dff00" stroke="#101010" stroke-width="0.8" stroke-linejoin="round"/>
<polygon points="269.51,271.19 278.60,269.89 283.83,272.96 274.74,274.26" fill="#0dff00" stroke="#101010" stroke-width="0.8" stroke-linejoin="round"/>
<polygon points="184.96,222.51 194.05,221.43 199.28,235.26 190.19,236.18" fill="#a2ff00" stroke="#101010" stroke-width="0.8" stroke-linejoin="round"/>
<polygon points="246.10,267.11 255.19,266.03 260.42,272.16 251.33,272.32" fill="#1bff00" stroke="#101010" stroke-width="0.8" stroke-linejoin="round"/>
<polygon points="222.69,248.71 231.78,247.79 237.01,268.19 227.92,265.49" fill="#55ff00" stroke="#101010" stroke-width="0.8" stroke-linejoin="round"/>
<polygon points="199.28,235.26 208.37,234.33 213.60,249.63 204.51,250.56" fill="#7fff00" stroke="#101010" stroke-width="0.8" stroke-linejoin="round"/>
<polygon points="260.42,272.16 269.51,271.19 274.74,274.26 265.65,275.23" fill="#10ff00" stroke="#101010" stroke-width="0.8" stroke-linejoin="round"/>
<polygon points="237.01,268.19 246.10,267.11 251.33,272.32 242.24,271.66" fill="#1eff00" stroke="#101010" stroke-width="0.8" stroke-linejoin="round"/>
<polygon points="213.60,249.63 222.69,248.71 227.92,265.49 218.83,264.02" fill="#58ff00" stroke="#101010" stroke-width="0.8" stroke-linejoin="round"/>
<polygon points="190.19,236.18 199.28,235.26 204.51,250.56 195.42,251.48" fill="#82ff00" stroke="#101010" stroke-width="0.8" stroke-linejoin="round"/>
<polygon points="251.33,272.32 260.42,272.16 265.65,275.23 256.56,275.39" fill="#15ff00" stroke="#101010" stroke-width="0.8" stroke-linejoin="round"/>
<polygon points="227.92,265.49 237.01,268.19 242.24,271.66 233.15,270.19" fill="#2bff00" stroke="#101010" stroke-width="0.8" stroke-linejoin="round"/>
<polygon points="204.51,250.56 213.60,249.63 218.83,264.02 209.74,270.70" fill="#5aff00" stroke="#101010" stroke-width="0.8" stroke-linejoin="round"/>
<polygon points="242.24,271.66 251.33,272.32 256.56,275.39 247.47,274.73" fill="#1cff00" stroke="#101010" stroke-width="0.8" stroke-linejoin="round"/>
<polygon points="218.83,264.02 227.92,265.49 233.15,270.19 224.06,268.72" fill="#35ff00" stroke="#101010" stroke-width="0.8" stroke-linejoin="round"/>
<polygon points="195.42,251.48 204.51,250.56 209.74,270.70 200.65,272.49" fill="#5dff00" stroke="#101010" stroke-width="0.8" stroke-linejoin="round"/>
<polygon points="233.15,270.19 242.24,271.66 247.47,274.73 238.38,273.26" fill="#26ff00" stroke="#101010" stroke-width="0.8" stroke-linejoin="round"/>
<polygon points="209.74,270.70 218.83,264.02 224.06,268.72 214.97,275.40" fill="#26ff00" stroke="#101010" stroke-width="0.8" stroke-linejoin="round"/>
<polygon points="224.06,268.72 233.15,270.19 238.38,273.26 229.29,271.79" fill="#30ff00" stroke="#101010" stroke-width="0.8" stroke-linejoin="round"/>
<polygon points="200.65,272.49 209.74,270.70 214.97,275.40 205.88,277.19" fill="#26ff00" stroke="#101010" stroke-width="0.8" stroke-linejoin="round"/>
<polygon points="214.97,275.40 224.06,268.72 229.29,271.79 220.20,278.47" fill="#21ff00" stroke="#101010" stroke-width="0.8" stroke-linejoin="round"/>
<polygon points="205.88,277.19 214.97,275.40 220.20,278.47 211.11,280.26" fill="#21ff00" stroke="#101010" stroke-width="0.8" stroke-linejoin="round"/>
<polyline points="122.20,239.00 122.20,71.50" stroke="#6a6a6a" stroke-width="1" fill="none"/>
<polyline points="276.73,41.07 365.64,93.26 365.64,260.76" stroke="#6a6a6a" stroke-width="1" fill="none"/>
<polyline points="122.20,71.50 211.11,123.69 365.64,93.26" stroke="#6a6a6a" stroke-width="0.8" fill="none" opacity="0.9"/>
<polyline points="211.11,123.69 211.11,291.19" stroke="#6a6a6a" stroke-width="0.8" fill="none" opacity="0.9"/>
<polyline points="122.20,239.00 211.11,291.19 365.64,260.76" stroke="#8a8a96" stroke-width="1" fill="none"/>
<line x1="365.64" y1="117.72" x2="370.64" y2="117.72" stroke="#404040" stroke-width="1"/>
<text x="373.14" y="120.82" font-family='"Liberation Sans", sans-serif' font-size="6.8" fill="#303030">1.000</text>
<line x1="365.64" y1="150.34" x2="370.64" y2="150.34" stroke="#404040" stroke-width="1"/>
<text x="373.14" y="153.44" font-family='"Liberation Sans", sans-serif' font-size="6.8" fill="#303030">0.800</text>
<line x1="365.64" y1="182.96" x2="370.64" y2="182.96" stroke="#404040" stroke-width="1"/>
<text x="373.14" y="186.06" font-family='"Liberation Sans", sans-serif' font-size="6.8" fill="#303030">0.600</text>
<line x1="365.64" y1="215.58" x2="370.64" y2="215.58" stroke="#404040" stroke-width="1"/>
<text x="373.14" y="218.68" font-family='"Liberation Sans", sans-serif' font-size="6.8" fill="#303030">0.400</text>
<line x1="365.64" y1="248.20" x2="370.64" y2="248.20" stroke="#404040" stroke-width="1"/>
<text x="373.14" y="251.30" font-family='"Liberation Sans", sans-serif' font-size="6.8" fill="#303030">0.200</text>
<line x1="122.20" y1="239.00" x2="122.20" y2="243.50" stroke="#ff4040" stroke-width="1"/>
<text x="122.20" y="251.10" text-anchor="end" font-family='"Liberation Sans", sans-serif' font-size="6.8" fill="#ff3c3c">0.0</text>
<line x1="148.35" y1="254.35" x2="148.35" y2="258.85" stroke="#ff4040" stroke-width="1"/>
<text x="148.35" y="266.45" text-anchor="end" font-family='"Liberation Sans", sans-serif' font-size="6.8" fill="#ff3c3c">30.0</text>
<line x1="174.50" y1="269.70" x2="174.50" y2="274.20" stroke="#ff4040" stroke-width="1"/>
<text x="174.50" y="281.80" text-anchor="end" font-family='"Liberation Sans", sans-serif' font-size="6.8" fill="#ff3c3c">60.0</text>
<line x1="200.65" y1="285.05" x2="200.65" y2="289.55" stroke="#ff4040" stroke-width="1"/>
<text x="200.65" y="297.15" text-anchor="end" font-family='"Liberation Sans", sans-serif' font-size="6.8" fill="#ff3c3c">90.0</text>
<text x="193.4" y="289.8" text-anchor="end" font-family='"Liberation Sans", sans-serif' font-size="6.8" fill="#ff3c3c">Torque Signal Pressure PSI</text>
<line x1="211.11" y1="291.69" x2="211.11" y2="296.19" stroke="#4040ff" stroke-width="1"/>
<text x="208.81" y="303.69" font-family='"Liberation Sans", sans-serif' font-size="6.8" fill="#3c3cff">-42</text>
<line x1="256.56" y1="282.74" x2="256.56" y2="287.24" stroke="#4040ff" stroke-width="1"/>
<text x="254.26" y="294.74" font-family='"Liberation Sans", sans-serif' font-size="6.8" fill="#3c3cff">68</text>
<line x1="302.01" y1="273.79" x2="302.01" y2="278.29" stroke="#4040ff" stroke-width="1"/>
<text x="299.71" y="285.79" font-family='"Liberation Sans", sans-serif' font-size="6.8" fill="#3c3cff">176</text>
<line x1="347.46" y1="264.84" x2="347.46" y2="269.34" stroke="#4040ff" stroke-width="1"/>
<text x="345.16" y="276.84" font-family='"Liberation Sans", sans-serif' font-size="6.8" fill="#3c3cff">284</text>
<text x="282.7" y="304.6" font-family='"Liberation Sans", sans-serif' font-size="6.8" fill="#3c3cff">TFT °F</text>
</svg>
<div class="ct" style="left:12.3px;top:6.5px;color:#ff2a2a">Torque Signal Pressure PSI (36.0)</div>
<div class="ct" style="left:12.3px;top:16.7px;color:#3030ff">TFT °F (284)</div>
<div class="ct" style="left:192.7px;top:6.3px;color:#b4b4b4">Rotate using right mouse button</div>
<div class="ct" style="right:297px;top:6.3px;color:#202020;text-align:right">Data: 0.667 amps</div>
<div class="ct" style="right:297px;top:16.5px;color:#202020;text-align:right">Min: 0.123</div>
<div class="ct" style="right:297px;top:26.9px;color:#202020;text-align:right">Max: 1.150</div>
<div style="position:absolute;left:10px;top:278.1px;width:11px;height:47px;border:1px solid #303030;background:linear-gradient(#ff0000,#ffff00 50%,#00ff00)"></div>
<div class="ct" style="left:26.2px;top:278.5px;color:#303030">High</div>
<div class="ct" style="left:26.2px;top:299px;color:#303030">Med</div>
<div class="ct" style="left:26.2px;top:319.6px;color:#303030">Low</div>
</div></div>
<div style="position:absolute;left:480px;top:2px;width:13px;height:327px;background:#f0f0f0"></div>
<div style="position:absolute;left:480.8px;top:3.2px;width:10px;height:12.4px;background:#dedede;border-bottom:1px solid #c2c2c2;box-sizing:border-box"></div>
<div style="position:absolute;left:480.8px;top:2.9px;width:10px;height:12px;font-weight:bold;font-size:11.2px;line-height:12px;color:#101010;text-align:center">?</div>
<svg style="position:absolute;left:482px;top:18px" width="9" height="6"><polyline points="2,4.5 4.5,2 7,4.5" stroke="#404040" stroke-width="1.3" fill="none"/></svg>
<div style="position:absolute;left:481.3px;top:212px;width:9.5px;height:10.7px;background:#cdcdcd"></div>
<svg style="position:absolute;left:481.5px;top:309px" width="9" height="6"><polyline points="2,1.5 4.5,4 7,1.5" stroke="#404040" stroke-width="1.3" fill="none"/></svg>
<div style="position:absolute;left:481px;top:318px;width:9.7px;height:11px;background:#dcdcdc;border:1px solid #c4c4c4;box-sizing:border-box"></div>
<svg style="position:absolute;left:481px;top:318px" width="10" height="11"><circle cx="4.6" cy="4.8" r="2.6" fill="#20d8e8" stroke="#104050" stroke-width="1"/><line x1="6.4" y1="6.6" x2="8.5" y2="8.8" stroke="#101010" stroke-width="1.6"/></svg>
<div style="position:absolute;left:493px;top:2px;width:1px;height:327px;background:#a8a8a8"></div>
<div style="position:absolute;left:494px;top:2px;width:277px;height:327px;background:#f0f0f0"></div>
<div style="position:absolute;left:480px;top:1.2px;width:291px;height:0.9px;background:#b4b4b4"></div>
<div class="ui" style="left:496.4px;top:7.0px">Units:</div>
<div class="ui" style="left:588.8px;top:7.0px">Minimum:</div>
<div class="ui" style="left:645.3px;top:7.0px">Maximum:</div>
<div class="box" style="left:496.1px;top:18.7px;width:90.4px;height:14.7px"><span>amps</span></div>
<div class="box" style="left:588.8px;top:18.7px;width:54.2px;height:14.7px"><span>0.000</span></div>
<div class="box" style="left:645.3px;top:18.7px;width:54.4px;height:14.7px"><span>1.250</span></div>
<div class="box" style="left:588.8px;top:38px;width:54.2px;height:15.3px"><span>0.000</span></div>
<div class="box" style="left:645.3px;top:38px;width:54.4px;height:15.3px"><span>1.250</span></div>
<div class="ui" style="left:701.7px;top:20.8px">EFILive limits.</div>
<div class="ui" style="left:701.7px;top:40.3px">Controller limits.</div>
<div style="position:absolute;left:494px;top:71px;width:274px;height:257px;background:#ffffff;border:1px solid #dadada;box-sizing:border-box"></div>
<div class="tab" style="left:545px;top:58.2px;width:33px;height:12.8px">RTACS</div>
<div class="tab" style="left:578px;top:58.2px;width:47.6px;height:12.8px">User notes</div>
<div class="tab" style="left:493.8px;top:57.2px;width:51.4px;height:14.8px;background:#fff;border-bottom:none;line-height:12.4px">Description</div>
<div class="ui" style="left:497.3px;top:74.50px">This table controls the current flow required by the pressure control</div>
<div class="ui" style="left:497.3px;top:84.76px">solenoid (or force motor), to achieve the desired torque signal pressure,</div>
<div class="ui" style="left:497.3px;top:95.02px">when the torque signal pressure is increasing.</div>
<div class="ui" style="left:497.3px;top:105.28px">The table values are the amount of current (Amps) required.</div>
<div class="ui" style="left:497.3px;top:125.80px">The pressure control solenoid (or force motor) is controlled by the PCM</div>
<div class="ui" style="left:497.3px;top:136.06px">by varying the current flow to the solenoid.</div>
<div class="ui" style="left:497.3px;top:146.32px">The PCM can vary the current from 0.0 amps (high pressure) to 1.1</div>
<div class="ui" style="left:497.3px;top:156.58px">amps (low pressure).</div>
<div class="ui" style="left:497.3px;top:166.84px">The pressure control solenoid produces a &quot;torque signal pressure&quot; which</div>
<div class="ui" style="left:497.3px;top:177.10px">determines the final transmission line pressure.</div>
<div class="ui" style="left:497.3px;top:197.62px">Torque signal pressure ranges 0..660 kPa (0..96 psi).</div>
<div class="ui" style="left:497.3px;top:207.88px">Line pressure ranges 380..1585 kPa (55..230 psi).</div>
<div style="position:absolute;left:5px;top:329px;width:766px;height:3.3px;background:#ececec"></div>
<div style="position:absolute;left:7px;top:332.3px;width:763.4px;height:12.7px;background:#a9c9ef"></div>
<div class="big" style="left:373.4px;top:333.2px">TFT °F</div>
<div style="position:absolute;left:7px;top:345px;width:753px;height:106.60000000000002px;background:#fff"></div>
<div style="position:absolute;left:7px;top:345px;width:13.1px;height:106.60000000000002px;background:#a9c9ef"></div>
<div class="big" style="left:13.6px;top:420px;transform:translate(-50%,-50%) rotate(-90deg);font-size:10.5px">Torque Signal Pressure PSI</div>
<div style="position:absolute;left:760px;top:345px;width:10.4px;height:106.60000000000002px;background:linear-gradient(90deg,#f8f8f8,#e2e2e2)"></div>
<svg style="position:absolute;left:760.5px;top:348px" width="9" height="6"><polyline points="2,4.5 4.5,2 7,4.5" stroke="#404040" stroke-width="1.3" fill="none"/></svg>
<div style="position:absolute;left:760.5px;top:356.6px;width:9px;height:10.1px;background:#c8c8c8"></div>
<div style="left:20.1px;top:345.0px;width:469.00px;height:12.6px;background:#f0f0f0"></div>
<div class="tx hd" style="left:42.00px;top:342.50px;width:23.30px"><span class="num">-42</span></div>
<div class="tx hd" style="left:68.30px;top:342.50px;width:23.30px"><span class="num">-20</span></div>
<div class="tx hd" style="left:94.60px;top:342.50px;width:23.30px"><span class="num">1</span></div>
<div class="tx hd" style="left:120.90px;top:342.50px;width:23.30px"><span class="num">23</span></div>
<div class="tx hd" style="left:147.20px;top:342.50px;width:23.30px"><span class="num">46</span></div>
<div class="tx hd" style="left:173.50px;top:342.50px;width:23.30px"><span class="num">68</span></div>
<div class="tx hd" style="left:199.80px;top:342.50px;width:23.30px"><span class="num">90</span></div>
<div class="tx hd" style="left:226.10px;top:342.50px;width:23.30px"><span class="num">111</span></div>
<div class="tx hd" style="left:252.40px;top:342.50px;width:23.30px"><span class="num">133</span></div>
<div class="tx hd" style="left:278.70px;top:342.50px;width:23.30px"><span class="num">154</span></div>
<div class="tx hd" style="left:305.00px;top:342.50px;width:23.30px"><span class="num">176</span></div>
<div class="tx hd" style="left:331.30px;top:342.50px;width:23.30px"><span class="num">198</span></div>
<div class="tx hd" style="left:357.60px;top:342.50px;width:23.30px"><span class="num">219</span></div>
<div class="tx hd" style="left:383.90px;top:342.50px;width:23.30px"><span class="num">241</span></div>
<div class="tx hd" style="left:410.20px;top:342.50px;width:23.30px"><span class="num">262</span></div>
<div class="tx hd" style="left:436.50px;top:342.50px;width:23.30px"><span class="num">284</span></div>
<div class="tx hd" style="left:462.80px;top:342.50px;width:23.30px"><span class="num">306</span></div>
<div style="left:20.1px;top:357.40px;width:21.9px;height:12.85px;background:#f0f0f0"></div>
<div class="tx hd" style="left:20.1px;top:356.00px;width:19.0px"><span class="num">0.0</span></div>
<div style="left:42.00px;top:357.40px;width:26.80px;height:13.35px;background:#2a2aff"></div>
<div style="left:42.30px;top:357.40px;width:25.70px;height:12.85px;background:#ff0000;border-radius:4.5px"></div>
<div style="left:68.30px;top:357.40px;width:26.80px;height:13.35px;background:#2a2aff"></div>
<div style="left:68.60px;top:357.40px;width:25.70px;height:12.85px;background:#ff0000;border-radius:4.5px"></div>
<div style="left:94.60px;top:357.40px;width:26.80px;height:13.35px;background:#2a2aff"></div>
<div style="left:94.90px;top:357.40px;width:25.70px;height:12.85px;background:#ff0000;border-radius:4.5px"></div>
<div style="left:120.90px;top:357.40px;width:26.80px;height:13.35px;background:#2a2aff"></div>
<div style="left:121.20px;top:357.40px;width:25.70px;height:12.85px;background:#ff0000;border-radius:4.5px"></div>
<div style="left:147.20px;top:357.40px;width:26.80px;height:13.35px;background:#2a2aff"></div>
<div style="left:147.50px;top:357.40px;width:25.70px;height:12.85px;background:#ff0000;border-radius:4.5px"></div>
<div style="left:173.50px;top:357.40px;width:26.80px;height:13.35px;background:#2a2aff"></div>
<div style="left:173.80px;top:357.40px;width:25.70px;height:12.85px;background:#ff0000;border-radius:4.5px"></div>
<div style="left:199.80px;top:357.40px;width:26.80px;height:13.35px;background:#2a2aff"></div>
<div style="left:200.10px;top:357.40px;width:25.70px;height:12.85px;background:#ff0000;border-radius:4.5px"></div>
<div style="left:226.10px;top:357.40px;width:26.80px;height:13.35px;background:#2a2aff"></div>
<div style="left:226.40px;top:357.40px;width:25.70px;height:12.85px;background:#ff0000;border-radius:4.5px"></div>
<div style="left:252.40px;top:357.40px;width:26.80px;height:13.35px;background:#2a2aff"></div>
<div style="left:252.70px;top:357.40px;width:25.70px;height:12.85px;background:#ff0000;border-radius:4.5px"></div>
<div style="left:278.70px;top:357.40px;width:26.80px;height:13.35px;background:#2a2aff"></div>
<div style="left:279.00px;top:357.40px;width:25.70px;height:12.85px;background:#ff0000;border-radius:4.5px"></div>
<div style="left:305.00px;top:357.40px;width:26.80px;height:13.35px;background:#2a2aff"></div>
<div style="left:305.30px;top:357.40px;width:25.70px;height:12.85px;background:#ff0000;border-radius:4.5px"></div>
<div style="left:331.30px;top:357.40px;width:26.80px;height:13.35px;background:#2a2aff"></div>
<div style="left:331.60px;top:357.40px;width:25.70px;height:12.85px;background:#ff0000;border-radius:4.5px"></div>
<div style="left:357.60px;top:357.40px;width:26.80px;height:13.35px;background:#2a2aff"></div>
<div style="left:357.90px;top:357.40px;width:25.70px;height:12.85px;background:#ff0000;border-radius:4.5px"></div>
<div style="left:383.90px;top:357.40px;width:26.80px;height:13.35px;background:#2a2aff"></div>
<div style="left:384.20px;top:357.40px;width:25.70px;height:12.85px;background:#ff0000;border-radius:4.5px"></div>
<div style="left:410.20px;top:357.40px;width:26.80px;height:13.35px;background:#2a2aff"></div>
<div style="left:410.50px;top:357.40px;width:25.70px;height:12.85px;background:#ff0000;border-radius:4.5px"></div>
<div style="left:436.50px;top:357.40px;width:26.80px;height:13.35px;background:#2a2aff"></div>
<div style="left:436.80px;top:357.40px;width:25.70px;height:12.85px;background:#ff0000;border-radius:4.5px"></div>
<div style="left:462.80px;top:357.40px;width:26.80px;height:13.35px;background:#2a2aff"></div>
<div style="left:463.10px;top:357.40px;width:25.70px;height:12.85px;background:#ff0000;border-radius:4.5px"></div>
<div style="left:20.1px;top:370.25px;width:21.9px;height:12.85px;background:#f0f0f0"></div>
<div class="tx hd" style="left:20.1px;top:368.85px;width:19.0px"><span class="num">6.0</span></div>
<div style="left:42.00px;top:370.25px;width:26.80px;height:13.35px;background:#2a2aff"></div>
<div style="left:42.30px;top:370.25px;width:25.70px;height:12.85px;background:#ff2d00;border-radius:4.5px"></div>
<div style="left:68.30px;top:370.25px;width:26.80px;height:13.35px;background:#2a2aff"></div>
<div style="left:68.60px;top:370.25px;width:25.70px;height:12.85px;background:#ff2d00;border-radius:4.5px"></div>
<div style="left:94.60px;top:370.25px;width:26.80px;height:13.35px;background:#2a2aff"></div>
<div style="left:94.90px;top:370.25px;width:25.70px;height:12.85px;background:#ff2d00;border-radius:4.5px"></div>
<div style="left:120.90px;top:370.25px;width:26.80px;height:13.35px;background:#2a2aff"></div>
<div style="left:121.20px;top:370.25px;width:25.70px;height:12.85px;background:#ff2d00;border-radius:4.5px"></div>
<div style="left:147.20px;top:370.25px;width:26.80px;height:13.35px;background:#2a2aff"></div>
<div style="left:147.50px;top:370.25px;width:25.70px;height:12.85px;background:#ff2d00;border-radius:4.5px"></div>
<div style="left:173.50px;top:370.25px;width:26.80px;height:13.35px;background:#2a2aff"></div>
<div style="left:173.80px;top:370.25px;width:25.70px;height:12.85px;background:#ff2d00;border-radius:4.5px"></div>
<div style="left:199.80px;top:370.25px;width:26.80px;height:13.35px;background:#2a2aff"></div>
<div style="left:200.10px;top:370.25px;width:25.70px;height:12.85px;background:#ff2d00;border-radius:4.5px"></div>
<div style="left:226.10px;top:370.25px;width:26.80px;height:13.35px;background:#2a2aff"></div>
<div style="left:226.40px;top:370.25px;width:25.70px;height:12.85px;background:#ff2d00;border-radius:4.5px"></div>
<div style="left:252.40px;top:370.25px;width:26.80px;height:13.35px;background:#2a2aff"></div>
<div style="left:252.70px;top:370.25px;width:25.70px;height:12.85px;background:#ff2d00;border-radius:4.5px"></div>
<div style="left:278.70px;top:370.25px;width:26.80px;height:13.35px;background:#2a2aff"></div>
<div style="left:279.00px;top:370.25px;width:25.70px;height:12.85px;background:#ff2d00;border-radius:4.5px"></div>
<div style="left:305.00px;top:370.25px;width:26.80px;height:13.35px;background:#2a2aff"></div>
<div style="left:305.30px;top:370.25px;width:25.70px;height:12.85px;background:#ff2d00;border-radius:4.5px"></div>
<div style="left:331.30px;top:370.25px;width:26.80px;height:13.35px;background:#2a2aff"></div>
<div style="left:331.60px;top:370.25px;width:25.70px;height:12.85px;background:#ff2d00;border-radius:4.5px"></div>
<div style="left:357.60px;top:370.25px;width:26.80px;height:13.35px;background:#2a2aff"></div>
<div style="left:357.90px;top:370.25px;width:25.70px;height:12.85px;background:#ff2d00;border-radius:4.5px"></div>
<div style="left:383.90px;top:370.25px;width:26.80px;height:13.35px;background:#2a2aff"></div>
<div style="left:384.20px;top:370.25px;width:25.70px;height:12.85px;background:#ff2d00;border-radius:4.5px"></div>
<div style="left:410.20px;top:370.25px;width:26.80px;height:13.35px;background:#2a2aff"></div>
<div style="left:410.50px;top:370.25px;width:25.70px;height:12.85px;background:#ff2d00;border-radius:4.5px"></div>
<div style="left:436.50px;top:370.25px;width:26.80px;height:13.35px;background:#2a2aff"></div>
<div style="left:436.80px;top:370.25px;width:25.70px;height:12.85px;background:#ff2d00;border-radius:4.5px"></div>
<div style="left:462.80px;top:370.25px;width:26.80px;height:13.35px;background:#2a2aff"></div>
<div style="left:463.10px;top:370.25px;width:25.70px;height:12.85px;background:#ff2d00;border-radius:4.5px"></div>
<div style="left:20.1px;top:383.10px;width:21.9px;height:12.85px;background:#f0f0f0"></div>
<div class="tx hd" style="left:20.1px;top:381.70px;width:19.0px"><span class="num">12.0</span></div>
<div style="left:42.00px;top:383.10px;width:26.80px;height:13.35px;background:#ff8800"></div>
<div style="left:68.30px;top:383.10px;width:26.80px;height:13.35px;background:#ff7e00"></div>
<div style="left:94.60px;top:383.10px;width:26.80px;height:13.35px;background:#ff7e00"></div>
<div style="left:120.90px;top:383.10px;width:26.80px;height:13.35px;background:#ff7e00"></div>
<div style="left:147.20px;top:383.10px;width:26.80px;height:13.35px;background:#ff7e00"></div>
<div style="left:173.50px;top:383.10px;width:26.80px;height:13.35px;background:#ff7e00"></div>
<div style="left:199.80px;top:383.10px;width:26.80px;height:13.35px;background:#ff7e00"></div>
<div style="left:226.10px;top:383.10px;width:26.80px;height:13.35px;background:#ff7e00"></div>
<div style="left:252.40px;top:383.10px;width:26.80px;height:13.35px;background:#ff7e00"></div>
<div style="left:278.70px;top:383.10px;width:26.80px;height:13.35px;background:#ff7e00"></div>
<div style="left:305.00px;top:383.10px;width:26.80px;height:13.35px;background:#ff7e00"></div>
<div style="left:331.30px;top:383.10px;width:26.80px;height:13.35px;background:#ff7e00"></div>
<div style="left:357.60px;top:383.10px;width:26.80px;height:13.35px;background:#ff7e00"></div>
<div style="left:383.90px;top:383.10px;width:26.80px;height:13.35px;background:#ff7e00"></div>
<div style="left:410.20px;top:383.10px;width:26.80px;height:13.35px;background:#ff8800"></div>
<div style="left:436.50px;top:383.10px;width:26.80px;height:13.35px;background:#ff8800"></div>
<div style="left:462.80px;top:383.10px;width:26.80px;height:13.35px;background:#ff8800"></div>
<div style="left:20.1px;top:395.95px;width:21.9px;height:12.85px;background:#f0f0f0"></div>
<div class="tx hd" style="left:20.1px;top:394.55px;width:19.0px"><span class="num">18.0</span></div>
<div style="left:42.00px;top:395.95px;width:26.80px;height:13.35px;background:#ffb300"></div>
<div style="left:68.30px;top:395.95px;width:26.80px;height:13.35px;background:#ffb300"></div>
<div style="left:94.60px;top:395.95px;width:26.80px;height:13.35px;background:#ffb300"></div>
<div style="left:120.90px;top:395.95px;width:26.80px;height:13.35px;background:#ffb300"></div>
<div style="left:147.20px;top:395.95px;width:26.80px;height:13.35px;background:#ffb300"></div>
<div style="left:173.50px;top:395.95px;width:26.80px;height:13.35px;background:#ffb300"></div>
<div style="left:199.80px;top:395.95px;width:26.80px;height:13.35px;background:#ffba00"></div>
<div style="left:226.10px;top:395.95px;width:26.80px;height:13.35px;background:#ffba00"></div>
<div style="left:252.40px;top:395.95px;width:26.80px;height:13.35px;background:#ffba00"></div>
<div style="left:278.70px;top:395.95px;width:26.80px;height:13.35px;background:#ffba00"></div>
<div style="left:305.00px;top:395.95px;width:26.80px;height:13.35px;background:#ffba00"></div>
<div style="left:331.30px;top:395.95px;width:26.80px;height:13.35px;background:#ffba00"></div>
<div style="left:357.60px;top:395.95px;width:26.80px;height:13.35px;background:#ffba00"></div>
<div style="left:383.90px;top:395.95px;width:26.80px;height:13.35px;background:#ffba00"></div>
<div style="left:410.20px;top:395.95px;width:26.80px;height:13.35px;background:#ffba00"></div>
<div style="left:436.50px;top:395.95px;width:26.80px;height:13.35px;background:#ffba00"></div>
<div style="left:462.80px;top:395.95px;width:26.80px;height:13.35px;background:#ffba00"></div>
<div style="left:20.1px;top:408.80px;width:21.9px;height:12.85px;background:#f0f0f0"></div>
<div class="tx hd" style="left:20.1px;top:407.40px;width:19.0px"><span class="num">24.0</span></div>
<div style="left:42.00px;top:408.80px;width:26.80px;height:13.35px;background:#ffc400"></div>
<div style="left:68.30px;top:408.80px;width:26.80px;height:13.35px;background:#ffc400"></div>
<div style="left:94.60px;top:408.80px;width:26.80px;height:13.35px;background:#ffc400"></div>
<div style="left:120.90px;top:408.80px;width:26.80px;height:13.35px;background:#ffc400"></div>
<div style="left:147.20px;top:408.80px;width:26.80px;height:13.35px;background:#ffc400"></div>
<div style="left:173.50px;top:408.80px;width:26.80px;height:13.35px;background:#ffc400"></div>
<div style="left:199.80px;top:408.80px;width:26.80px;height:13.35px;background:#ffc400"></div>
<div style="left:226.10px;top:408.80px;width:26.80px;height:13.35px;background:#ffc400"></div>
<div style="left:252.40px;top:408.80px;width:26.80px;height:13.35px;background:#ffc400"></div>
<div style="left:278.70px;top:408.80px;width:26.80px;height:13.35px;background:#ffce00"></div>
<div style="left:305.00px;top:408.80px;width:26.80px;height:13.35px;background:#ffce00"></div>
<div style="left:331.30px;top:408.80px;width:26.80px;height:13.35px;background:#ffce00"></div>
<div style="left:357.60px;top:408.80px;width:26.80px;height:13.35px;background:#ffce00"></div>
<div style="left:383.90px;top:408.80px;width:26.80px;height:13.35px;background:#ffce00"></div>
<div style="left:410.20px;top:408.80px;width:26.80px;height:13.35px;background:#ffce00"></div>
<div style="left:436.50px;top:408.80px;width:26.80px;height:13.35px;background:#ffce00"></div>
<div style="left:462.80px;top:408.80px;width:26.80px;height:13.35px;background:#ffce00"></div>
<div style="left:20.1px;top:421.65px;width:21.9px;height:12.85px;background:#f0f0f0"></div>
<div class="tx hd" style="left:20.1px;top:420.25px;width:19.0px"><span class="num">30.0</span></div>
<div style="left:42.00px;top:421.65px;width:26.80px;height:13.35px;background:#ffd500"></div>
<div style="left:68.30px;top:421.65px;width:26.80px;height:13.35px;background:#ffd500"></div>
<div style="left:94.60px;top:421.65px;width:26.80px;height:13.35px;background:#ffd500"></div>
<div style="left:120.90px;top:421.65px;width:26.80px;height:13.35px;background:#ffd500"></div>
<div style="left:147.20px;top:421.65px;width:26.80px;height:13.35px;background:#ffd500"></div>
<div style="left:173.50px;top:421.65px;width:26.80px;height:13.35px;background:#ffd500"></div>
<div style="left:199.80px;top:421.65px;width:26.80px;height:13.35px;background:#ffd500"></div>
<div style="left:226.10px;top:421.65px;width:26.80px;height:13.35px;background:#ffd500"></div>
<div style="left:252.40px;top:421.65px;width:26.80px;height:13.35px;background:#ffd500"></div>
<div style="left:278.70px;top:421.65px;width:26.80px;height:13.35px;background:#ffd500"></div>
<div style="left:305.00px;top:421.65px;width:26.80px;height:13.35px;background:#ffd500"></div>
<div style="left:331.30px;top:421.65px;width:26.80px;height:13.35px;background:#ffdf00"></div>
<div style="left:357.60px;top:421.65px;width:26.80px;height:13.35px;background:#ffdf00"></div>
<div style="left:383.90px;top:421.65px;width:26.80px;height:13.35px;background:#ffdf00"></div>
<div style="left:410.20px;top:421.65px;width:26.80px;height:13.35px;background:#ffdf00"></div>
<div style="left:436.50px;top:421.65px;width:26.80px;height:13.35px;background:#ffdf00"></div>
<div style="left:462.80px;top:421.65px;width:26.80px;height:13.35px;background:#ffdf00"></div>
<div style="left:20.1px;top:434.50px;width:21.9px;height:12.85px;background:#f0f0f0"></div>
<div class="tx hd" style="left:20.1px;top:433.10px;width:19.0px"><span class="num">36.0</span></div>
<div style="left:42.00px;top:434.50px;width:26.80px;height:13.35px;background:#ffdf00"></div>
<div style="left:68.30px;top:434.50px;width:26.80px;height:13.35px;background:#ffdf00"></div>
<div style="left:94.60px;top:434.50px;width:26.80px;height:13.35px;background:#ffdf00"></div>
<div style="left:120.90px;top:434.50px;width:26.80px;height:13.35px;background:#ffdf00"></div>
<div style="left:147.20px;top:434.50px;width:26.80px;height:13.35px;background:#ffe600"></div>
<div style="left:173.50px;top:434.50px;width:26.80px;height:13.35px;background:#ffe600"></div>
<div style="left:199.80px;top:434.50px;width:26.80px;height:13.35px;background:#ffe600"></div>
<div style="left:226.10px;top:434.50px;width:26.80px;height:13.35px;background:#ffe600"></div>
<div style="left:252.40px;top:434.50px;width:26.80px;height:13.35px;background:#ffe600"></div>
<div style="left:278.70px;top:434.50px;width:26.80px;height:13.35px;background:#ffe600"></div>
<div style="left:305.00px;top:434.50px;width:26.80px;height:13.35px;background:#ffe600"></div>
<div style="left:331.30px;top:434.50px;width:26.80px;height:13.35px;background:#ffe600"></div>
<div style="left:357.60px;top:434.50px;width:26.80px;height:13.35px;background:#ffe600"></div>
<div style="left:383.90px;top:434.50px;width:26.80px;height:13.35px;background:#fff000"></div>
<div style="left:410.20px;top:434.50px;width:26.80px;height:13.35px;background:#fff000"></div>
<div style="left:436.50px;top:434.50px;width:26.80px;height:13.35px;background:#0f78d8"></div>
<div style="left:462.80px;top:434.50px;width:26.80px;height:13.35px;background:#fff000"></div>
<div style="left:20.1px;top:447.35px;width:21.9px;height:12.85px;background:#f0f0f0"></div>
<div class="tx hd" style="left:20.1px;top:445.95px;width:19.0px"><span class="num">42.0</span></div>
<div style="left:42.00px;top:447.35px;width:26.80px;height:13.35px;background:#fff000"></div>
<div style="left:68.30px;top:447.35px;width:26.80px;height:13.35px;background:#fffa00"></div>
<div style="left:94.60px;top:447.35px;width:26.80px;height:13.35px;background:#fff000"></div>
<div style="left:120.90px;top:447.35px;width:26.80px;height:13.35px;background:#fff000"></div>
<div style="left:147.20px;top:447.35px;width:26.80px;height:13.35px;background:#fffa00"></div>
<div style="left:173.50px;top:447.35px;width:26.80px;height:13.35px;background:#fffa00"></div>
<div style="left:199.80px;top:447.35px;width:26.80px;height:13.35px;background:#fffa00"></div>
<div style="left:226.10px;top:447.35px;width:26.80px;height:13.35px;background:#fffa00"></div>
<div style="left:252.40px;top:447.35px;width:26.80px;height:13.35px;background:#fffa00"></div>
<div style="left:278.70px;top:447.35px;width:26.80px;height:13.35px;background:#fffa00"></div>
<div style="left:305.00px;top:447.35px;width:26.80px;height:13.35px;background:#fffa00"></div>
<div style="left:331.30px;top:447.35px;width:26.80px;height:13.35px;background:#fffa00"></div>
<div style="left:357.60px;top:447.35px;width:26.80px;height:13.35px;background:#fffa00"></div>
<div style="left:383.90px;top:447.35px;width:26.80px;height:13.35px;background:#fdff00"></div>
<div style="left:410.20px;top:447.35px;width:26.80px;height:13.35px;background:#fdff00"></div>
<div style="left:436.50px;top:447.35px;width:26.80px;height:13.35px;background:#fdff00"></div>
<div style="left:462.80px;top:447.35px;width:26.80px;height:13.35px;background:#fdff00"></div>
<div style="left:67.80px;top:357.40px;width:1px;height:94.20px;background:rgba(160,160,160,0.55)"></div>
<div style="left:94.10px;top:357.40px;width:1px;height:94.20px;background:rgba(160,160,160,0.55)"></div>
<div style="left:120.40px;top:357.40px;width:1px;height:94.20px;background:rgba(160,160,160,0.55)"></div>
<div style="left:146.70px;top:357.40px;width:1px;height:94.20px;background:rgba(160,160,160,0.55)"></div>
<div style="left:173.00px;top:357.40px;width:1px;height:94.20px;background:rgba(160,160,160,0.55)"></div>
<div style="left:199.30px;top:357.40px;width:1px;height:94.20px;background:rgba(160,160,160,0.55)"></div>
<div style="left:225.60px;top:357.40px;width:1px;height:94.20px;background:rgba(160,160,160,0.55)"></div>
<div style="left:251.90px;top:357.40px;width:1px;height:94.20px;background:rgba(160,160,160,0.55)"></div>
<div style="left:278.20px;top:357.40px;width:1px;height:94.20px;background:rgba(160,160,160,0.55)"></div>
<div style="left:304.50px;top:357.40px;width:1px;height:94.20px;background:rgba(160,160,160,0.55)"></div>
<div style="left:330.80px;top:357.40px;width:1px;height:94.20px;background:rgba(160,160,160,0.55)"></div>
<div style="left:357.10px;top:357.40px;width:1px;height:94.20px;background:rgba(160,160,160,0.55)"></div>
<div style="left:383.40px;top:357.40px;width:1px;height:94.20px;background:rgba(160,160,160,0.55)"></div>
<div style="left:409.70px;top:357.40px;width:1px;height:94.20px;background:rgba(160,160,160,0.55)"></div>
<div style="left:436.00px;top:357.40px;width:1px;height:94.20px;background:rgba(160,160,160,0.55)"></div>
<div style="left:462.30px;top:357.40px;width:1px;height:94.20px;background:rgba(160,160,160,0.55)"></div>
<div style="left:42.00px;top:369.75px;width:447.10px;height:1px;background:rgba(160,160,160,0.55)"></div>
<div style="left:42.00px;top:382.60px;width:447.10px;height:1px;background:rgba(160,160,160,0.55)"></div>
<div style="left:42.00px;top:395.45px;width:447.10px;height:1px;background:rgba(160,160,160,0.55)"></div>
<div style="left:42.00px;top:408.30px;width:447.10px;height:1px;background:rgba(160,160,160,0.55)"></div>
<div style="left:42.00px;top:421.15px;width:447.10px;height:1px;background:rgba(160,160,160,0.55)"></div>
<div style="left:42.00px;top:434.00px;width:447.10px;height:1px;background:rgba(160,160,160,0.55)"></div>
<div style="left:42.00px;top:446.85px;width:447.10px;height:1px;background:rgba(160,160,160,0.55)"></div>
<div style="left:20.1px;top:356.60px;width:469.00px;height:1px;background:#505050"></div>
<div style="left:41.40px;top:345.00px;width:1px;height:12.6px;background:#505050"></div>
<div style="left:67.70px;top:345.00px;width:1px;height:12.6px;background:#505050"></div>
<div style="left:94.00px;top:345.00px;width:1px;height:12.6px;background:#505050"></div>
<div style="left:120.30px;top:345.00px;width:1px;height:12.6px;background:#505050"></div>
<div style="left:146.60px;top:345.00px;width:1px;height:12.6px;background:#505050"></div>
<div style="left:172.90px;top:345.00px;width:1px;height:12.6px;background:#505050"></div>
<div style="left:199.20px;top:345.00px;width:1px;height:12.6px;background:#505050"></div>
<div style="left:225.50px;top:345.00px;width:1px;height:12.6px;background:#505050"></div>
<div style="left:251.80px;top:345.00px;width:1px;height:12.6px;background:#505050"></div>
<div style="left:278.10px;top:345.00px;width:1px;height:12.6px;background:#505050"></div>
<div style="left:304.40px;top:345.00px;width:1px;height:12.6px;background:#505050"></div>
<div style="left:330.70px;top:345.00px;width:1px;height:12.6px;background:#505050"></div>
<div style="left:357.00px;top:345.00px;width:1px;height:12.6px;background:#505050"></div>
<div style="left:383.30px;top:345.00px;width:1px;height:12.6px;background:#505050"></div>
<div style="left:409.60px;top:345.00px;width:1px;height:12.6px;background:#505050"></div>
<div style="left:435.90px;top:345.00px;width:1px;height:12.6px;background:#505050"></div>
<div style="left:462.20px;top:345.00px;width:1px;height:12.6px;background:#505050"></div>
<div style="left:488.50px;top:345.00px;width:1px;height:12.6px;background:#505050"></div>
<div style="left:41.40px;top:357.40px;width:1px;height:94.20px;background:#505050"></div>
<div style="left:20.1px;top:369.65px;width:21.9px;height:1px;background:#505050"></div>
<div style="left:20.1px;top:382.50px;width:21.9px;height:1px;background:#505050"></div>
<div style="left:20.1px;top:395.35px;width:21.9px;height:1px;background:#505050"></div>
<div style="left:20.1px;top:408.20px;width:21.9px;height:1px;background:#505050"></div>
<div style="left:20.1px;top:421.05px;width:21.9px;height:1px;background:#505050"></div>
<div style="left:20.1px;top:433.90px;width:21.9px;height:1px;background:#505050"></div>
<div style="left:20.1px;top:446.75px;width:21.9px;height:1px;background:#505050"></div>
<div style="left:20.1px;top:459.60px;width:21.9px;height:1px;background:#505050"></div>
<div class="tx dt" style="left:42.00px;top:355.80px;width:26.30px;color:#141414"><span class="num">1.150</span></div>
<div class="tx dt" style="left:68.30px;top:355.80px;width:26.30px;color:#141414"><span class="num">1.150</span></div>
<div class="tx dt" style="left:94.60px;top:355.80px;width:26.30px;color:#141414"><span class="num">1.150</span></div>
<div class="tx dt" style="left:120.90px;top:355.80px;width:26.30px;color:#141414"><span class="num">1.150</span></div>
<div class="tx dt" style="left:147.20px;top:355.80px;width:26.30px;color:#141414"><span class="num">1.150</span></div>
<div class="tx dt" style="left:173.50px;top:355.80px;width:26.30px;color:#141414"><span class="num">1.150</span></div>
<div class="tx dt" style="left:199.80px;top:355.80px;width:26.30px;color:#141414"><span class="num">1.150</span></div>
<div class="tx dt" style="left:226.10px;top:355.80px;width:26.30px;color:#141414"><span class="num">1.150</span></div>
<div class="tx dt" style="left:252.40px;top:355.80px;width:26.30px;color:#141414"><span class="num">1.150</span></div>
<div class="tx dt" style="left:278.70px;top:355.80px;width:26.30px;color:#141414"><span class="num">1.150</span></div>
<div class="tx dt" style="left:305.00px;top:355.80px;width:26.30px;color:#141414"><span class="num">1.150</span></div>
<div class="tx dt" style="left:331.30px;top:355.80px;width:26.30px;color:#141414"><span class="num">1.150</span></div>
<div class="tx dt" style="left:357.60px;top:355.80px;width:26.30px;color:#141414"><span class="num">1.150</span></div>
<div class="tx dt" style="left:383.90px;top:355.80px;width:26.30px;color:#141414"><span class="num">1.150</span></div>
<div class="tx dt" style="left:410.20px;top:355.80px;width:26.30px;color:#141414"><span class="num">1.150</span></div>
<div class="tx dt" style="left:436.50px;top:355.80px;width:26.30px;color:#141414"><span class="num">1.150</span></div>
<div class="tx dt" style="left:462.80px;top:355.80px;width:26.30px;color:#141414"><span class="num">1.150</span></div>
<div class="tx dt" style="left:42.00px;top:368.65px;width:26.30px;color:#141414"><span class="num">1.060</span></div>
<div class="tx dt" style="left:68.30px;top:368.65px;width:26.30px;color:#141414"><span class="num">1.060</span></div>
<div class="tx dt" style="left:94.60px;top:368.65px;width:26.30px;color:#141414"><span class="num">1.060</span></div>
<div class="tx dt" style="left:120.90px;top:368.65px;width:26.30px;color:#141414"><span class="num">1.060</span></div>
<div class="tx dt" style="left:147.20px;top:368.65px;width:26.30px;color:#141414"><span class="num">1.060</span></div>
<div class="tx dt" style="left:173.50px;top:368.65px;width:26.30px;color:#141414"><span class="num">1.060</span></div>
<div class="tx dt" style="left:199.80px;top:368.65px;width:26.30px;color:#141414"><span class="num">1.060</span></div>
<div class="tx dt" style="left:226.10px;top:368.65px;width:26.30px;color:#141414"><span class="num">1.060</span></div>
<div class="tx dt" style="left:252.40px;top:368.65px;width:26.30px;color:#141414"><span class="num">1.060</span></div>
<div class="tx dt" style="left:278.70px;top:368.65px;width:26.30px;color:#141414"><span class="num">1.060</span></div>
<div class="tx dt" style="left:305.00px;top:368.65px;width:26.30px;color:#141414"><span class="num">1.060</span></div>
<div class="tx dt" style="left:331.30px;top:368.65px;width:26.30px;color:#141414"><span class="num">1.060</span></div>
<div class="tx dt" style="left:357.60px;top:368.65px;width:26.30px;color:#141414"><span class="num">1.060</span></div>
<div class="tx dt" style="left:383.90px;top:368.65px;width:26.30px;color:#141414"><span class="num">1.060</span></div>
<div class="tx dt" style="left:410.20px;top:368.65px;width:26.30px;color:#141414"><span class="num">1.060</span></div>
<div class="tx dt" style="left:436.50px;top:368.65px;width:26.30px;color:#141414"><span class="num">1.060</span></div>
<div class="tx dt" style="left:462.80px;top:368.65px;width:26.30px;color:#141414"><span class="num">1.060</span></div>
<div class="tx dt" style="left:42.00px;top:381.50px;width:26.30px;color:#141414"><span class="num">0.877</span></div>
<div class="tx dt" style="left:68.30px;top:381.50px;width:26.30px;color:#141414"><span class="num">0.897</span></div>
<div class="tx dt" style="left:94.60px;top:381.50px;width:26.30px;color:#141414"><span class="num">0.897</span></div>
<div class="tx dt" style="left:120.90px;top:381.50px;width:26.30px;color:#141414"><span class="num">0.897</span></div>
<div class="tx dt" style="left:147.20px;top:381.50px;width:26.30px;color:#141414"><span class="num">0.897</span></div>
<div class="tx dt" style="left:173.50px;top:381.50px;width:26.30px;color:#141414"><span class="num">0.897</span></div>
<div class="tx dt" style="left:199.80px;top:381.50px;width:26.30px;color:#141414"><span class="num">0.897</span></div>
<div class="tx dt" style="left:226.10px;top:381.50px;width:26.30px;color:#141414"><span class="num">0.897</span></div>
<div class="tx dt" style="left:252.40px;top:381.50px;width:26.30px;color:#141414"><span class="num">0.897</span></div>
<div class="tx dt" style="left:278.70px;top:381.50px;width:26.30px;color:#141414"><span class="num">0.897</span></div>
<div class="tx dt" style="left:305.00px;top:381.50px;width:26.30px;color:#141414"><span class="num">0.897</span></div>
<div class="tx dt" style="left:331.30px;top:381.50px;width:26.30px;color:#141414"><span class="num">0.897</span></div>
<div class="tx dt" style="left:357.60px;top:381.50px;width:26.30px;color:#141414"><span class="num">0.897</span></div>
<div class="tx dt" style="left:383.90px;top:381.50px;width:26.30px;color:#141414"><span class="num">0.897</span></div>
<div class="tx dt" style="left:410.20px;top:381.50px;width:26.30px;color:#141414"><span class="num">0.877</span></div>
<div class="tx dt" style="left:436.50px;top:381.50px;width:26.30px;color:#141414"><span class="num">0.877</span></div>
<div class="tx dt" style="left:462.80px;top:381.50px;width:26.30px;color:#141414"><span class="num">0.877</span></div>
<div class="tx dt" style="left:42.00px;top:394.35px;width:26.30px;color:#141414"><span class="num">0.789</span></div>
<div class="tx dt" style="left:68.30px;top:394.35px;width:26.30px;color:#141414"><span class="num">0.789</span></div>
<div class="tx dt" style="left:94.60px;top:394.35px;width:26.30px;color:#141414"><span class="num">0.789</span></div>
<div class="tx dt" style="left:120.90px;top:394.35px;width:26.30px;color:#141414"><span class="num">0.789</span></div>
<div class="tx dt" style="left:147.20px;top:394.35px;width:26.30px;color:#141414"><span class="num">0.789</span></div>
<div class="tx dt" style="left:173.50px;top:394.35px;width:26.30px;color:#141414"><span class="num">0.789</span></div>
<div class="tx dt" style="left:199.80px;top:394.35px;width:26.30px;color:#141414"><span class="num">0.775</span></div>
<div class="tx dt" style="left:226.10px;top:394.35px;width:26.30px;color:#141414"><span class="num">0.775</span></div>
<div class="tx dt" style="left:252.40px;top:394.35px;width:26.30px;color:#141414"><span class="num">0.775</span></div>
<div class="tx dt" style="left:278.70px;top:394.35px;width:26.30px;color:#141414"><span class="num">0.775</span></div>
<div class="tx dt" style="left:305.00px;top:394.35px;width:26.30px;color:#141414"><span class="num">0.775</span></div>
<div class="tx dt" style="left:331.30px;top:394.35px;width:26.30px;color:#141414"><span class="num">0.775</span></div>
<div class="tx dt" style="left:357.60px;top:394.35px;width:26.30px;color:#141414"><span class="num">0.775</span></div>
<div class="tx dt" style="left:383.90px;top:394.35px;width:26.30px;color:#141414"><span class="num">0.775</span></div>
<div class="tx dt" style="left:410.20px;top:394.35px;width:26.30px;color:#141414"><span class="num">0.775</span></div>
<div class="tx dt" style="left:436.50px;top:394.35px;width:26.30px;color:#141414"><span class="num">0.775</span></div>
<div class="tx dt" style="left:462.80px;top:394.35px;width:26.30px;color:#141414"><span class="num">0.775</span></div>
<div class="tx dt" style="left:42.00px;top:407.20px;width:26.30px;color:#141414"><span class="num">0.755</span></div>
<div class="tx dt" style="left:68.30px;top:407.20px;width:26.30px;color:#141414"><span class="num">0.755</span></div>
<div class="tx dt" style="left:94.60px;top:407.20px;width:26.30px;color:#141414"><span class="num">0.755</span></div>
<div class="tx dt" style="left:120.90px;top:407.20px;width:26.30px;color:#141414"><span class="num">0.755</span></div>
<div class="tx dt" style="left:147.20px;top:407.20px;width:26.30px;color:#141414"><span class="num">0.755</span></div>
<div class="tx dt" style="left:173.50px;top:407.20px;width:26.30px;color:#141414"><span class="num">0.755</span></div>
<div class="tx dt" style="left:199.80px;top:407.20px;width:26.30px;color:#141414"><span class="num">0.755</span></div>
<div class="tx dt" style="left:226.10px;top:407.20px;width:26.30px;color:#141414"><span class="num">0.755</span></div>
<div class="tx dt" style="left:252.40px;top:407.20px;width:26.30px;color:#141414"><span class="num">0.755</span></div>
<div class="tx dt" style="left:278.70px;top:407.20px;width:26.30px;color:#141414"><span class="num">0.735</span></div>
<div class="tx dt" style="left:305.00px;top:407.20px;width:26.30px;color:#141414"><span class="num">0.735</span></div>
<div class="tx dt" style="left:331.30px;top:407.20px;width:26.30px;color:#141414"><span class="num">0.735</span></div>
<div class="tx dt" style="left:357.60px;top:407.20px;width:26.30px;color:#141414"><span class="num">0.735</span></div>
<div class="tx dt" style="left:383.90px;top:407.20px;width:26.30px;color:#141414"><span class="num">0.735</span></div>
<div class="tx dt" style="left:410.20px;top:407.20px;width:26.30px;color:#141414"><span class="num">0.735</span></div>
<div class="tx dt" style="left:436.50px;top:407.20px;width:26.30px;color:#141414"><span class="num">0.735</span></div>
<div class="tx dt" style="left:462.80px;top:407.20px;width:26.30px;color:#141414"><span class="num">0.735</span></div>
<div class="tx dt" style="left:42.00px;top:420.05px;width:26.30px;color:#141414"><span class="num">0.721</span></div>
<div class="tx dt" style="left:68.30px;top:420.05px;width:26.30px;color:#141414"><span class="num">0.721</span></div>
<div class="tx dt" style="left:94.60px;top:420.05px;width:26.30px;color:#141414"><span class="num">0.721</span></div>
<div class="tx dt" style="left:120.90px;top:420.05px;width:26.30px;color:#141414"><span class="num">0.721</span></div>
<div class="tx dt" style="left:147.20px;top:420.05px;width:26.30px;color:#141414"><span class="num">0.721</span></div>
<div class="tx dt" style="left:173.50px;top:420.05px;width:26.30px;color:#141414"><span class="num">0.721</span></div>
<div class="tx dt" style="left:199.80px;top:420.05px;width:26.30px;color:#141414"><span class="num">0.721</span></div>
<div class="tx dt" style="left:226.10px;top:420.05px;width:26.30px;color:#141414"><span class="num">0.721</span></div>
<div class="tx dt" style="left:252.40px;top:420.05px;width:26.30px;color:#141414"><span class="num">0.721</span></div>
<div class="tx dt" style="left:278.70px;top:420.05px;width:26.30px;color:#141414"><span class="num">0.721</span></div>
<div class="tx dt" style="left:305.00px;top:420.05px;width:26.30px;color:#141414"><span class="num">0.721</span></div>
<div class="tx dt" style="left:331.30px;top:420.05px;width:26.30px;color:#141414"><span class="num">0.701</span></div>
<div class="tx dt" style="left:357.60px;top:420.05px;width:26.30px;color:#141414"><span class="num">0.701</span></div>
<div class="tx dt" style="left:383.90px;top:420.05px;width:26.30px;color:#141414"><span class="num">0.701</span></div>
<div class="tx dt" style="left:410.20px;top:420.05px;width:26.30px;color:#141414"><span class="num">0.701</span></div>
<div class="tx dt" style="left:436.50px;top:420.05px;width:26.30px;color:#141414"><span class="num">0.701</span></div>
<div class="tx dt" style="left:462.80px;top:420.05px;width:26.30px;color:#141414"><span class="num">0.701</span></div>
<div class="tx dt" style="left:42.00px;top:432.90px;width:26.30px;color:#141414"><span class="num">0.701</span></div>
<div class="tx dt" style="left:68.30px;top:432.90px;width:26.30px;color:#141414"><span class="num">0.701</span></div>
<div class="tx dt" style="left:94.60px;top:432.90px;width:26.30px;color:#141414"><span class="num">0.701</span></div>
<div class="tx dt" style="left:120.90px;top:432.90px;width:26.30px;color:#141414"><span class="num">0.701</span></div>
<div class="tx dt" style="left:147.20px;top:432.90px;width:26.30px;color:#141414"><span class="num">0.686</span></div>
<div class="tx dt" style="left:173.50px;top:432.90px;width:26.30px;color:#141414"><span class="num">0.686</span></div>
<div class="tx dt" style="left:199.80px;top:432.90px;width:26.30px;color:#141414"><span class="num">0.686</span></div>
<div class="tx dt" style="left:226.10px;top:432.90px;width:26.30px;color:#141414"><span class="num">0.686</span></div>
<div class="tx dt" style="left:252.40px;top:432.90px;width:26.30px;color:#141414"><span class="num">0.686</span></div>
<div class="tx dt" style="left:278.70px;top:432.90px;width:26.30px;color:#141414"><span class="num">0.686</span></div>
<div class="tx dt" style="left:305.00px;top:432.90px;width:26.30px;color:#141414"><span class="num">0.686</span></div>
<div class="tx dt" style="left:331.30px;top:432.90px;width:26.30px;color:#141414"><span class="num">0.686</span></div>
<div class="tx dt" style="left:357.60px;top:432.90px;width:26.30px;color:#141414"><span class="num">0.686</span></div>
<div class="tx dt" style="left:383.90px;top:432.90px;width:26.30px;color:#141414"><span class="num">0.667</span></div>
<div class="tx dt" style="left:410.20px;top:432.90px;width:26.30px;color:#141414"><span class="num">0.667</span></div>
<div class="tx dt" style="left:436.50px;top:432.90px;width:26.30px;color:#ffffff"><span class="num">0.667</span></div>
<div class="tx dt" style="left:462.80px;top:432.90px;width:26.30px;color:#141414"><span class="num">0.667</span></div>
<div class="tx dt" style="left:42.00px;top:445.75px;width:26.30px;color:#141414"><span class="num">0.667</span></div>
<div class="tx dt" style="left:68.30px;top:445.75px;width:26.30px;color:#141414"><span class="num">0.647</span></div>
<div class="tx dt" style="left:94.60px;top:445.75px;width:26.30px;color:#141414"><span class="num">0.667</span></div>
<div class="tx dt" style="left:120.90px;top:445.75px;width:26.30px;color:#141414"><span class="num">0.667</span></div>
<div class="tx dt" style="left:147.20px;top:445.75px;width:26.30px;color:#141414"><span class="num">0.647</span></div>
<div class="tx dt" style="left:173.50px;top:445.75px;width:26.30px;color:#141414"><span class="num">0.647</span></div>
<div class="tx dt" style="left:199.80px;top:445.75px;width:26.30px;color:#141414"><span class="num">0.647</span></div>
<div class="tx dt" style="left:226.10px;top:445.75px;width:26.30px;color:#141414"><span class="num">0.647</span></div>
<div class="tx dt" style="left:252.40px;top:445.75px;width:26.30px;color:#141414"><span class="num">0.647</span></div>
<div class="tx dt" style="left:278.70px;top:445.75px;width:26.30px;color:#141414"><span class="num">0.647</span></div>
<div class="tx dt" style="left:305.00px;top:445.75px;width:26.30px;color:#141414"><span class="num">0.647</span></div>
<div class="tx dt" style="left:331.30px;top:445.75px;width:26.30px;color:#141414"><span class="num">0.647</span></div>
<div class="tx dt" style="left:357.60px;top:445.75px;width:26.30px;color:#141414"><span class="num">0.647</span></div>
<div class="tx dt" style="left:383.90px;top:445.75px;width:26.30px;color:#141414"><span class="num">0.632</span></div>
<div class="tx dt" style="left:410.20px;top:445.75px;width:26.30px;color:#141414"><span class="num">0.632</span></div>
<div class="tx dt" style="left:436.50px;top:445.75px;width:26.30px;color:#141414"><span class="num">0.632</span></div>
<div class="tx dt" style="left:462.80px;top:445.75px;width:26.30px;color:#141414"><span class="num">0.632</span></div>
</div>
</div>
</body></html>
